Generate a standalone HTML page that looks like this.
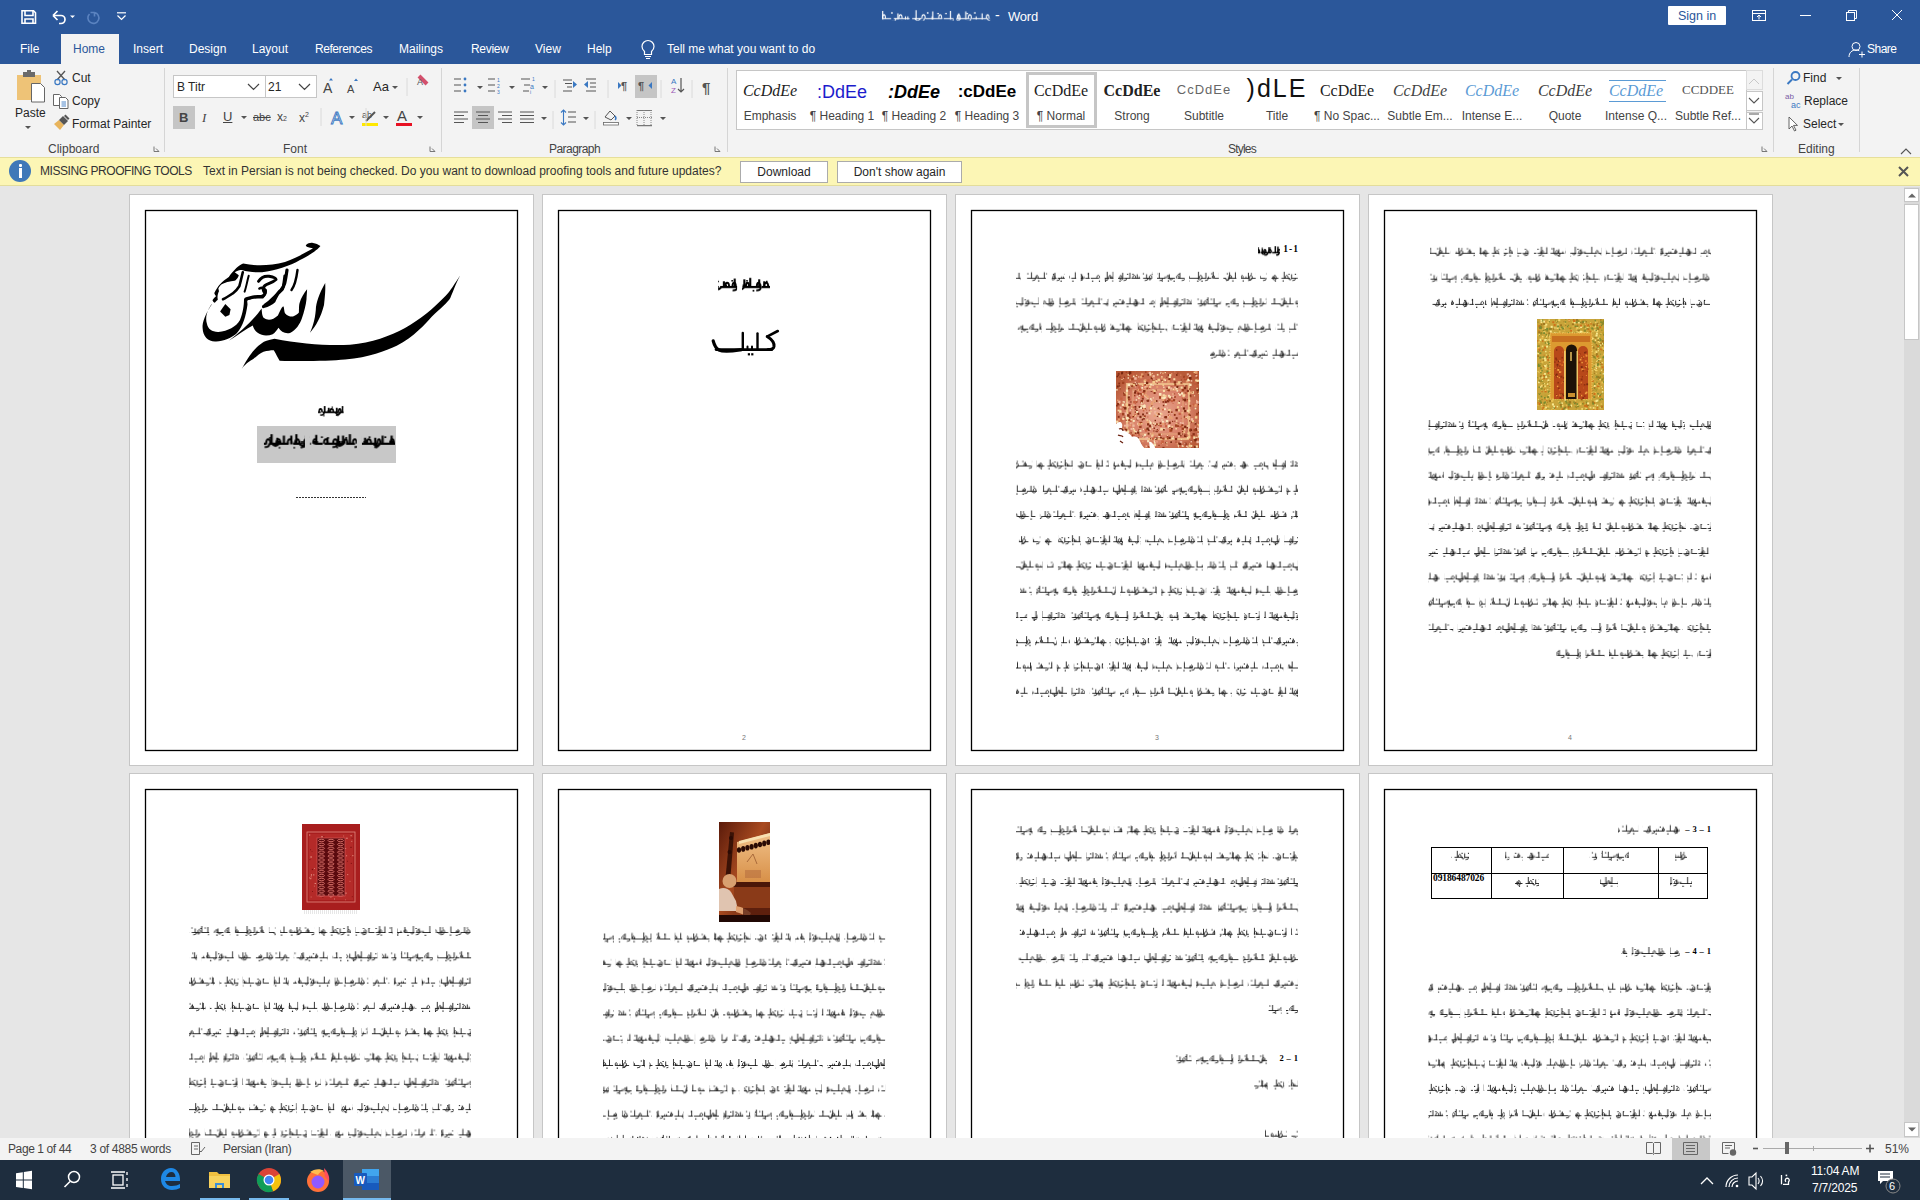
<!DOCTYPE html><html><head><meta charset="utf-8"><title>Word</title><style>

*{margin:0;padding:0;box-sizing:border-box}
html,body{width:1920px;height:1200px;overflow:hidden;background:#e6e6e6;font-family:"Liberation Sans",sans-serif;color:#262626}
.a{position:absolute}
.t{position:absolute;white-space:nowrap;line-height:1}
#tb{left:0;top:0;width:1920px;height:64px;background:#2b579a}
.tab{position:absolute;top:43px;font-size:12px;color:#fff;line-height:1}
#home{left:61px;top:34px;width:58px;height:31px;background:#f3f3f3}
#rib{left:0;top:64px;width:1920px;height:93px;background:#f3f3f3}
.rt{position:absolute;font-size:12px;color:#262626;white-space:nowrap;line-height:1}
.gl{position:absolute;top:143px;font-size:12px;color:#444;white-space:nowrap;line-height:1}
.sep{position:absolute;top:68px;width:1px;height:84px;background:#d5d5d5}
.sep2{position:absolute;width:1px;background:#dadada}
#msg{left:0;top:157px;width:1920px;height:29px;background:#fcf6b5;border-top:1px solid #e6df9a;border-bottom:1px solid #e3dd9c}
.btn{position:absolute;top:161px;height:22px;background:#fff;border:1px solid #ababab;font-size:12px;color:#262626;text-align:center;line-height:20px}
#doc{left:0;top:186px;width:1920px;height:952px;background:#e6e6e6;overflow:hidden}
.pg{position:absolute;width:405px;height:572px;background:#fff;border:1px solid #c6c6c6}
.pb{position:absolute;left:15px;top:15px;width:374px;height:541px;border:1.5px solid #000}
#sb{left:0;top:1138px;width:1920px;height:22px;background:#f3f3f3}
#task{left:0;top:1160px;width:1920px;height:40px;background:#1e2d3e}
.st{position:absolute;top:1143px;font-size:12px;color:#444;white-space:nowrap;line-height:1}

</style></head><body>
<div class="a" id="tb"></div>
<svg class="a" style="left:0;top:0" width="140" height="34" viewBox="0 0 140 34">
<g fill="none" stroke="#fff" stroke-width="1.6">
<path d="M22 10.8h11.5l2 2V23.2H22z"/><path d="M25 11v4.5h8V11"/><path d="M25 23v-4h8v4" />
</g>
<path d="M53 15.5l4.5-4.5M53 15.5l4.5 4.5M53 15.5h8a4 4 0 0 1 0 8h-2" fill="none" stroke="#fff" stroke-width="1.7"/>
<path d="M70 15.5h5l-2.5 2.5z" fill="#fff"/>
<path d="M94.5 12.5a5.5 5.5 0 1 1 -5 1.5M94.5 12.5v4M94.5 12.5h-4" fill="none" stroke="#5b83c0" stroke-width="1.6"/>
<path d="M117 12.8h9" stroke="#fff" stroke-width="1.2"/><path d="M117.5 15.5l4 4l4-4" fill="none" stroke="#fff" stroke-width="1.2"/>
</svg>
<div class="t" style="left:1008px;top:10px;font-size:13px;color:#fff;letter-spacing:-.2px">Word</div>
<div class="t" style="left:995px;top:8px;font-size:14px;color:#fff">-</div>
<div class="a" style="left:1668px;top:6px;width:58px;height:19px;background:#fff;border-radius:1px"></div>
<div class="t" style="left:1678px;top:10px;font-size:12.5px;color:#2b579a">Sign in</div>
<svg class="a" style="left:1740px;top:0" width="180" height="64" viewBox="1740 0 180 64">
<g fill="none" stroke="#fff" stroke-width="1">
<rect x="1752.5" y="10.5" width="13" height="10"/><path d="M1752.5 13.5h13M1759 19.5v-4.5M1757 17l2-2l2 2"/>
<path d="M1800 15.5h11"/>
<rect x="1846.5" y="12.5" width="8" height="8"/><path d="M1848.5 12.5v-2h8v8h-2"/>
<path d="M1892 10l10 10M1902 10l-10 10"/>
<circle cx="1856" cy="46.5" r="4"/><path d="M1849 57c0-4.5 3-7 7-7c1.5 0 2.5 .3 3.3 .8"/><path d="M1859 54.5h6M1862 51.5v6"/>
</g></svg>
<div class="t" style="left:1867px;top:43px;font-size:12px;color:#fff;letter-spacing:-.5px">Share</div>
<div class="a" id="home"></div>
<div class="tab" style="left:20px;color:#fff;letter-spacing:0px">File</div>
<div class="tab" style="left:73px;color:#2b579a;letter-spacing:0px">Home</div>
<div class="tab" style="left:133px;color:#fff;letter-spacing:0px">Insert</div>
<div class="tab" style="left:189px;color:#fff;letter-spacing:0px">Design</div>
<div class="tab" style="left:252px;color:#fff;letter-spacing:0px">Layout</div>
<div class="tab" style="left:315px;color:#fff;letter-spacing:-0.44px">References</div>
<div class="tab" style="left:399px;color:#fff;letter-spacing:0px">Mailings</div>
<div class="tab" style="left:471px;color:#fff;letter-spacing:-0.3px">Review</div>
<div class="tab" style="left:535px;color:#fff;letter-spacing:0px">View</div>
<div class="tab" style="left:587px;color:#fff;letter-spacing:0px">Help</div>
<div class="tab" style="left:667px;color:#fff;letter-spacing:0px">Tell me what you want to do</div>
<svg class="a" style="left:638px;top:38px" width="20" height="22" viewBox="0 0 20 22"><path d="M6.5 13.5c-1.5-1.3-2.5-3-2.5-5a6 6 0 0 1 12 0c0 2-1 3.7-2.5 5v3h-7z" fill="none" stroke="#fff" stroke-width="1.2"/><path d="M7 18.5h6M8 20.5h4" stroke="#fff" stroke-width="1.1"/></svg>
<div class="a" id="rib"></div>
<div class="rt" style="left:15px;top:107px;font-size:12px;">Paste</div>
<div class="rt" style="left:72px;top:72px;font-size:12px;">Cut</div>
<div class="rt" style="left:72px;top:95px;font-size:12px;">Copy</div>
<div class="rt" style="left:72px;top:118px;font-size:12px;">Format Painter</div>
<div class="gl" style="left:48px">Clipboard</div>
<div class="gl" style="left:283px">Font</div>
<div class="gl" style="left:549px;letter-spacing:-.55px">Paragraph</div>
<div class="gl" style="left:1228px;letter-spacing:-.8px">Styles</div>
<div class="gl" style="left:1798px">Editing</div>
<div class="sep" style="left:164px"></div>
<div class="sep" style="left:441px"></div>
<div class="sep" style="left:727px"></div>
<div class="sep" style="left:1773px"></div>
<div class="sep" style="left:1859px"></div>
<div class="a" style="left:173px;top:75px;width:93px;height:23px;background:#fff;border:1px solid #c6c6c6"></div>
<div class="a" style="left:265px;top:75px;width:52px;height:23px;background:#fff;border:1px solid #c6c6c6"></div>
<div class="rt" style="left:177px;top:81px;font-size:12px;">B Titr</div>
<div class="rt" style="left:268px;top:81px;font-size:12px;">21</div>
<div class="rt" style="left:373px;top:80px;font-size:13px;">Aa</div>
<div class="a" style="left:173px;top:106px;width:22px;height:23px;background:#c5c5c5"></div>
<div class="t" style="left:179px;top:111px;font-size:13px;font-weight:bold;color:#444">B</div>
<div class="t" style="left:202px;top:111px;font-size:13px;font-style:italic;font-family:'Liberation Serif';color:#444">I</div>
<div class="t" style="left:223px;top:110px;font-size:13px;text-decoration:underline;color:#444">U</div>
<div class="t" style="left:253px;top:112px;font-size:11px;text-decoration:line-through;color:#444">abc</div>
<div class="t" style="left:277px;top:111px;font-size:12px;color:#444">x<span style="font-size:7px">2</span></div>
<div class="t" style="left:299px;top:111px;font-size:12px;color:#444">x<span style="font-size:7px;vertical-align:5px">2</span></div>
<div class="t" style="left:323px;top:81px;font-size:14px;color:#444">A</div>
<div class="t" style="left:347px;top:84px;font-size:11px;color:#444">A</div>
<div class="a" style="left:635px;top:75px;width:22px;height:23px;background:#c5c5c5"></div>
<div class="a" style="left:472px;top:106px;width:22px;height:23px;background:#c5c5c5"></div>
<div class="a" style="left:736px;top:70px;width:1011px;height:60px;background:#fff;border:1px solid #c6c6c6"></div>
<div class="a" style="left:1026px;top:72px;width:71px;height:56px;border:3px solid #c6c6c6"></div>
<div class="a" style="left:1746px;top:70px;width:17px;height:20px;border:1px solid #dcdcdc;background:#f3f3f3"></div>
<div class="a" style="left:1746px;top:91px;width:17px;height:20px;border:1px solid #c6c6c6;background:#fff"></div>
<div class="a" style="left:1746px;top:112px;width:17px;height:18px;border:1px solid #c6c6c6;background:#fff"></div>
<div class="t" style="left:730px;width:80px;text-align:center;top:83px;font-family:'Liberation Serif';font-style:italic;font-size:16px;color:#222">CcDdEe</div>
<div class="t" style="left:730px;width:80px;text-align:center;top:110px;font-size:12px;color:#444">Emphasis</div>
<div class="t" style="left:802px;width:80px;text-align:center;top:83px;font-size:18px;color:#1c1ccc">:DdEe</div>
<div class="t" style="left:802px;width:80px;text-align:center;top:110px;font-size:12px;color:#444">¶ Heading 1</div>
<div class="t" style="left:874px;width:80px;text-align:center;top:83px;font-size:18px;font-weight:bold;font-style:italic;color:#000">:DdEe</div>
<div class="t" style="left:874px;width:80px;text-align:center;top:110px;font-size:12px;color:#444">¶ Heading 2</div>
<div class="t" style="left:947px;width:80px;text-align:center;top:83px;font-size:17px;font-weight:bold;color:#000">:cDdEe</div>
<div class="t" style="left:947px;width:80px;text-align:center;top:110px;font-size:12px;color:#444">¶ Heading 3</div>
<div class="t" style="left:1021px;width:80px;text-align:center;top:83px;font-family:'Liberation Serif';font-size:16px;color:#222">CcDdEe</div>
<div class="t" style="left:1021px;width:80px;text-align:center;top:110px;font-size:12px;color:#444">¶ Normal</div>
<div class="t" style="left:1092px;width:80px;text-align:center;top:83px;font-family:'Liberation Serif';font-size:16px;font-weight:bold;color:#222">CcDdEe</div>
<div class="t" style="left:1092px;width:80px;text-align:center;top:110px;font-size:12px;color:#444">Strong</div>
<div class="t" style="left:1164px;width:80px;text-align:center;top:83px;font-size:13px;letter-spacing:1px;color:#666">CcDdEe</div>
<div class="t" style="left:1164px;width:80px;text-align:center;top:110px;font-size:12px;color:#444">Subtitle</div>
<div class="t" style="left:1237px;width:80px;text-align:center;top:83px;font-size:25px;color:#111;letter-spacing:2px;margin-top:-7px">)dLE</div>
<div class="t" style="left:1237px;width:80px;text-align:center;top:110px;font-size:12px;color:#444">Title</div>
<div class="t" style="left:1307px;width:80px;text-align:center;top:83px;font-family:'Liberation Serif';font-size:16px;color:#222">CcDdEe</div>
<div class="t" style="left:1307px;width:80px;text-align:center;top:110px;font-size:12px;color:#444">¶ No Spac...</div>
<div class="t" style="left:1380px;width:80px;text-align:center;top:83px;font-family:'Liberation Serif';font-style:italic;font-size:16px;color:#444">CcDdEe</div>
<div class="t" style="left:1380px;width:80px;text-align:center;top:110px;font-size:12px;color:#444">Subtle Em...</div>
<div class="t" style="left:1452px;width:80px;text-align:center;top:83px;font-family:'Liberation Serif';font-style:italic;font-size:16px;color:#5b9bd5">CcDdEe</div>
<div class="t" style="left:1452px;width:80px;text-align:center;top:110px;font-size:12px;color:#444">Intense E...</div>
<div class="t" style="left:1525px;width:80px;text-align:center;top:83px;font-family:'Liberation Serif';font-style:italic;font-size:16px;color:#404040">CcDdEe</div>
<div class="t" style="left:1525px;width:80px;text-align:center;top:110px;font-size:12px;color:#444">Quote</div>
<div class="t" style="left:1596px;width:80px;text-align:center;top:83px;font-family:'Liberation Serif';font-style:italic;font-size:16px;color:#5b9bd5">CcDdEe</div>
<div class="t" style="left:1596px;width:80px;text-align:center;top:110px;font-size:12px;color:#444">Intense Q...</div>
<div class="t" style="left:1668px;width:80px;text-align:center;top:83px;font-family:'Liberation Serif';font-size:13px;color:#555;font-variant:small-caps">CCDDEE</div>
<div class="t" style="left:1668px;width:80px;text-align:center;top:110px;font-size:12px;color:#444">Subtle Ref...</div>
<div class="a" style="left:1609px;top:80px;width:57px;height:1px;background:#5b9bd5"></div>
<div class="a" style="left:1609px;top:101px;width:57px;height:1px;background:#5b9bd5"></div>
<div class="rt" style="left:1803px;top:72px;font-size:12px;">Find</div>
<div class="rt" style="left:1804px;top:95px;font-size:12px;">Replace</div>
<div class="rt" style="left:1803px;top:118px;font-size:12px;">Select</div>
<div class="a" id="msg"></div>
<div class="a" style="left:9px;top:160px;width:22px;height:22px;border-radius:50%;background:#3f78b8"></div>
<div class="a" style="left:18.5px;top:163.5px;width:3px;height:3px;background:#fff;border-radius:1px"></div>
<div class="a" style="left:18.5px;top:168px;width:3px;height:10px;background:#fff"></div>
<div class="t" style="left:40px;top:165px;font-size:12px;color:#333;letter-spacing:-.44px">MISSING PROOFING TOOLS</div>
<div class="t" style="left:203px;top:165px;font-size:12px;color:#333">Text in Persian is not being checked. Do you want to download proofing tools and future updates?</div>
<div class="btn" style="left:740px;width:88px">Download</div>
<div class="btn" style="left:837px;width:125px">Don't show again</div>
<svg class="a" style="left:1896px;top:164px" width="16" height="16"><path d="M3 3l9 9M12 3l-9 9" stroke="#555" stroke-width="2"/></svg>
<svg class="a" style="left:0;top:64px" width="1920" height="93" viewBox="0 64 1920 93">
<!-- paste -->
<rect x="17" y="75" width="24" height="25" fill="#eec377"/>
<path d="M23 72h12v5H23z" fill="#6a6a6a"/><rect x="27" y="70" width="4" height="3" fill="#6a6a6a"/>
<path d="M31.5 83.5h9l4 4v14.5h-13z" fill="#fff" stroke="#666" stroke-width="1"/>
<path d="M25 126l3 3l3-3z" fill="#555"/>
<!-- cut -->
<path d="M57 71l8 9M65 71l-8 9" stroke="#555" stroke-width="1.3"/>
<circle cx="57.5" cy="82" r="2.6" fill="none" stroke="#3a78c2" stroke-width="1.2"/><circle cx="64.5" cy="82" r="2.6" fill="none" stroke="#3a78c2" stroke-width="1.2"/>
<!-- copy -->
<path d="M53.5 94.5h6l2 2v9h-8z" fill="#fff" stroke="#666"/><path d="M59.5 97.5h6l2.5 2.5v8.5h-8.5z" fill="#fff" stroke="#666"/>
<path d="M61.5 102h4.5M61.5 104h4.5M61.5 106h4.5" stroke="#3a78c2" stroke-width=".9"/>
<!-- format painter -->
<path d="M54 124l6 6l4-5l-5-5z" fill="#e8b45c"/><path d="M59 120l5 5l4-4l-5-5z" fill="#555"/><path d="M64 116l4 4l1.5-1.5l-4-4z" fill="#555"/>
<path d="M154 146.5v5h5M156 148.5l3 3" fill="none" stroke="#777" stroke-width="1"/>
<!-- font dropdowns -->
<path d="M248 84l5.5 5.5l5.5-5.5M299 84l5.5 5.5l5.5-5.5" fill="none" stroke="#444" stroke-width="1.2"/>
<path d="M331 78l2 2.5h-4z M356 78.5l2 2.5h-4z" fill="#3a78c2"/>
<path d="M392 86h6l-3 3z" fill="#555"/>
<path d="M419 76l8 8" stroke="#d3506c" stroke-width="4"/><text x="417" y="85" font-size="9" fill="#555" font-family="Liberation Sans">A</text>
<!-- underline arrow etc -->
<path d="M241 116h6l-3 3z M349 116h6l-3 3z M383 116h6l-3 3z M417 116h6l-3 3z" fill="#555"/>
<path d="M366 116h88" stroke="none"/>
<!-- text effect A -->
<text x="331" y="124" font-size="17" fill="#fff" stroke="#3a78c2" stroke-width=".9" font-family="Liberation Sans">A</text>
<!-- highlight -->
<text x="362" y="118" font-size="9" fill="#555" font-family="Liberation Sans">ab</text><path d="M366 121l9-9" stroke="#555" stroke-width="2"/>
<rect x="362" y="123" width="16" height="3" fill="#ffe800"/>
<text x="397" y="121" font-size="15" fill="#444" font-family="Liberation Sans">A</text>
<rect x="396" y="123" width="16" height="3" fill="#e81123"/>
<!-- font group launcher -->
<path d="M430 146.5v5h5M432 148.5l3 3" fill="none" stroke="#777" stroke-width="1"/>
<path d="M366 108v18M321 108v18M407 78v18" stroke="#dadada"/>
<!-- paragraph row 1 -->
<g stroke="#555" stroke-width="1.2">
<path d="M454 79h7M454 85h7M454 91h7"/><path d="M488 79h7M488 85h7M488 91h7"/><path d="M521 79h9M524 85h6M523 91h6"/>
<path d="M563 80h9M565 83.5h7M567 87h5M563 91h9"/><path d="M586 79h10M590 83h6M590 87h6M586 91h10"/>
</g>
<g fill="#3a78c2"><circle cx="465" cy="79" r="1.4"/><circle cx="465" cy="85" r="1.4"/><circle cx="465" cy="91" r="1.4"/>
<text x="497" y="82" font-size="5">1</text><text x="497" y="88" font-size="5">2</text><text x="497" y="94" font-size="5">3</text>
<text x="532" y="81" font-size="5">1</text><text x="530" y="89" font-size="7">a</text><text x="530" y="94" font-size="5">i</text>
<path d="M573 81v7l4-3.5z"/><path d="M588 81v7l-4-3.5z" transform="translate(0,0)"/>
<path d="M618 82v7l3.5-3.5z"/><path d="M652 82v7l-3.5-3.5z"/>
</g>
<path d="M477 86h6l-3 3zM509 86h6l-3 3zM542 86h6l-3 3z" fill="#555"/>
<text x="621" y="90" font-size="11" font-weight="bold" fill="#555" font-family="Liberation Sans">¶</text>
<text x="638" y="90" font-size="11" font-weight="bold" fill="#555" font-family="Liberation Sans">¶</text>
<text x="671" y="84" font-size="8" fill="#3a78c2" font-family="Liberation Sans">A</text><text x="671" y="93" font-size="8" fill="#9b59b6" font-family="Liberation Sans">Z</text>
<path d="M681 78v14M678 89l3 3l3-3" fill="none" stroke="#555" stroke-width="1.2"/>
<text x="702" y="93" font-size="15" font-weight="bold" fill="#555" font-family="Liberation Sans">¶</text>
<path d="M555 80v18M608 80v18M661 80v18M692 80v18M553 111v18M595 111v18" stroke="#dadada"/>
<!-- paragraph row 2 -->
<g stroke="#555" stroke-width="1.2">
<path d="M454 112h14M454 115.5h10M454 119h14M454 122.5h10"/>
<path d="M476 112h14M478 115.5h10M476 119h14M478 122.5h10"/>
<path d="M498 112h14M502 115.5h10M498 119h14M502 122.5h10"/>
<path d="M520 112h14M520 115.5h14M520 119h14M520 122.5h14"/>
<path d="M568 112h8M568 117h8M568 122h8"/>
</g>
<path d="M541 117h6l-3 3zM583 117h6l-3 3zM626 117h6l-3 3zM660 117h6l-3 3z" fill="#555"/>
<path d="M563.5 110v15M561 112.5l2.5-2.5l2.5 2.5M561 122.5l2.5 2.5l2.5-2.5" fill="none" stroke="#3a78c2" stroke-width="1.1"/>
<path d="M605 117l5-6l5 5l-4 4z" fill="none" stroke="#555"/><path d="M615 116c1 1.5 1.5 3 0 4" stroke="#3a78c2" stroke-width="1.5" fill="none"/>
<rect x="603.5" y="122.5" width="15" height="2.5" fill="#fff" stroke="#666" stroke-width=".8"/>
<g fill="#777"><path d="M637 110h15v1h-15zM637 125h15v1.2h-15z"/></g>
<path d="M637 110v15M644 110v15M651 110v15M637 117.5h15" stroke="#888" stroke-dasharray="1 1"/>
<path d="M715 146.5v5h5M717 148.5l3 3" fill="none" stroke="#777" stroke-width="1"/>
<!-- gallery arrows -->
<path d="M1749 84l5-5l5 5" fill="none" stroke="#c8c8c8" stroke-width="1"/>
<path d="M1749 98l5 5l5-5" fill="none" stroke="#555" stroke-width="1.1"/>
<path d="M1749 114h10M1749 118l5 5l5-5" fill="none" stroke="#555" stroke-width="1.1"/>
<path d="M1762 146.5v5h5M1764 148.5l3 3" fill="none" stroke="#777" stroke-width="1"/>
<!-- editing icons -->
<circle cx="1795.5" cy="76" r="4" fill="none" stroke="#3a78c2" stroke-width="1.8"/><path d="M1792 79.5l-4.5 4.5" stroke="#3a78c2" stroke-width="2"/>
<path d="M1836 77h6l-3 3z M1838 123h6l-3 3z" fill="#555"/>
<text x="1785" y="99" font-size="8" fill="#7b5ea7" font-family="Liberation Sans">ab</text><text x="1791" y="108" font-size="9" fill="#3a78c2" font-family="Liberation Sans">ac</text>
<path d="M1789 117v12l3-3l2.5 5l1.5-.8l-2.5-4.8h4z" fill="#fff" stroke="#555" stroke-width=".9"/>
<path d="M1901 154l5-5l5 5" fill="none" stroke="#555" stroke-width="1.1"/>
</svg>
<div class="a" id="doc"></div>
<div class="pg" style="left:129px;top:194px"></div>
<div class="pg" style="left:542px;top:194px"></div>
<div class="pg" style="left:955px;top:194px"></div>
<div class="pg" style="left:1368px;top:194px"></div>
<div class="pg" style="left:129px;top:773px"></div>
<div class="pg" style="left:542px;top:773px"></div>
<div class="pg" style="left:955px;top:773px"></div>
<div class="pg" style="left:1368px;top:773px"></div>
<div class="a" style="left:257px;top:426px;width:139px;height:37px;background:#c8c8c8"></div>
<svg class="a" style="left:0;top:0" width="1920" height="1138" viewBox="0 0 1920 1138">
<defs><pattern id="tp" patternUnits="userSpaceOnUse" width="397" height="16"><path d="M0.0 10.5h8.5M11.5 10.5h8.5M22.0 10.5h5.8M30.9 10.5h10.3M43.2 10.5h4.9M50.6 10.5h5.4M57.2 10.5h10.0M70.2 10.5h13.6M85.8 10.5h10.2M97.3 10.5h4.6M103.9 10.5h12.8M117.9 10.5h11.8M132.2 10.5h8.4M142.6 10.5h9.2M154.2 10.5h9.0M164.4 10.5h8.6M175.5 10.5h8.1M184.8 10.5h11.1M198.4 10.5h11.6M212.4 10.5h4.3M217.9 10.5h8.0M228.4 10.5h7.9M237.5 10.5h12.5M251.2 10.5h6.1M258.5 10.5h8.7M270.2 10.5h8.2M280.4 10.5h11.8M294.7 10.5h7.4M304.6 10.5h7.3M314.9 10.5h11.6M327.7 10.5h5.3M334.2 10.5h4.1M341.3 10.5h12.0M355.3 10.5h10.8M368.1 10.5h8.5M378.6 10.5h13.9M394.5 10.5h8.2" stroke="#111" stroke-width="0.85"/><path d="M0.3 11.0v-6.0M14.3 11.0v-7.0M21.7 11.0v-4.5M29.4 11.0v-7.0M36.3 11.0v-6.0M50.3 11.0v-4.5M61.1 11.0v-7.0M66.4 11.0v-6.5M73.4 11.0v-6.0M78.4 11.0v-4.5M86.4 11.0v-6.0M94.9 11.0v-7.0M100.7 11.0v-4.5M111.4 11.0v-7.0M121.8 11.0v-6.0M132.4 11.0v-6.5M146.1 11.0v-6.0M158.6 11.0v-6.5M171.4 11.0v-6.5M182.0 11.0v-6.0M195.2 11.0v-4.5M202.4 11.0v-6.5M208.8 11.0v-4.5M215.6 11.0v-6.0M228.6 11.0v-4.5M234.3 11.0v-7.0M240.2 11.0v-7.0M249.8 11.0v-6.0M257.0 11.0v-6.0M264.3 11.0v-4.5M273.7 11.0v-4.5M280.3 11.0v-7.0M286.4 11.0v-6.0M296.4 11.0v-4.5M307.0 11.0v-6.0M313.9 11.0v-6.5M325.6 11.0v-7.0M333.0 11.0v-6.0M340.3 11.0v-7.0M346.9 11.0v-6.0M356.6 11.0v-6.5M362.5 11.0v-6.5M375.5 11.0v-6.0M386.4 11.0v-4.5M396.7 11.0v-6.5" stroke="#111" stroke-width="0.85"/><path d="M2.8 11.0v-2.3M4.6 11.0v-2.3M31.1 11.0v-2.3M32.9 11.0v-2.3M60.2 11.0v-2.3M82.4 11.0v-2.3M102.9 11.0v-2.3M104.7 11.0v-2.3M123.0 11.0v-2.3M137.8 11.0v-2.3M139.6 11.0v-2.3M163.8 11.0v-2.3M188.7 11.0v-2.3M190.5 11.0v-2.3M209.2 11.0v-2.3M211.0 11.0v-2.3M237.4 11.0v-2.3M239.2 11.0v-2.3M266.2 11.0v-2.3M292.1 11.0v-2.3M314.7 11.0v-2.3M316.5 11.0v-2.3M335.6 11.0v-2.3M357.9 11.0v-2.3M373.0 11.0v-2.3" stroke="#111" stroke-width="0.77"/><path d="M3.5 10.5q0 -3 1.4 -3q1.4 0 1.4 3M15.4 10.5q0 -3 1.4 -3q1.4 0 1.4 3M29.2 10.5q0 -3 1.3 -3q1.3 0 1.3 3M45.6 10.5q0 -3 1.1 -3q1.1 0 1.1 3M61.1 10.5q0 -3 1.0 -3q1.0 0 1.0 3M75.1 10.5q0 -3 1.3 -3q1.3 0 1.3 3M85.4 10.5q0 -3 1.4 -3q1.4 0 1.4 3M98.4 10.5q0 -3 1.4 -3q1.4 0 1.4 3M115.6 10.5q0 -3 1.2 -3q1.2 0 1.2 3M123.7 10.5q0 -3 1.2 -3q1.2 0 1.2 3M138.5 10.5q0 -3 1.1 -3q1.1 0 1.1 3M148.2 10.5q0 -3 1.5 -3q1.5 0 1.5 3M162.8 10.5q0 -3 1.3 -3q1.3 0 1.3 3M179.7 10.5q0 -3 1.2 -3q1.2 0 1.2 3M194.4 10.5q0 -3 1.1 -3q1.1 0 1.1 3M206.7 10.5q0 -3 1.5 -3q1.5 0 1.5 3M223.8 10.5q0 -3 1.5 -3q1.5 0 1.5 3M235.7 10.5q0 -3 1.3 -3q1.3 0 1.3 3M246.8 10.5q0 -3 1.1 -3q1.1 0 1.1 3M259.8 10.5q0 -3 1.5 -3q1.5 0 1.5 3M276.3 10.5q0 -3 1.4 -3q1.4 0 1.4 3M293.8 10.5q0 -3 1.2 -3q1.2 0 1.2 3M303.5 10.5q0 -3 1.3 -3q1.3 0 1.3 3M314.2 10.5q0 -3 1.1 -3q1.1 0 1.1 3M326.4 10.5q0 -3 1.4 -3q1.4 0 1.4 3M339.3 10.5q0 -3 1.2 -3q1.2 0 1.2 3M355.7 10.5q0 -3 1.6 -3q1.6 0 1.6 3M368.2 10.5q0 -3 1.0 -3q1.0 0 1.0 3M376.5 10.5q0 -3 1.5 -3q1.5 0 1.5 3M384.9 10.5q0 -3 1.4 -3q1.4 0 1.4 3" stroke="#111" stroke-width="0.81" fill="none"/><path d="M1.9 10.2q2.7 3.8 5.5 0M18.2 10.2q1.9 3.8 3.8 0M42.4 10.2q1.8 3.8 3.6 0M73.3 10.2q2.0 3.8 4.1 0M91.9 10.2q1.8 3.8 3.6 0M119.2 10.2q2.3 3.8 4.6 0M146.5 10.2q2.6 3.8 5.1 0M177.1 10.2q2.9 3.8 5.9 0M205.4 10.2q2.0 3.8 4.0 0M229.9 10.2q2.0 3.8 3.9 0M246.1 10.2q2.3 3.8 4.7 0M275.0 10.2q2.0 3.8 3.9 0M295.9 10.2q2.2 3.8 4.4 0M324.4 10.2q2.4 3.8 4.8 0M351.5 10.2q2.7 3.8 5.4 0M374.6 10.2q2.7 3.8 5.5 0" stroke="#111" stroke-width="0.81" fill="none"/><path d="M0.5 10.2q0.3 3 -3.2 2.6M25.6 10.2q0.3 3 -3.2 2.6M47.7 10.2q0.3 3 -3.2 2.6M61.5 10.2q0.3 3 -3.2 2.6M79.9 10.2q0.3 3 -3.2 2.6M100.6 10.2q0.3 3 -3.2 2.6M125.4 10.2q0.3 3 -3.2 2.6M142.6 10.2q0.3 3 -3.2 2.6M162.6 10.2q0.3 3 -3.2 2.6M186.9 10.2q0.3 3 -3.2 2.6M210.1 10.2q0.3 3 -3.2 2.6M235.3 10.2q0.3 3 -3.2 2.6M253.8 10.2q0.3 3 -3.2 2.6M274.9 10.2q0.3 3 -3.2 2.6M289.8 10.2q0.3 3 -3.2 2.6M311.9 10.2q0.3 3 -3.2 2.6M335.3 10.2q0.3 3 -3.2 2.6M356.3 10.2q0.3 3 -3.2 2.6M378.4 10.2q0.3 3 -3.2 2.6M393.3 10.2q0.3 3 -3.2 2.6" stroke="#111" stroke-width="0.81" fill="none"/><path d="M4.9 12.6h1.2v1.1h-1.2zM12.7 12.6h1.2v1.1h-1.2zM18.5 6.0h1.2v1.1h-1.2zM24.9 6.0h1.2v1.1h-1.2zM29.2 12.6h1.2v1.1h-1.2zM37.0 12.6h1.2v1.1h-1.2zM44.5 6.0h1.2v1.1h-1.2zM50.0 6.0h1.2v1.1h-1.2zM57.0 6.0h1.2v1.1h-1.2zM62.2 12.6h1.2v1.1h-1.2zM71.0 5.5h1.2v1.1h-1.2zM78.3 12.8h1.2v1.1h-1.2zM88.9 12.8h1.2v1.1h-1.2zM97.0 6.0h1.2v1.1h-1.2zM106.3 12.8h1.2v1.1h-1.2zM114.0 12.6h1.2v1.1h-1.2zM123.8 5.5h1.2v1.1h-1.2zM131.4 12.6h1.2v1.1h-1.2zM137.6 12.8h1.2v1.1h-1.2zM148.3 5.5h1.2v1.1h-1.2zM154.4 5.5h1.2v1.1h-1.2zM165.2 12.6h1.2v1.1h-1.2zM173.2 5.5h1.2v1.1h-1.2zM180.1 6.0h1.2v1.1h-1.2zM187.6 12.8h1.2v1.1h-1.2zM191.8 6.0h1.2v1.1h-1.2zM199.4 12.8h1.2v1.1h-1.2zM207.2 6.0h1.2v1.1h-1.2zM214.7 5.5h1.2v1.1h-1.2zM219.1 12.8h1.2v1.1h-1.2zM226.0 12.8h1.2v1.1h-1.2zM231.9 12.8h1.2v1.1h-1.2zM239.4 12.6h1.2v1.1h-1.2zM246.4 12.8h1.2v1.1h-1.2zM254.1 6.0h1.2v1.1h-1.2zM259.4 6.0h1.2v1.1h-1.2zM269.9 5.5h1.2v1.1h-1.2zM278.8 6.0h1.2v1.1h-1.2zM283.1 5.5h1.2v1.1h-1.2zM288.7 12.6h1.2v1.1h-1.2zM294.9 12.6h1.2v1.1h-1.2zM300.6 12.8h1.2v1.1h-1.2zM305.4 6.0h1.2v1.1h-1.2zM315.3 12.6h1.2v1.1h-1.2zM324.3 12.8h1.2v1.1h-1.2zM328.5 12.8h1.2v1.1h-1.2zM338.3 5.5h1.2v1.1h-1.2zM346.0 5.5h1.2v1.1h-1.2zM353.8 5.5h1.2v1.1h-1.2zM359.4 12.6h1.2v1.1h-1.2zM369.7 12.6h1.2v1.1h-1.2zM377.9 5.5h1.2v1.1h-1.2zM383.5 5.5h1.2v1.1h-1.2zM393.7 5.5h1.2v1.1h-1.2z" fill="#111"/></pattern><pattern id="tpb" patternUnits="userSpaceOnUse" width="397" height="16"><path d="M0.0 10.5h10.2M12.7 10.5h12.0M25.9 10.5h12.4M40.3 10.5h10.5M52.8 10.5h5.1M60.9 10.5h12.7M76.6 10.5h9.4M88.0 10.5h4.1M94.2 10.5h8.1M104.2 10.5h13.2M120.4 10.5h5.6M127.2 10.5h5.4M135.6 10.5h5.3M142.1 10.5h13.7M157.0 10.5h6.1M165.1 10.5h13.6M180.7 10.5h12.7M195.9 10.5h7.1M205.0 10.5h9.4M216.4 10.5h5.8M224.2 10.5h13.7M240.9 10.5h7.0M250.4 10.5h8.1M260.5 10.5h6.6M269.7 10.5h7.0M277.9 10.5h10.0M290.4 10.5h4.7M297.5 10.5h12.2M312.7 10.5h11.0M325.7 10.5h8.8M336.5 10.5h4.6M342.2 10.5h13.5M358.2 10.5h12.4M371.9 10.5h9.5M384.4 10.5h7.7M393.2 10.5h8.5" stroke="#000" stroke-width="1.5"/><path d="M1.9 11.0v-6.5M5.2 11.0v-6.5M12.7 11.0v-6.0M17.2 11.0v-6.0M24.4 11.0v-6.0M31.1 11.0v-7.0M36.8 11.0v-6.0M43.9 11.0v-7.0M48.8 11.0v-7.0M52.6 11.0v-4.5M58.5 11.0v-6.5M62.9 11.0v-4.5M66.2 11.0v-6.0M70.5 11.0v-7.0M76.4 11.0v-6.0M84.2 11.0v-6.5M90.5 11.0v-7.0M98.3 11.0v-4.5M105.6 11.0v-7.0M109.6 11.0v-4.5M114.1 11.0v-6.0M119.2 11.0v-6.0M122.7 11.0v-7.0M129.5 11.0v-6.0M136.4 11.0v-6.5M144.1 11.0v-4.5M151.6 11.0v-6.0M154.9 11.0v-6.0M159.6 11.0v-7.0M166.6 11.0v-6.0M170.1 11.0v-4.5M177.1 11.0v-4.5M182.2 11.0v-6.0M188.4 11.0v-6.0M193.6 11.0v-6.0M198.7 11.0v-6.5M202.0 11.0v-4.5M209.6 11.0v-6.0M216.7 11.0v-6.5M219.9 11.0v-6.0M225.3 11.0v-4.5M232.4 11.0v-6.0M235.5 11.0v-6.0M241.8 11.0v-7.0M248.3 11.0v-6.0M253.9 11.0v-6.0M260.9 11.0v-6.0M267.5 11.0v-6.0M275.0 11.0v-6.0M281.1 11.0v-4.5M288.1 11.0v-6.0M293.6 11.0v-6.0M298.0 11.0v-6.0M303.1 11.0v-4.5M309.1 11.0v-6.0M313.7 11.0v-6.0M320.1 11.0v-6.0M324.7 11.0v-6.5M331.8 11.0v-6.0M339.4 11.0v-6.0M344.8 11.0v-4.5M352.5 11.0v-6.5M359.4 11.0v-6.0M363.6 11.0v-7.0M370.0 11.0v-6.0M373.6 11.0v-4.5M379.0 11.0v-6.0M383.3 11.0v-4.5M390.0 11.0v-6.0M396.3 11.0v-7.0" stroke="#000" stroke-width="1.5"/><path d="M1.8 11.0v-2.3M11.9 11.0v-2.3M25.3 11.0v-2.3M41.4 11.0v-2.3M51.2 11.0v-2.3M60.5 11.0v-2.3M72.7 11.0v-2.3M84.4 11.0v-2.3M86.2 11.0v-2.3M97.7 11.0v-2.3M110.7 11.0v-2.3M124.8 11.0v-2.3M126.6 11.0v-2.3M135.1 11.0v-2.3M136.9 11.0v-2.3M152.7 11.0v-2.3M154.5 11.0v-2.3M169.7 11.0v-2.3M171.5 11.0v-2.3M187.5 11.0v-2.3M189.3 11.0v-2.3M198.5 11.0v-2.3M200.3 11.0v-2.3M216.2 11.0v-2.3M218.0 11.0v-2.3M233.9 11.0v-2.3M245.6 11.0v-2.3M247.4 11.0v-2.3M259.5 11.0v-2.3M272.6 11.0v-2.3M274.4 11.0v-2.3M290.3 11.0v-2.3M303.5 11.0v-2.3M305.3 11.0v-2.3M320.2 11.0v-2.3M331.6 11.0v-2.3M333.4 11.0v-2.3M346.3 11.0v-2.3M357.3 11.0v-2.3M359.1 11.0v-2.3M370.9 11.0v-2.3M383.2 11.0v-2.3M385.0 11.0v-2.3" stroke="#000" stroke-width="1.35"/><path d="M1.5 10.5q0 -3 1.6 -3q1.6 0 1.6 3M11.0 10.5q0 -3 1.4 -3q1.4 0 1.4 3M16.9 10.5q0 -3 1.6 -3q1.6 0 1.6 3M24.1 10.5q0 -3 1.2 -3q1.2 0 1.2 3M30.3 10.5q0 -3 1.6 -3q1.6 0 1.6 3M37.5 10.5q0 -3 1.2 -3q1.2 0 1.2 3M44.6 10.5q0 -3 1.1 -3q1.1 0 1.1 3M52.5 10.5q0 -3 1.3 -3q1.3 0 1.3 3M58.6 10.5q0 -3 1.5 -3q1.5 0 1.5 3M67.6 10.5q0 -3 1.0 -3q1.0 0 1.0 3M75.0 10.5q0 -3 1.2 -3q1.2 0 1.2 3M84.7 10.5q0 -3 1.5 -3q1.5 0 1.5 3M90.5 10.5q0 -3 1.2 -3q1.2 0 1.2 3M95.8 10.5q0 -3 1.6 -3q1.6 0 1.6 3M101.9 10.5q0 -3 1.4 -3q1.4 0 1.4 3M108.9 10.5q0 -3 1.4 -3q1.4 0 1.4 3M116.7 10.5q0 -3 1.4 -3q1.4 0 1.4 3M121.8 10.5q0 -3 1.5 -3q1.5 0 1.5 3M128.0 10.5q0 -3 1.3 -3q1.3 0 1.3 3M134.3 10.5q0 -3 1.2 -3q1.2 0 1.2 3M141.7 10.5q0 -3 1.3 -3q1.3 0 1.3 3M148.1 10.5q0 -3 1.4 -3q1.4 0 1.4 3M155.8 10.5q0 -3 1.0 -3q1.0 0 1.0 3M161.7 10.5q0 -3 1.3 -3q1.3 0 1.3 3M171.2 10.5q0 -3 1.5 -3q1.5 0 1.5 3M178.7 10.5q0 -3 1.0 -3q1.0 0 1.0 3M187.5 10.5q0 -3 1.3 -3q1.3 0 1.3 3M195.1 10.5q0 -3 1.4 -3q1.4 0 1.4 3M203.1 10.5q0 -3 1.3 -3q1.3 0 1.3 3M212.6 10.5q0 -3 1.2 -3q1.2 0 1.2 3M219.2 10.5q0 -3 1.5 -3q1.5 0 1.5 3M224.7 10.5q0 -3 1.2 -3q1.2 0 1.2 3M233.8 10.5q0 -3 1.0 -3q1.0 0 1.0 3M242.9 10.5q0 -3 1.4 -3q1.4 0 1.4 3M249.7 10.5q0 -3 1.2 -3q1.2 0 1.2 3M258.5 10.5q0 -3 1.5 -3q1.5 0 1.5 3M263.7 10.5q0 -3 1.3 -3q1.3 0 1.3 3M271.2 10.5q0 -3 1.3 -3q1.3 0 1.3 3M277.5 10.5q0 -3 1.1 -3q1.1 0 1.1 3M285.2 10.5q0 -3 1.5 -3q1.5 0 1.5 3M290.0 10.5q0 -3 1.1 -3q1.1 0 1.1 3M299.0 10.5q0 -3 1.5 -3q1.5 0 1.5 3M307.2 10.5q0 -3 1.0 -3q1.0 0 1.0 3M315.6 10.5q0 -3 1.6 -3q1.6 0 1.6 3M325.6 10.5q0 -3 1.4 -3q1.4 0 1.4 3M330.3 10.5q0 -3 1.5 -3q1.5 0 1.5 3M336.0 10.5q0 -3 1.4 -3q1.4 0 1.4 3M345.7 10.5q0 -3 1.4 -3q1.4 0 1.4 3M350.9 10.5q0 -3 1.2 -3q1.2 0 1.2 3M360.5 10.5q0 -3 1.1 -3q1.1 0 1.1 3M368.3 10.5q0 -3 1.2 -3q1.2 0 1.2 3M373.6 10.5q0 -3 1.4 -3q1.4 0 1.4 3M378.3 10.5q0 -3 1.1 -3q1.1 0 1.1 3M384.9 10.5q0 -3 1.0 -3q1.0 0 1.0 3M389.6 10.5q0 -3 1.3 -3q1.3 0 1.3 3" stroke="#000" stroke-width="1.42" fill="none"/><path d="M5.3 10.2q1.9 3.8 3.8 0M29.0 10.2q2.1 3.8 4.3 0M55.8 10.2q2.4 3.8 4.7 0M88.7 10.2q2.2 3.8 4.4 0M105.7 10.2q2.6 3.8 5.2 0M124.5 10.2q2.5 3.8 5.1 0M149.6 10.2q2.9 3.8 5.8 0M175.6 10.2q2.5 3.8 5.1 0M196.3 10.2q2.4 3.8 4.9 0M216.9 10.2q2.7 3.8 5.4 0M242.2 10.2q1.9 3.8 3.8 0M262.4 10.2q2.2 3.8 4.4 0M291.7 10.2q2.0 3.8 3.9 0M320.5 10.2q2.6 3.8 5.1 0M338.0 10.2q2.6 3.8 5.2 0M355.7 10.2q1.9 3.8 3.8 0M382.4 10.2q2.0 3.8 4.1 0" stroke="#000" stroke-width="1.42" fill="none"/><path d="M2.9 10.2q0.3 3 -3.2 2.6M19.4 10.2q0.3 3 -3.2 2.6M42.6 10.2q0.3 3 -3.2 2.6M55.0 10.2q0.3 3 -3.2 2.6M77.1 10.2q0.3 3 -3.2 2.6M89.9 10.2q0.3 3 -3.2 2.6M104.0 10.2q0.3 3 -3.2 2.6M129.3 10.2q0.3 3 -3.2 2.6M150.8 10.2q0.3 3 -3.2 2.6M166.0 10.2q0.3 3 -3.2 2.6M179.6 10.2q0.3 3 -3.2 2.6M205.2 10.2q0.3 3 -3.2 2.6M226.5 10.2q0.3 3 -3.2 2.6M250.0 10.2q0.3 3 -3.2 2.6M264.0 10.2q0.3 3 -3.2 2.6M284.7 10.2q0.3 3 -3.2 2.6M301.7 10.2q0.3 3 -3.2 2.6M317.0 10.2q0.3 3 -3.2 2.6M333.6 10.2q0.3 3 -3.2 2.6M354.2 10.2q0.3 3 -3.2 2.6M371.1 10.2q0.3 3 -3.2 2.6M388.5 10.2q0.3 3 -3.2 2.6" stroke="#000" stroke-width="1.42" fill="none"/><path d="M4.2 12.6h1.2v1.1h-1.2zM13.8 12.8h1.2v1.1h-1.2zM24.5 12.6h1.2v1.1h-1.2zM32.1 5.5h1.2v1.1h-1.2zM41.3 12.8h1.2v1.1h-1.2zM45.8 6.0h1.2v1.1h-1.2zM50.0 5.5h1.2v1.1h-1.2zM55.4 12.8h1.2v1.1h-1.2zM65.6 12.8h1.2v1.1h-1.2zM74.2 12.6h1.2v1.1h-1.2zM78.2 12.8h1.2v1.1h-1.2zM84.3 12.8h1.2v1.1h-1.2zM90.6 12.8h1.2v1.1h-1.2zM95.3 5.5h1.2v1.1h-1.2zM103.9 6.0h1.2v1.1h-1.2zM110.5 12.8h1.2v1.1h-1.2zM120.6 12.8h1.2v1.1h-1.2zM125.6 12.6h1.2v1.1h-1.2zM130.4 5.5h1.2v1.1h-1.2zM139.7 5.5h1.2v1.1h-1.2zM143.9 6.0h1.2v1.1h-1.2zM150.3 12.6h1.2v1.1h-1.2zM156.5 6.0h1.2v1.1h-1.2zM165.3 12.8h1.2v1.1h-1.2zM172.6 5.5h1.2v1.1h-1.2zM177.4 12.6h1.2v1.1h-1.2zM183.5 5.5h1.2v1.1h-1.2zM192.6 5.5h1.2v1.1h-1.2zM196.8 6.0h1.2v1.1h-1.2zM204.8 6.0h1.2v1.1h-1.2zM213.2 12.6h1.2v1.1h-1.2zM221.9 5.5h1.2v1.1h-1.2zM229.2 12.6h1.2v1.1h-1.2zM233.7 12.8h1.2v1.1h-1.2zM238.8 5.5h1.2v1.1h-1.2zM244.1 5.5h1.2v1.1h-1.2zM254.6 12.8h1.2v1.1h-1.2zM263.7 12.6h1.2v1.1h-1.2zM267.8 6.0h1.2v1.1h-1.2zM274.9 12.8h1.2v1.1h-1.2zM280.1 6.0h1.2v1.1h-1.2zM288.0 12.6h1.2v1.1h-1.2zM298.5 6.0h1.2v1.1h-1.2zM304.2 12.8h1.2v1.1h-1.2zM308.8 12.8h1.2v1.1h-1.2zM313.2 5.5h1.2v1.1h-1.2zM321.7 12.8h1.2v1.1h-1.2zM328.5 6.0h1.2v1.1h-1.2zM332.8 12.8h1.2v1.1h-1.2zM340.0 6.0h1.2v1.1h-1.2zM350.1 5.5h1.2v1.1h-1.2zM355.3 12.8h1.2v1.1h-1.2zM360.7 5.5h1.2v1.1h-1.2zM365.3 12.6h1.2v1.1h-1.2zM374.8 6.0h1.2v1.1h-1.2zM382.6 5.5h1.2v1.1h-1.2zM390.8 5.5h1.2v1.1h-1.2z" fill="#000"/></pattern><pattern id="tpw" patternUnits="userSpaceOnUse" width="397" height="16"><path d="M0.0 10.5h8.6M11.1 10.5h6.7M19.8 10.5h12.7M33.7 10.5h7.4M44.1 10.5h13.0M58.2 10.5h7.3M66.8 10.5h11.3M80.1 10.5h11.0M94.1 10.5h13.5M110.6 10.5h5.6M118.2 10.5h4.5M124.7 10.5h9.1M135.0 10.5h11.7M149.7 10.5h11.9M162.8 10.5h13.2M178.0 10.5h10.7M191.7 10.5h12.9M207.1 10.5h13.1M223.2 10.5h6.8M231.2 10.5h6.0M238.4 10.5h12.8M252.4 10.5h13.0M268.4 10.5h5.4M275.8 10.5h8.2M285.2 10.5h13.6M300.1 10.5h5.2M307.3 10.5h13.0M322.2 10.5h7.3M330.7 10.5h5.3M337.3 10.5h9.0M349.3 10.5h9.4M360.7 10.5h8.2M371.9 10.5h5.9M379.0 10.5h11.0M392.0 10.5h5.7" stroke="#fff" stroke-width="0.9"/><path d="M0.2 11.0v-4.5M11.3 11.0v-6.5M23.0 11.0v-4.5M37.0 11.0v-7.0M49.8 11.0v-6.0M63.4 11.0v-6.5M69.8 11.0v-4.5M75.2 11.0v-6.0M87.8 11.0v-4.5M98.1 11.0v-7.0M110.9 11.0v-7.0M123.7 11.0v-4.5M132.0 11.0v-6.5M140.6 11.0v-4.5M152.3 11.0v-6.0M164.5 11.0v-6.0M169.5 11.0v-7.0M176.5 11.0v-6.0M183.9 11.0v-7.0M191.7 11.0v-6.0M197.6 11.0v-7.0M202.8 11.0v-4.5M215.1 11.0v-6.0M223.2 11.0v-6.5M233.3 11.0v-7.0M242.1 11.0v-6.5M248.0 11.0v-6.0M257.6 11.0v-4.5M265.9 11.0v-6.0M272.4 11.0v-6.0M277.7 11.0v-6.5M285.1 11.0v-6.5M298.9 11.0v-4.5M305.3 11.0v-7.0M310.8 11.0v-6.5M322.9 11.0v-6.0M333.4 11.0v-6.0M341.0 11.0v-6.0M351.0 11.0v-6.5M364.7 11.0v-4.5M372.3 11.0v-7.0M377.9 11.0v-6.0M384.2 11.0v-4.5M396.1 11.0v-6.0" stroke="#fff" stroke-width="0.9"/><path d="M2.4 11.0v-2.3M4.2 11.0v-2.3M28.8 11.0v-2.3M30.6 11.0v-2.3M49.3 11.0v-2.3M67.0 11.0v-2.3M83.2 11.0v-2.3M99.3 11.0v-2.3M125.1 11.0v-2.3M141.4 11.0v-2.3M143.2 11.0v-2.3M165.2 11.0v-2.3M167.0 11.0v-2.3M182.0 11.0v-2.3M183.8 11.0v-2.3M205.9 11.0v-2.3M207.7 11.0v-2.3M229.0 11.0v-2.3M250.9 11.0v-2.3M252.7 11.0v-2.3M274.2 11.0v-2.3M300.2 11.0v-2.3M302.0 11.0v-2.3M316.7 11.0v-2.3M340.6 11.0v-2.3M355.8 11.0v-2.3M357.6 11.0v-2.3M377.8 11.0v-2.3M379.6 11.0v-2.3" stroke="#fff" stroke-width="0.81"/><path d="M2.9 10.5q0 -3 1.4 -3q1.4 0 1.4 3M11.2 10.5q0 -3 1.1 -3q1.1 0 1.1 3M23.8 10.5q0 -3 1.2 -3q1.2 0 1.2 3M41.4 10.5q0 -3 1.3 -3q1.3 0 1.3 3M54.4 10.5q0 -3 1.1 -3q1.1 0 1.1 3M68.6 10.5q0 -3 1.1 -3q1.1 0 1.1 3M77.1 10.5q0 -3 1.2 -3q1.2 0 1.2 3M91.0 10.5q0 -3 1.0 -3q1.0 0 1.0 3M99.3 10.5q0 -3 1.5 -3q1.5 0 1.5 3M108.1 10.5q0 -3 1.0 -3q1.0 0 1.0 3M122.4 10.5q0 -3 1.3 -3q1.3 0 1.3 3M135.1 10.5q0 -3 1.4 -3q1.4 0 1.4 3M143.9 10.5q0 -3 1.1 -3q1.1 0 1.1 3M155.1 10.5q0 -3 1.3 -3q1.3 0 1.3 3M167.6 10.5q0 -3 1.1 -3q1.1 0 1.1 3M179.4 10.5q0 -3 1.3 -3q1.3 0 1.3 3M188.8 10.5q0 -3 1.5 -3q1.5 0 1.5 3M203.5 10.5q0 -3 1.3 -3q1.3 0 1.3 3M212.8 10.5q0 -3 1.6 -3q1.6 0 1.6 3M221.9 10.5q0 -3 1.0 -3q1.0 0 1.0 3M230.7 10.5q0 -3 1.4 -3q1.4 0 1.4 3M239.5 10.5q0 -3 1.1 -3q1.1 0 1.1 3M247.7 10.5q0 -3 1.4 -3q1.4 0 1.4 3M257.7 10.5q0 -3 1.5 -3q1.5 0 1.5 3M266.5 10.5q0 -3 1.0 -3q1.0 0 1.0 3M282.2 10.5q0 -3 1.4 -3q1.4 0 1.4 3M290.3 10.5q0 -3 1.2 -3q1.2 0 1.2 3M304.4 10.5q0 -3 1.6 -3q1.6 0 1.6 3M317.6 10.5q0 -3 1.3 -3q1.3 0 1.3 3M334.6 10.5q0 -3 1.3 -3q1.3 0 1.3 3M345.8 10.5q0 -3 1.5 -3q1.5 0 1.5 3M360.2 10.5q0 -3 1.4 -3q1.4 0 1.4 3M369.5 10.5q0 -3 1.0 -3q1.0 0 1.0 3M379.4 10.5q0 -3 1.2 -3q1.2 0 1.2 3" stroke="#fff" stroke-width="0.85" fill="none"/><path d="M2.4 10.2q1.8 3.8 3.5 0M36.0 10.2q2.1 3.8 4.3 0M67.5 10.2q1.8 3.8 3.6 0M91.4 10.2q2.3 3.8 4.5 0M113.2 10.2q2.5 3.8 4.9 0M145.0 10.2q2.9 3.8 5.7 0M168.8 10.2q1.8 3.8 3.7 0M190.2 10.2q2.3 3.8 4.7 0M222.8 10.2q2.3 3.8 4.6 0M245.8 10.2q2.2 3.8 4.3 0M262.8 10.2q1.9 3.8 3.7 0M284.5 10.2q1.8 3.8 3.6 0M304.3 10.2q2.2 3.8 4.4 0M336.5 10.2q2.9 3.8 5.9 0M354.0 10.2q3.0 3.8 5.9 0M387.3 10.2q2.5 3.8 5.0 0" stroke="#fff" stroke-width="0.85" fill="none"/><path d="M4.0 10.2q0.3 3 -3.2 2.6M21.4 10.2q0.3 3 -3.2 2.6M43.2 10.2q0.3 3 -3.2 2.6M66.0 10.2q0.3 3 -3.2 2.6M79.0 10.2q0.3 3 -3.2 2.6M100.4 10.2q0.3 3 -3.2 2.6M118.3 10.2q0.3 3 -3.2 2.6M133.5 10.2q0.3 3 -3.2 2.6M155.7 10.2q0.3 3 -3.2 2.6M178.4 10.2q0.3 3 -3.2 2.6M201.6 10.2q0.3 3 -3.2 2.6M220.6 10.2q0.3 3 -3.2 2.6M239.1 10.2q0.3 3 -3.2 2.6M251.1 10.2q0.3 3 -3.2 2.6M276.0 10.2q0.3 3 -3.2 2.6M290.8 10.2q0.3 3 -3.2 2.6M306.0 10.2q0.3 3 -3.2 2.6M331.7 10.2q0.3 3 -3.2 2.6M348.1 10.2q0.3 3 -3.2 2.6M361.4 10.2q0.3 3 -3.2 2.6M378.0 10.2q0.3 3 -3.2 2.6" stroke="#fff" stroke-width="0.85" fill="none"/><path d="M2.5 12.8h1.2v1.1h-1.2zM11.1 12.8h1.2v1.1h-1.2zM17.8 5.5h1.2v1.1h-1.2zM25.4 12.6h1.2v1.1h-1.2zM31.9 12.6h1.2v1.1h-1.2zM37.3 12.8h1.2v1.1h-1.2zM45.3 5.5h1.2v1.1h-1.2zM53.3 6.0h1.2v1.1h-1.2zM59.4 6.0h1.2v1.1h-1.2zM65.4 12.8h1.2v1.1h-1.2zM75.7 6.0h1.2v1.1h-1.2zM81.6 5.5h1.2v1.1h-1.2zM89.3 12.8h1.2v1.1h-1.2zM98.0 5.5h1.2v1.1h-1.2zM103.3 5.5h1.2v1.1h-1.2zM112.5 12.6h1.2v1.1h-1.2zM121.7 6.0h1.2v1.1h-1.2zM129.5 12.6h1.2v1.1h-1.2zM133.7 5.5h1.2v1.1h-1.2zM141.5 6.0h1.2v1.1h-1.2zM148.6 12.6h1.2v1.1h-1.2zM154.1 5.5h1.2v1.1h-1.2zM164.4 5.5h1.2v1.1h-1.2zM172.0 12.8h1.2v1.1h-1.2zM176.1 6.0h1.2v1.1h-1.2zM186.7 12.6h1.2v1.1h-1.2zM194.1 6.0h1.2v1.1h-1.2zM200.7 12.8h1.2v1.1h-1.2zM211.0 12.8h1.2v1.1h-1.2zM219.4 5.5h1.2v1.1h-1.2zM227.3 5.5h1.2v1.1h-1.2zM238.0 6.0h1.2v1.1h-1.2zM248.3 12.6h1.2v1.1h-1.2zM258.5 12.8h1.2v1.1h-1.2zM269.3 5.5h1.2v1.1h-1.2zM278.6 6.0h1.2v1.1h-1.2zM289.1 12.6h1.2v1.1h-1.2zM297.8 5.5h1.2v1.1h-1.2zM302.0 5.5h1.2v1.1h-1.2zM310.6 12.6h1.2v1.1h-1.2zM316.6 5.5h1.2v1.1h-1.2zM322.9 12.8h1.2v1.1h-1.2zM327.2 12.8h1.2v1.1h-1.2zM336.9 5.5h1.2v1.1h-1.2zM344.1 6.0h1.2v1.1h-1.2zM350.3 5.5h1.2v1.1h-1.2zM360.5 5.5h1.2v1.1h-1.2zM368.9 12.8h1.2v1.1h-1.2zM378.8 5.5h1.2v1.1h-1.2zM388.7 6.0h1.2v1.1h-1.2z" fill="#fff"/></pattern></defs>
<rect x="145.5" y="210.5" width="372" height="540" fill="none" stroke="#000" stroke-width="1.3"/>
<rect x="558.5" y="210.5" width="372" height="540" fill="none" stroke="#000" stroke-width="1.3"/>
<rect x="971.5" y="210.5" width="372" height="540" fill="none" stroke="#000" stroke-width="1.3"/>
<rect x="1384.5" y="210.5" width="372" height="540" fill="none" stroke="#000" stroke-width="1.3"/>
<rect x="145.5" y="789.5" width="372" height="540" fill="none" stroke="#000" stroke-width="1.3"/>
<rect x="558.5" y="789.5" width="372" height="540" fill="none" stroke="#000" stroke-width="1.3"/>
<rect x="971.5" y="789.5" width="372" height="540" fill="none" stroke="#000" stroke-width="1.3"/>
<rect x="1384.5" y="789.5" width="372" height="540" fill="none" stroke="#000" stroke-width="1.3"/>
<g transform="translate(78.9,267.8)" fill="url(#tp)"><rect x="1192.6" y="1" width="26.5" height="14"/><rect x="1181.3" y="1" width="6.8" height="14"/><rect x="1162.0" y="1" width="14.8" height="14"/><rect x="1144.4" y="1" width="13.1" height="14"/><rect x="1110.3" y="1" width="29.6" height="14"/><rect x="1078.1" y="1" width="27.7" height="14"/><rect x="1039.1" y="1" width="34.5" height="14"/><rect x="1025.8" y="1" width="8.8" height="14"/><rect x="1001.8" y="1" width="19.5" height="14"/><rect x="990.3" y="1" width="7.0" height="14"/><rect x="972.9" y="1" width="13.0" height="14"/><rect x="946.2" y="1" width="22.2" height="14"/><rect x="937.1" y="1" width="4.6" height="14"/></g>
<g transform="translate(133.6,293.3)" fill="url(#tp)"><rect x="1137.6" y="1" width="26.8" height="14"/><rect x="1109.6" y="1" width="23.4" height="14"/><rect x="1092.1" y="1" width="13.1" height="14"/><rect x="1062.7" y="1" width="24.9" height="14"/><rect x="1026.3" y="1" width="31.9" height="14"/><rect x="1015.6" y="1" width="6.2" height="14"/><rect x="979.3" y="1" width="31.8" height="14"/><rect x="946.5" y="1" width="28.3" height="14"/><rect x="925.1" y="1" width="16.9" height="14"/><rect x="909.6" y="1" width="11.0" height="14"/><rect x="882.4" y="1" width="22.8" height="14"/></g>
<g transform="translate(329.3,318.7)" fill="url(#tp)"><rect x="959.8" y="1" width="9.0" height="14"/><rect x="946.2" y="1" width="9.1" height="14"/><rect x="908.5" y="1" width="33.1" height="14"/><rect x="878.7" y="1" width="25.3" height="14"/><rect x="842.4" y="1" width="31.8" height="14"/><rect x="808.5" y="1" width="29.4" height="14"/><rect x="780.9" y="1" width="23.2" height="14"/><rect x="739.2" y="1" width="37.1" height="14"/><rect x="716.6" y="1" width="18.1" height="14"/><rect x="688.5" y="1" width="23.7" height="14"/></g>
<g transform="translate(279.7,344.7)" fill="url(#tp)"><rect x="992.5" y="1" width="25.8" height="14"/><rect x="954.4" y="1" width="33.6" height="14"/><rect x="930.3" y="1" width="19.6" height="14"/></g>
<g transform="translate(241.8,455.5)" fill="url(#tp)"><rect x="1048.7" y="1" width="7.5" height="14"/><rect x="1030.9" y="1" width="13.3" height="14"/><rect x="1011.2" y="1" width="15.3" height="14"/><rect x="998.1" y="1" width="8.6" height="14"/><rect x="980.2" y="1" width="13.4" height="14"/><rect x="966.4" y="1" width="9.2" height="14"/><rect x="947.0" y="1" width="14.9" height="14"/><rect x="916.2" y="1" width="26.3" height="14"/><rect x="894.0" y="1" width="17.7" height="14"/><rect x="871.7" y="1" width="17.8" height="14"/><rect x="854.5" y="1" width="12.7" height="14"/><rect x="835.4" y="1" width="14.5" height="14"/><rect x="794.9" y="1" width="36.0" height="14"/><rect x="774.2" y="1" width="16.3" height="14"/></g>
<g transform="translate(90.9,480.8)" fill="url(#tp)"><rect x="1195.6" y="1" width="11.5" height="14"/><rect x="1161.8" y="1" width="29.3" height="14"/><rect x="1146.0" y="1" width="11.2" height="14"/><rect x="1123.4" y="1" width="18.1" height="14"/><rect x="1081.2" y="1" width="37.7" height="14"/><rect x="1050.2" y="1" width="26.5" height="14"/><rect x="1021.9" y="1" width="23.8" height="14"/><rect x="989.5" y="1" width="27.9" height="14"/><rect x="952.0" y="1" width="33.0" height="14"/><rect x="925.1" y="1" width="22.5" height="14"/></g>
<g transform="translate(105.2,506.0)" fill="url(#tp)"><rect x="1185.8" y="1" width="7.0" height="14"/><rect x="1165.2" y="1" width="16.1" height="14"/><rect x="1146.2" y="1" width="14.6" height="14"/><rect x="1128.9" y="1" width="12.8" height="14"/><rect x="1088.2" y="1" width="36.2" height="14"/><rect x="1049.7" y="1" width="34.0" height="14"/><rect x="1029.1" y="1" width="16.1" height="14"/><rect x="997.6" y="1" width="27.0" height="14"/><rect x="974.5" y="1" width="18.7" height="14"/><rect x="934.7" y="1" width="35.3" height="14"/><rect x="910.8" y="1" width="19.4" height="14"/></g>
<g transform="translate(249.1,531.2)" fill="url(#tp)"><rect x="1035.0" y="1" width="13.9" height="14"/><rect x="1006.5" y="1" width="24.0" height="14"/><rect x="987.6" y="1" width="14.4" height="14"/><rect x="958.4" y="1" width="24.7" height="14"/><rect x="919.2" y="1" width="34.7" height="14"/><rect x="895.9" y="1" width="18.8" height="14"/><rect x="878.4" y="1" width="13.0" height="14"/><rect x="836.0" y="1" width="37.9" height="14"/><rect x="809.2" y="1" width="22.3" height="14"/><rect x="795.8" y="1" width="8.9" height="14"/><rect x="783.8" y="1" width="7.5" height="14"/><rect x="769.8" y="1" width="9.5" height="14"/></g>
<g transform="translate(270.6,556.5)" fill="url(#tp)"><rect x="996.0" y="1" width="31.3" height="14"/><rect x="972.0" y="1" width="19.5" height="14"/><rect x="959.5" y="1" width="8.0" height="14"/><rect x="936.8" y="1" width="18.2" height="14"/><rect x="894.4" y="1" width="37.9" height="14"/><rect x="867.0" y="1" width="22.9" height="14"/><rect x="825.4" y="1" width="37.1" height="14"/><rect x="787.3" y="1" width="33.5" height="14"/><rect x="776.5" y="1" width="6.4" height="14"/><rect x="745.4" y="1" width="26.6" height="14"/></g>
<g transform="translate(362.3,581.8)" fill="url(#tp)"><rect x="912.5" y="1" width="23.2" height="14"/><rect x="893.5" y="1" width="14.5" height="14"/><rect x="862.5" y="1" width="26.5" height="14"/><rect x="848.4" y="1" width="9.6" height="14"/><rect x="824.0" y="1" width="19.9" height="14"/><rect x="799.0" y="1" width="20.5" height="14"/><rect x="757.9" y="1" width="36.5" height="14"/><rect x="719.4" y="1" width="34.0" height="14"/><rect x="700.5" y="1" width="14.4" height="14"/><rect x="674.0" y="1" width="22.0" height="14"/><rect x="657.7" y="1" width="11.7" height="14"/></g>
<g transform="translate(7.7,607.0)" fill="url(#tp)"><rect x="1256.4" y="1" width="33.9" height="14"/><rect x="1236.4" y="1" width="15.6" height="14"/><rect x="1205.4" y="1" width="26.4" height="14"/><rect x="1175.4" y="1" width="25.5" height="14"/><rect x="1160.0" y="1" width="10.9" height="14"/><rect x="1125.1" y="1" width="30.4" height="14"/><rect x="1097.4" y="1" width="23.3" height="14"/><rect x="1062.0" y="1" width="30.9" height="14"/><rect x="1034.5" y="1" width="23.0" height="14"/><rect x="1024.0" y="1" width="6.0" height="14"/><rect x="1008.3" y="1" width="11.2" height="14"/></g>
<g transform="translate(304.0,632.2)" fill="url(#tp)"><rect x="958.2" y="1" width="35.7" height="14"/><rect x="919.6" y="1" width="34.1" height="14"/><rect x="882.5" y="1" width="32.6" height="14"/><rect x="862.2" y="1" width="15.8" height="14"/><rect x="849.8" y="1" width="7.9" height="14"/><rect x="811.2" y="1" width="34.1" height="14"/><rect x="770.4" y="1" width="36.3" height="14"/><rect x="757.2" y="1" width="8.7" height="14"/><rect x="731.1" y="1" width="21.6" height="14"/><rect x="712.0" y="1" width="14.7" height="14"/></g>
<g transform="translate(258.0,657.5)" fill="url(#tp)"><rect x="1029.9" y="1" width="10.1" height="14"/><rect x="1004.2" y="1" width="21.2" height="14"/><rect x="976.1" y="1" width="23.6" height="14"/><rect x="957.1" y="1" width="14.5" height="14"/><rect x="918.7" y="1" width="33.9" height="14"/><rect x="894.6" y="1" width="19.5" height="14"/><rect x="877.4" y="1" width="12.8" height="14"/><rect x="849.6" y="1" width="23.3" height="14"/><rect x="815.8" y="1" width="29.4" height="14"/><rect x="798.8" y="1" width="12.4" height="14"/><rect x="778.3" y="1" width="16.0" height="14"/><rect x="758.0" y="1" width="15.8" height="14"/></g>
<g transform="translate(28.1,682.8)" fill="url(#tp)"><rect x="1249.9" y="1" width="20.0" height="14"/><rect x="1222.8" y="1" width="22.6" height="14"/><rect x="1208.4" y="1" width="9.9" height="14"/><rect x="1190.7" y="1" width="13.2" height="14"/><rect x="1169.4" y="1" width="16.8" height="14"/><rect x="1140.1" y="1" width="24.8" height="14"/><rect x="1122.2" y="1" width="13.4" height="14"/><rect x="1104.7" y="1" width="13.0" height="14"/><rect x="1091.9" y="1" width="8.3" height="14"/><rect x="1061.2" y="1" width="26.2" height="14"/><rect x="1043.4" y="1" width="13.3" height="14"/><rect x="1003.9" y="1" width="35.0" height="14"/><rect x="987.9" y="1" width="11.5" height="14"/></g>
<g transform="translate(85.1,242.2)" fill="url(#tpb)"><rect x="1172.9" y="1" width="22.0" height="14"/></g>
<g transform="translate(289.4,242.8)" fill="url(#tp)"><rect x="1411.3" y="1" width="10.2" height="14"/><rect x="1370.9" y="1" width="35.9" height="14"/><rect x="1342.1" y="1" width="24.3" height="14"/><rect x="1316.5" y="1" width="21.1" height="14"/><rect x="1280.9" y="1" width="31.1" height="14"/><rect x="1244.5" y="1" width="31.8" height="14"/><rect x="1227.9" y="1" width="12.1" height="14"/><rect x="1214.3" y="1" width="9.1" height="14"/><rect x="1190.1" y="1" width="19.8" height="14"/><rect x="1166.0" y="1" width="19.6" height="14"/><rect x="1140.6" y="1" width="20.9" height="14"/></g>
<g transform="translate(366.5,268.7)" fill="url(#tp)"><rect x="1316.9" y="1" width="27.5" height="14"/><rect x="1274.9" y="1" width="37.5" height="14"/><rect x="1261.3" y="1" width="9.1" height="14"/><rect x="1237.9" y="1" width="18.9" height="14"/><rect x="1216.5" y="1" width="16.9" height="14"/><rect x="1178.5" y="1" width="33.6" height="14"/><rect x="1160.0" y="1" width="14.0" height="14"/><rect x="1143.4" y="1" width="12.1" height="14"/><rect x="1118.6" y="1" width="20.4" height="14"/><rect x="1094.6" y="1" width="19.5" height="14"/><rect x="1075.1" y="1" width="14.9" height="14"/><rect x="1062.0" y="1" width="8.7" height="14"/></g>
<g transform="translate(66.0,293.9)" fill="url(#tp)"><rect x="1624.8" y="1" width="20.2" height="14"/><rect x="1586.7" y="1" width="33.6" height="14"/><rect x="1558.6" y="1" width="23.6" height="14"/><rect x="1546.5" y="1" width="7.6" height="14"/><rect x="1504.0" y="1" width="38.0" height="14"/><rect x="1466.8" y="1" width="32.8" height="14"/><rect x="1425.3" y="1" width="37.0" height="14"/><rect x="1385.1" y="1" width="35.6" height="14"/><rect x="1366.0" y="1" width="14.6" height="14"/></g>
<g transform="translate(395.2,416.0)" fill="url(#tp)"><rect x="1294.3" y="1" width="21.5" height="14"/><rect x="1276.9" y="1" width="12.8" height="14"/><rect x="1253.6" y="1" width="18.8" height="14"/><rect x="1241.2" y="1" width="7.9" height="14"/><rect x="1218.6" y="1" width="18.1" height="14"/><rect x="1176.6" y="1" width="37.5" height="14"/><rect x="1157.6" y="1" width="14.5" height="14"/><rect x="1122.0" y="1" width="31.1" height="14"/><rect x="1096.9" y="1" width="20.6" height="14"/><rect x="1072.9" y="1" width="19.5" height="14"/><rect x="1033.3" y="1" width="35.1" height="14"/></g>
<g transform="translate(338.5,441.5)" fill="url(#tp)"><rect x="1348.7" y="1" width="23.8" height="14"/><rect x="1315.2" y="1" width="29.0" height="14"/><rect x="1299.7" y="1" width="11.0" height="14"/><rect x="1279.7" y="1" width="15.5" height="14"/><rect x="1238.2" y="1" width="37.0" height="14"/><rect x="1209.2" y="1" width="24.5" height="14"/><rect x="1181.4" y="1" width="23.4" height="14"/><rect x="1146.9" y="1" width="29.9" height="14"/><rect x="1134.6" y="1" width="7.8" height="14"/><rect x="1105.4" y="1" width="24.7" height="14"/><rect x="1090.0" y="1" width="10.9" height="14"/></g>
<g transform="translate(166.4,466.8)" fill="url(#tp)"><rect x="1533.5" y="1" width="11.0" height="14"/><rect x="1492.3" y="1" width="36.7" height="14"/><rect x="1479.2" y="1" width="8.6" height="14"/><rect x="1462.8" y="1" width="11.9" height="14"/><rect x="1433.2" y="1" width="25.0" height="14"/><rect x="1401.1" y="1" width="27.6" height="14"/><rect x="1383.1" y="1" width="13.5" height="14"/><rect x="1368.8" y="1" width="9.8" height="14"/><rect x="1329.8" y="1" width="34.5" height="14"/><rect x="1311.4" y="1" width="13.9" height="14"/><rect x="1281.9" y="1" width="25.0" height="14"/><rect x="1262.1" y="1" width="15.3" height="14"/></g>
<g transform="translate(28.8,492.5)" fill="url(#tp)"><rect x="1657.5" y="1" width="24.7" height="14"/><rect x="1630.3" y="1" width="22.7" height="14"/><rect x="1589.9" y="1" width="35.9" height="14"/><rect x="1572.8" y="1" width="12.5" height="14"/><rect x="1539.4" y="1" width="28.9" height="14"/><rect x="1521.3" y="1" width="13.6" height="14"/><rect x="1498.1" y="1" width="18.7" height="14"/><rect x="1466.1" y="1" width="27.5" height="14"/><rect x="1446.0" y="1" width="15.6" height="14"/><rect x="1425.4" y="1" width="16.1" height="14"/><rect x="1399.7" y="1" width="21.2" height="14"/></g>
<g transform="translate(62.6,518.0)" fill="url(#tp)"><rect x="1627.7" y="1" width="20.7" height="14"/><rect x="1585.3" y="1" width="38.0" height="14"/><rect x="1542.9" y="1" width="37.9" height="14"/><rect x="1530.0" y="1" width="8.3" height="14"/><rect x="1512.7" y="1" width="12.8" height="14"/><rect x="1493.7" y="1" width="14.5" height="14"/><rect x="1453.4" y="1" width="35.9" height="14"/><rect x="1414.7" y="1" width="34.2" height="14"/><rect x="1376.0" y="1" width="34.1" height="14"/><rect x="1365.9" y="1" width="5.7" height="14"/></g>
<g transform="translate(53.3,543.0)" fill="url(#tp)"><rect x="1625.0" y="1" width="32.7" height="14"/><rect x="1592.0" y="1" width="28.5" height="14"/><rect x="1561.9" y="1" width="25.6" height="14"/><rect x="1519.8" y="1" width="37.6" height="14"/><rect x="1488.4" y="1" width="26.9" height="14"/><rect x="1477.7" y="1" width="6.3" height="14"/><rect x="1441.0" y="1" width="32.1" height="14"/><rect x="1420.9" y="1" width="15.6" height="14"/><rect x="1389.2" y="1" width="27.2" height="14"/><rect x="1375.2" y="1" width="9.5" height="14"/></g>
<g transform="translate(36.6,568.4)" fill="url(#tp)"><rect x="1664.7" y="1" width="9.7" height="14"/><rect x="1650.7" y="1" width="9.4" height="14"/><rect x="1622.5" y="1" width="23.7" height="14"/><rect x="1603.3" y="1" width="14.7" height="14"/><rect x="1573.5" y="1" width="25.4" height="14"/><rect x="1540.0" y="1" width="29.0" height="14"/><rect x="1523.0" y="1" width="12.5" height="14"/><rect x="1492.2" y="1" width="26.3" height="14"/><rect x="1473.2" y="1" width="14.4" height="14"/><rect x="1447.1" y="1" width="21.6" height="14"/><rect x="1407.6" y="1" width="35.0" height="14"/><rect x="1391.9" y="1" width="11.3" height="14"/></g>
<g transform="translate(358.9,593.6)" fill="url(#tp)"><rect x="1332.6" y="1" width="19.6" height="14"/><rect x="1313.2" y="1" width="14.9" height="14"/><rect x="1302.6" y="1" width="6.1" height="14"/><rect x="1267.4" y="1" width="30.7" height="14"/><rect x="1236.6" y="1" width="26.4" height="14"/><rect x="1217.7" y="1" width="14.4" height="14"/><rect x="1183.5" y="1" width="29.7" height="14"/><rect x="1155.3" y="1" width="23.7" height="14"/><rect x="1131.1" y="1" width="19.7" height="14"/><rect x="1120.3" y="1" width="6.3" height="14"/><rect x="1107.4" y="1" width="8.4" height="14"/><rect x="1069.6" y="1" width="33.3" height="14"/></g>
<g transform="translate(83.4,619.0)" fill="url(#tp)"><rect x="1604.1" y="1" width="23.5" height="14"/><rect x="1566.9" y="1" width="32.7" height="14"/><rect x="1537.8" y="1" width="24.6" height="14"/><rect x="1522.6" y="1" width="10.7" height="14"/><rect x="1508.0" y="1" width="10.1" height="14"/><rect x="1487.6" y="1" width="15.9" height="14"/><rect x="1448.3" y="1" width="34.8" height="14"/><rect x="1412.4" y="1" width="31.5" height="14"/><rect x="1374.3" y="1" width="33.5" height="14"/><rect x="1345.1" y="1" width="24.7" height="14"/></g>
<g transform="translate(61.4,644.9)" fill="url(#tp)"><rect x="1635.7" y="1" width="14.0" height="14"/><rect x="1621.9" y="1" width="9.3" height="14"/><rect x="1586.4" y="1" width="31.0" height="14"/><rect x="1547.6" y="1" width="34.3" height="14"/><rect x="1524.1" y="1" width="19.0" height="14"/><rect x="1494.6" y="1" width="25.0" height="14"/></g>
<g transform="translate(318.5,922.0)" fill="url(#tp)"><rect x="116.8" y="1" width="35.8" height="14"/><rect x="78.6" y="1" width="33.7" height="14"/><rect x="36.9" y="1" width="37.2" height="14"/><rect x="0.4" y="1" width="31.9" height="14"/><rect x="-38.3" y="1" width="34.2" height="14"/><rect x="-49.6" y="1" width="6.8" height="14"/><rect x="-83.7" y="1" width="29.6" height="14"/><rect x="-104.8" y="1" width="16.6" height="14"/><rect x="-129.5" y="1" width="20.2" height="14"/></g>
<g transform="translate(121.2,947.3)" fill="url(#tp)"><rect x="316.2" y="1" width="33.7" height="14"/><rect x="279.7" y="1" width="31.9" height="14"/><rect x="260.7" y="1" width="14.5" height="14"/><rect x="225.0" y="1" width="31.2" height="14"/><rect x="211.1" y="1" width="9.5" height="14"/><rect x="172.6" y="1" width="33.9" height="14"/><rect x="134.7" y="1" width="33.5" height="14"/><rect x="117.1" y="1" width="13.1" height="14"/><rect x="80.4" y="1" width="32.1" height="14"/><rect x="67.8" y="1" width="8.1" height="14"/></g>
<g transform="translate(212.9,972.6)" fill="url(#tp)"><rect x="226.7" y="1" width="31.5" height="14"/><rect x="208.9" y="1" width="13.3" height="14"/><rect x="197.6" y="1" width="6.8" height="14"/><rect x="181.0" y="1" width="12.2" height="14"/><rect x="159.9" y="1" width="16.5" height="14"/><rect x="121.8" y="1" width="33.7" height="14"/><rect x="80.3" y="1" width="36.9" height="14"/><rect x="60.9" y="1" width="14.9" height="14"/><rect x="29.9" y="1" width="26.5" height="14"/><rect x="6.6" y="1" width="18.8" height="14"/><rect x="-23.9" y="1" width="26.0" height="14"/></g>
<g transform="translate(203.0,997.9)" fill="url(#tp)"><rect x="231.9" y="1" width="36.1" height="14"/><rect x="217.7" y="1" width="9.7" height="14"/><rect x="176.2" y="1" width="37.1" height="14"/><rect x="160.0" y="1" width="11.7" height="14"/><rect x="118.7" y="1" width="36.8" height="14"/><rect x="99.7" y="1" width="14.5" height="14"/><rect x="85.7" y="1" width="9.5" height="14"/><rect x="61.3" y="1" width="19.9" height="14"/><rect x="27.5" y="1" width="29.3" height="14"/><rect x="6.9" y="1" width="16.0" height="14"/><rect x="-14.0" y="1" width="16.5" height="14"/></g>
<g transform="translate(27.8,1023.2)" fill="url(#tp)"><rect x="424.9" y="1" width="18.3" height="14"/><rect x="395.9" y="1" width="24.5" height="14"/><rect x="377.3" y="1" width="14.2" height="14"/><rect x="344.1" y="1" width="28.7" height="14"/><rect x="333.6" y="1" width="6.1" height="14"/><rect x="293.4" y="1" width="35.6" height="14"/><rect x="265.7" y="1" width="23.2" height="14"/><rect x="232.2" y="1" width="29.0" height="14"/><rect x="197.9" y="1" width="29.7" height="14"/><rect x="161.2" y="1" width="32.2" height="14"/></g>
<g transform="translate(373.3,1048.5)" fill="url(#tp)"><rect x="70.4" y="1" width="27.3" height="14"/><rect x="49.4" y="1" width="16.6" height="14"/><rect x="28.8" y="1" width="16.0" height="14"/><rect x="-8.8" y="1" width="33.1" height="14"/><rect x="-42.4" y="1" width="29.0" height="14"/><rect x="-62.5" y="1" width="15.6" height="14"/><rect x="-82.9" y="1" width="15.9" height="14"/><rect x="-106.4" y="1" width="19.1" height="14"/><rect x="-129.8" y="1" width="18.9" height="14"/><rect x="-149.8" y="1" width="15.5" height="14"/><rect x="-164.3" y="1" width="10.1" height="14"/><rect x="-184.3" y="1" width="15.5" height="14"/></g>
<g transform="translate(175.5,1073.8)" fill="url(#tp)"><rect x="267.8" y="1" width="27.7" height="14"/><rect x="228.4" y="1" width="34.9" height="14"/><rect x="198.2" y="1" width="25.7" height="14"/><rect x="178.1" y="1" width="15.6" height="14"/><rect x="150.0" y="1" width="23.5" height="14"/><rect x="139.5" y="1" width="6.0" height="14"/><rect x="119.8" y="1" width="15.2" height="14"/><rect x="95.6" y="1" width="19.8" height="14"/><rect x="66.5" y="1" width="24.6" height="14"/><rect x="35.1" y="1" width="27.0" height="14"/><rect x="13.5" y="1" width="17.1" height="14"/></g>
<g transform="translate(267.1,1099.1)" fill="url(#tp)"><rect x="191.1" y="1" width="12.8" height="14"/><rect x="165.4" y="1" width="21.1" height="14"/><rect x="126.1" y="1" width="34.8" height="14"/><rect x="90.1" y="1" width="31.5" height="14"/><rect x="74.2" y="1" width="11.4" height="14"/><rect x="61.0" y="1" width="8.7" height="14"/><rect x="34.0" y="1" width="22.5" height="14"/><rect x="3.2" y="1" width="26.3" height="14"/><rect x="-18.0" y="1" width="16.7" height="14"/><rect x="-54.7" y="1" width="32.2" height="14"/><rect x="-78.1" y="1" width="18.9" height="14"/></g>
<g transform="translate(260.5,1124.4)" fill="url(#tp)"><rect x="197.4" y="1" width="13.2" height="14"/><rect x="180.5" y="1" width="12.4" height="14"/><rect x="169.2" y="1" width="6.8" height="14"/><rect x="150.9" y="1" width="13.8" height="14"/><rect x="125.2" y="1" width="21.2" height="14"/><rect x="87.5" y="1" width="33.2" height="14"/><rect x="74.6" y="1" width="8.3" height="14"/><rect x="50.9" y="1" width="19.3" height="14"/><rect x="20.2" y="1" width="26.2" height="14"/><rect x="3.5" y="1" width="12.2" height="14"/><rect x="-29.3" y="1" width="28.3" height="14"/><rect x="-55.6" y="1" width="21.8" height="14"/><rect x="-71.5" y="1" width="11.4" height="14"/></g>
<g transform="translate(318.2,928.5)" fill="url(#tp)"><rect x="560.7" y="1" width="6.2" height="14"/><rect x="526.1" y="1" width="30.0" height="14"/><rect x="491.0" y="1" width="30.6" height="14"/><rect x="477.1" y="1" width="9.4" height="14"/><rect x="453.0" y="1" width="19.6" height="14"/><rect x="436.8" y="1" width="11.6" height="14"/><rect x="395.7" y="1" width="36.7" height="14"/><rect x="368.6" y="1" width="22.6" height="14"/><rect x="356.5" y="1" width="7.6" height="14"/><rect x="338.0" y="1" width="14.0" height="14"/><rect x="300.4" y="1" width="33.1" height="14"/><rect x="284.8" y="1" width="11.0" height="14"/></g>
<g transform="translate(217.5,953.8)" fill="url(#tp)"><rect x="640.1" y="1" width="27.4" height="14"/><rect x="598.0" y="1" width="37.6" height="14"/><rect x="568.5" y="1" width="25.1" height="14"/><rect x="527.6" y="1" width="36.4" height="14"/><rect x="488.5" y="1" width="34.5" height="14"/><rect x="458.4" y="1" width="25.6" height="14"/><rect x="424.9" y="1" width="29.0" height="14"/><rect x="398.3" y="1" width="22.2" height="14"/><rect x="385.5" y="1" width="8.3" height="14"/></g>
<g transform="translate(113.4,979.1)" fill="url(#tp)"><rect x="736.9" y="1" width="34.7" height="14"/><rect x="702.6" y="1" width="29.8" height="14"/><rect x="676.9" y="1" width="21.2" height="14"/><rect x="658.1" y="1" width="14.3" height="14"/><rect x="639.7" y="1" width="13.9" height="14"/><rect x="608.8" y="1" width="26.4" height="14"/><rect x="573.8" y="1" width="30.5" height="14"/><rect x="546.6" y="1" width="22.7" height="14"/><rect x="516.0" y="1" width="26.1" height="14"/><rect x="489.6" y="1" width="21.9" height="14"/></g>
<g transform="translate(359.2,1004.4)" fill="url(#tp)"><rect x="511.1" y="1" width="14.7" height="14"/><rect x="490.4" y="1" width="16.2" height="14"/><rect x="462.6" y="1" width="23.3" height="14"/><rect x="447.6" y="1" width="10.4" height="14"/><rect x="429.7" y="1" width="13.4" height="14"/><rect x="397.0" y="1" width="28.2" height="14"/><rect x="363.9" y="1" width="28.6" height="14"/><rect x="351.4" y="1" width="8.1" height="14"/><rect x="327.8" y="1" width="19.0" height="14"/><rect x="300.0" y="1" width="23.4" height="14"/><rect x="276.2" y="1" width="19.3" height="14"/><rect x="259.0" y="1" width="12.6" height="14"/><rect x="243.8" y="1" width="10.8" height="14"/></g>
<g transform="translate(166.4,1029.7)" fill="url(#tp)"><rect x="694.0" y="1" width="24.7" height="14"/><rect x="661.2" y="1" width="28.3" height="14"/><rect x="623.3" y="1" width="33.4" height="14"/><rect x="588.3" y="1" width="30.5" height="14"/><rect x="565.6" y="1" width="18.2" height="14"/><rect x="554.9" y="1" width="6.2" height="14"/><rect x="533.2" y="1" width="17.3" height="14"/><rect x="498.6" y="1" width="30.1" height="14"/><rect x="460.7" y="1" width="33.3" height="14"/><rect x="436.6" y="1" width="19.6" height="14"/></g>
<g transform="translate(247.0,1055.0)" fill="url(#tp)"><rect x="608.0" y="1" width="29.9" height="14"/><rect x="580.1" y="1" width="23.5" height="14"/><rect x="550.3" y="1" width="25.3" height="14"/><rect x="532.7" y="1" width="13.1" height="14"/><rect x="515.2" y="1" width="13.0" height="14"/><rect x="490.7" y="1" width="19.9" height="14"/><rect x="479.3" y="1" width="6.9" height="14"/><rect x="458.1" y="1" width="16.8" height="14"/><rect x="425.8" y="1" width="27.7" height="14"/><rect x="402.4" y="1" width="18.9" height="14"/><rect x="386.6" y="1" width="11.3" height="14"/><rect x="356.0" y="1" width="26.1" height="14"/></g>
<g transform="translate(330.3,1080.3)" fill="url(#tp)"><rect x="547.9" y="1" width="6.9" height="14"/><rect x="524.8" y="1" width="18.6" height="14"/><rect x="496.2" y="1" width="24.1" height="14"/><rect x="484.8" y="1" width="6.9" height="14"/><rect x="453.8" y="1" width="26.6" height="14"/><rect x="438.9" y="1" width="10.3" height="14"/><rect x="413.6" y="1" width="20.8" height="14"/><rect x="401.5" y="1" width="7.6" height="14"/><rect x="378.9" y="1" width="18.1" height="14"/><rect x="361.6" y="1" width="12.8" height="14"/><rect x="340.7" y="1" width="16.5" height="14"/><rect x="305.8" y="1" width="30.4" height="14"/><rect x="283.2" y="1" width="18.1" height="14"/><rect x="272.7" y="1" width="6.0" height="14"/></g>
<g transform="translate(79.1,1105.6)" fill="url(#tp)"><rect x="791.8" y="1" width="14.1" height="14"/><rect x="778.7" y="1" width="8.6" height="14"/><rect x="767.5" y="1" width="6.6" height="14"/><rect x="739.8" y="1" width="23.3" height="14"/><rect x="697.3" y="1" width="38.0" height="14"/><rect x="675.6" y="1" width="17.2" height="14"/><rect x="644.3" y="1" width="26.8" height="14"/><rect x="608.8" y="1" width="31.0" height="14"/><rect x="577.4" y="1" width="26.9" height="14"/><rect x="542.8" y="1" width="30.1" height="14"/><rect x="523.9" y="1" width="14.4" height="14"/></g>
<g transform="translate(383.0,1130.9)" fill="url(#tp)"><rect x="495.4" y="1" width="6.7" height="14"/><rect x="480.0" y="1" width="10.9" height="14"/><rect x="465.4" y="1" width="10.0" height="14"/><rect x="433.5" y="1" width="27.4" height="14"/><rect x="405.0" y="1" width="24.0" height="14"/><rect x="387.5" y="1" width="13.0" height="14"/><rect x="354.6" y="1" width="28.4" height="14"/><rect x="319.6" y="1" width="30.5" height="14"/><rect x="303.7" y="1" width="11.4" height="14"/><rect x="273.8" y="1" width="25.4" height="14"/><rect x="239.3" y="1" width="29.9" height="14"/><rect x="220.0" y="1" width="14.8" height="14"/></g>
<g transform="translate(337.6,821.2)" fill="url(#tp)"><rect x="951.0" y="1" width="9.5" height="14"/><rect x="939.7" y="1" width="6.8" height="14"/><rect x="919.2" y="1" width="16.0" height="14"/><rect x="887.0" y="1" width="27.7" height="14"/><rect x="845.8" y="1" width="36.7" height="14"/><rect x="822.6" y="1" width="18.7" height="14"/><rect x="789.3" y="1" width="28.9" height="14"/><rect x="776.3" y="1" width="8.4" height="14"/><rect x="743.7" y="1" width="28.1" height="14"/><rect x="713.2" y="1" width="26.1" height="14"/><rect x="699.4" y="1" width="9.3" height="14"/><rect x="678.4" y="1" width="16.5" height="14"/></g>
<g transform="translate(41.9,847.4)" fill="url(#tp)"><rect x="1230.9" y="1" width="25.2" height="14"/><rect x="1216.5" y="1" width="9.9" height="14"/><rect x="1174.5" y="1" width="37.5" height="14"/><rect x="1139.0" y="1" width="31.0" height="14"/><rect x="1117.4" y="1" width="17.1" height="14"/><rect x="1093.2" y="1" width="19.7" height="14"/><rect x="1070.8" y="1" width="17.9" height="14"/><rect x="1044.1" y="1" width="22.2" height="14"/><rect x="1022.7" y="1" width="16.9" height="14"/><rect x="985.0" y="1" width="33.2" height="14"/><rect x="974.1" y="1" width="6.4" height="14"/></g>
<g transform="translate(213.7,873.0)" fill="url(#tp)"><rect x="1047.6" y="1" width="36.7" height="14"/><rect x="1016.8" y="1" width="26.3" height="14"/><rect x="979.7" y="1" width="32.5" height="14"/><rect x="946.6" y="1" width="28.6" height="14"/><rect x="922.2" y="1" width="19.9" height="14"/><rect x="888.2" y="1" width="29.5" height="14"/><rect x="846.8" y="1" width="36.9" height="14"/><rect x="827.7" y="1" width="14.6" height="14"/><rect x="802.3" y="1" width="20.8" height="14"/></g>
<g transform="translate(150.5,898.6)" fill="url(#tp)"><rect x="1126.1" y="1" width="21.5" height="14"/><rect x="1101.6" y="1" width="19.9" height="14"/><rect x="1067.7" y="1" width="29.4" height="14"/><rect x="1048.6" y="1" width="14.6" height="14"/><rect x="1010.9" y="1" width="33.3" height="14"/><rect x="973.8" y="1" width="32.6" height="14"/><rect x="960.5" y="1" width="8.8" height="14"/><rect x="921.8" y="1" width="34.2" height="14"/><rect x="903.5" y="1" width="13.8" height="14"/><rect x="878.2" y="1" width="20.9" height="14"/><rect x="865.5" y="1" width="8.1" height="14"/></g>
<g transform="translate(34.0,923.8)" fill="url(#tp)"><rect x="1257.1" y="1" width="6.9" height="14"/><rect x="1219.4" y="1" width="33.2" height="14"/><rect x="1203.0" y="1" width="11.8" height="14"/><rect x="1185.8" y="1" width="12.8" height="14"/><rect x="1149.7" y="1" width="31.5" height="14"/><rect x="1128.3" y="1" width="16.9" height="14"/><rect x="1089.7" y="1" width="34.2" height="14"/><rect x="1056.7" y="1" width="28.4" height="14"/><rect x="1037.4" y="1" width="14.8" height="14"/><rect x="1026.6" y="1" width="6.3" height="14"/><rect x="985.7" y="1" width="36.3" height="14"/></g>
<g transform="translate(121.6,949.1)" fill="url(#tp)"><rect x="1147.4" y="1" width="29.0" height="14"/><rect x="1121.3" y="1" width="21.6" height="14"/><rect x="1086.5" y="1" width="30.3" height="14"/><rect x="1053.9" y="1" width="28.1" height="14"/><rect x="1022.7" y="1" width="26.7" height="14"/><rect x="996.5" y="1" width="21.7" height="14"/><rect x="960.6" y="1" width="31.4" height="14"/><rect x="947.2" y="1" width="9.0" height="14"/><rect x="929.6" y="1" width="13.1" height="14"/><rect x="896.9" y="1" width="28.1" height="14"/></g>
<g transform="translate(302.6,974.7)" fill="url(#tp)"><rect x="970.8" y="1" width="24.6" height="14"/><rect x="945.2" y="1" width="21.1" height="14"/><rect x="917.7" y="1" width="23.0" height="14"/><rect x="893.6" y="1" width="19.6" height="14"/><rect x="859.2" y="1" width="29.9" height="14"/><rect x="838.1" y="1" width="16.6" height="14"/><rect x="805.1" y="1" width="28.5" height="14"/><rect x="785.9" y="1" width="14.7" height="14"/><rect x="767.4" y="1" width="14.0" height="14"/><rect x="753.0" y="1" width="9.9" height="14"/><rect x="736.4" y="1" width="12.2" height="14"/><rect x="722.0" y="1" width="9.8" height="14"/><rect x="713.4" y="1" width="4.1" height="14"/></g>
<g transform="translate(192.2,1000.0)" fill="url(#tp)"><rect x="1093.8" y="1" width="11.9" height="14"/><rect x="1076.4" y="1" width="12.9" height="14"/></g>
<g transform="translate(112.4,1050.2)" fill="url(#tp)"><rect x="1125.5" y="1" width="29.2" height="14"/><rect x="1083.7" y="1" width="37.3" height="14"/><rect x="1062.6" y="1" width="16.6" height="14"/></g>
<g transform="translate(71.2,1075.5)" fill="url(#tp)"><rect x="1217.5" y="1" width="9.2" height="14"/><rect x="1200.8" y="1" width="12.2" height="14"/><rect x="1183.1" y="1" width="13.3" height="14"/></g>
<g transform="translate(108.9,1125.7)" fill="url(#tp)"><rect x="1182.6" y="1" width="6.5" height="14"/><rect x="1156.1" y="1" width="22.0" height="14"/></g>
<g transform="translate(276.9,820.6)" fill="url(#tp)"><rect x="1365.9" y="1" width="37.2" height="14"/><rect x="1341.1" y="1" width="20.3" height="14"/></g>
<g transform="translate(346.5,943.0)" fill="url(#tp)"><rect x="1323.5" y="1" width="10.0" height="14"/><rect x="1285.2" y="1" width="33.8" height="14"/><rect x="1274.5" y="1" width="6.2" height="14"/></g>
<g transform="translate(59.2,978.7)" fill="url(#tp)"><rect x="1627.4" y="1" width="24.4" height="14"/><rect x="1601.9" y="1" width="21.0" height="14"/><rect x="1577.3" y="1" width="20.1" height="14"/><rect x="1560.9" y="1" width="11.9" height="14"/><rect x="1548.7" y="1" width="7.6" height="14"/><rect x="1508.1" y="1" width="36.1" height="14"/><rect x="1482.3" y="1" width="21.3" height="14"/><rect x="1445.5" y="1" width="32.3" height="14"/><rect x="1422.2" y="1" width="18.8" height="14"/><rect x="1409.3" y="1" width="8.4" height="14"/><rect x="1378.7" y="1" width="26.1" height="14"/><rect x="1369.3" y="1" width="4.9" height="14"/></g>
<g transform="translate(341.5,1004.0)" fill="url(#tp)"><rect x="1345.5" y="1" width="24.0" height="14"/><rect x="1325.3" y="1" width="15.7" height="14"/><rect x="1283.0" y="1" width="37.8" height="14"/><rect x="1268.7" y="1" width="9.8" height="14"/><rect x="1233.7" y="1" width="30.5" height="14"/><rect x="1203.8" y="1" width="25.4" height="14"/><rect x="1168.0" y="1" width="31.3" height="14"/><rect x="1150.3" y="1" width="13.2" height="14"/><rect x="1123.1" y="1" width="22.7" height="14"/><rect x="1098.2" y="1" width="20.4" height="14"/><rect x="1087.0" y="1" width="6.6" height="14"/></g>
<g transform="translate(29.8,1029.3)" fill="url(#tp)"><rect x="1643.5" y="1" width="37.7" height="14"/><rect x="1623.2" y="1" width="15.8" height="14"/><rect x="1592.9" y="1" width="25.9" height="14"/><rect x="1562.9" y="1" width="25.5" height="14"/><rect x="1528.7" y="1" width="29.7" height="14"/><rect x="1487.9" y="1" width="36.3" height="14"/><rect x="1470.7" y="1" width="12.6" height="14"/><rect x="1453.5" y="1" width="12.8" height="14"/><rect x="1421.8" y="1" width="27.1" height="14"/><rect x="1398.7" y="1" width="18.6" height="14"/></g>
<g transform="translate(248.1,1054.6)" fill="url(#tp)"><rect x="1456.8" y="1" width="6.1" height="14"/><rect x="1431.9" y="1" width="20.4" height="14"/><rect x="1402.3" y="1" width="25.0" height="14"/><rect x="1382.5" y="1" width="15.3" height="14"/><rect x="1364.6" y="1" width="13.4" height="14"/><rect x="1331.5" y="1" width="28.6" height="14"/><rect x="1298.5" y="1" width="28.5" height="14"/><rect x="1273.5" y="1" width="20.5" height="14"/><rect x="1241.0" y="1" width="28.0" height="14"/><rect x="1200.9" y="1" width="35.6" height="14"/><rect x="1180.4" y="1" width="16.1" height="14"/></g>
<g transform="translate(226.0,1079.9)" fill="url(#tp)"><rect x="1457.9" y="1" width="27.2" height="14"/><rect x="1417.5" y="1" width="35.9" height="14"/><rect x="1393.4" y="1" width="19.6" height="14"/><rect x="1365.5" y="1" width="23.4" height="14"/><rect x="1334.2" y="1" width="26.7" height="14"/><rect x="1294.7" y="1" width="35.1" height="14"/><rect x="1257.7" y="1" width="32.5" height="14"/><rect x="1244.9" y="1" width="8.3" height="14"/><rect x="1229.1" y="1" width="11.3" height="14"/><rect x="1202.5" y="1" width="22.1" height="14"/></g>
<g transform="translate(381.9,1105.2)" fill="url(#tp)"><rect x="1313.9" y="1" width="15.2" height="14"/><rect x="1299.4" y="1" width="10.0" height="14"/><rect x="1266.9" y="1" width="28.0" height="14"/><rect x="1234.0" y="1" width="28.4" height="14"/><rect x="1193.3" y="1" width="36.2" height="14"/><rect x="1166.8" y="1" width="22.0" height="14"/><rect x="1140.5" y="1" width="21.8" height="14"/><rect x="1127.4" y="1" width="8.6" height="14"/><rect x="1115.6" y="1" width="7.3" height="14"/><rect x="1091.3" y="1" width="19.8" height="14"/><rect x="1070.5" y="1" width="16.3" height="14"/><rect x="1046.6" y="1" width="19.4" height="14"/></g>
<g transform="translate(363.7,1130.5)" fill="url(#tp)"><rect x="1314.6" y="1" width="32.8" height="14"/><rect x="1285.7" y="1" width="24.4" height="14"/><rect x="1244.7" y="1" width="36.4" height="14"/><rect x="1202.3" y="1" width="38.0" height="14"/><rect x="1170.2" y="1" width="27.5" height="14"/><rect x="1151.1" y="1" width="14.6" height="14"/><rect x="1139.3" y="1" width="7.3" height="14"/><rect x="1104.6" y="1" width="30.2" height="14"/><rect x="1079.1" y="1" width="21.1" height="14"/><rect x="1064.8" y="1" width="9.8" height="14"/></g>
<g transform="translate(252.0,846.8)" fill="url(#tp)"><rect x="1199.0" y="1" width="18.0" height="14"/></g>
<g transform="translate(132.3,846.8)" fill="url(#tp)"><rect x="1394.9" y="1" width="21.7" height="14"/><rect x="1381.5" y="1" width="8.9" height="14"/><rect x="1372.7" y="1" width="4.3" height="14"/></g>
<g transform="translate(130.9,846.8)" fill="url(#tp)"><rect x="1470.6" y="1" width="27.4" height="14"/><rect x="1458.1" y="1" width="8.1" height="14"/></g>
<g transform="translate(114.4,846.8)" fill="url(#tp)"><rect x="1560.6" y="1" width="12.0" height="14"/></g>
<g transform="translate(323.0,873.0)" fill="url(#tp)"><rect x="1192.0" y="1" width="24.0" height="14"/></g>
<g transform="translate(180.6,873.0)" fill="url(#tp)"><rect x="1419.4" y="1" width="18.0" height="14"/></g>
<g transform="translate(385.2,873.0)" fill="url(#tp)"><rect x="1284.8" y="1" width="22.0" height="14"/></g>
<g transform="translate(343.5,409.5) scale(1.15) translate(-343.5,-409.5)"><g transform="translate(160.5,401.5)" fill="url(#tpb)"><rect x="160.9" y="1" width="22.2" height="14"/></g></g>
<g transform="translate(395,440) scale(1.45) translate(-395,-440)"><g transform="translate(204.3,432.0)" fill="url(#tpb)"><rect x="167.9" y="1" width="22.8" height="14"/><rect x="132.0" y="1" width="32.4" height="14"/><rect x="100.3" y="1" width="28.3" height="14"/></g></g>
<g transform="translate(770,283.5) scale(1.4) translate(-770,-283.5)"><g transform="translate(392.3,275.5)" fill="url(#tpb)"><rect x="357.7" y="1" width="20.0" height="14"/><rect x="340.6" y="1" width="13.6" height="14"/></g></g>
<g transform="translate(881,5) scale(1.3)"><g transform="translate(-10,0)"><rect x="10" y="0" width="22" height="12" fill="url(#tpw)"/><rect x="34" y="0" width="32" height="12" fill="url(#tpw)"/><rect x="68" y="0" width="26" height="12" fill="url(#tpw)"/></g></g>
</svg>
<svg class="a" style="left:295px;top:495px" width="72" height="5"><path d="M1 2.5H71" stroke="#333" stroke-width="1" stroke-dasharray="2 1"/></svg>
<svg class="a" style="left:700px;top:315px" width="90" height="50" viewBox="700 315 90 50">
<g fill="none" stroke="#000" stroke-linecap="round">
<path d="M716 349.6H772" stroke-width="2.6"/>
<path d="M777.8 331L767.5 336.3" stroke-width="2.6"/>
<path d="M767.2 336.5C772 339.5 774.5 343 774 346.5C773.5 349 771 349.6 768 349.6" stroke-width="3"/>
<path d="M757.5 333.5V349" stroke-width="2.4"/>
<path d="M752 346.5v2.5M747.5 346.5v2.5" stroke-width="2"/>
<path d="M742.8 333V349" stroke-width="2.4"/>
<path d="M741 349.8C733 351 724 352.5 719 350C715.5 348 714 344 713.2 340.8" stroke-width="3.2"/>
</g>
<g fill="#000"><rect x="747.8" y="353.2" width="2.2" height="2.2"/><rect x="751.2" y="353.2" width="2.2" height="2.2"/></g>
</svg>
<div class="t" style="left:1198px;width:100px;text-align:right;top:245px;font-family:'Liberation Serif';font-weight:bold;font-size:9.5px;letter-spacing:1.1px;margin-left:1.1px;color:#000">1-1</div>
<div class="t" style="left:1198px;width:100px;text-align:right;top:1054px;font-family:'Liberation Serif';font-weight:bold;font-size:8.5px;letter-spacing:.4px;margin-left:.4px;color:#000">2 – 1</div>
<div class="t" style="left:1611px;width:100px;text-align:right;top:824.5px;font-family:'Liberation Serif';font-weight:bold;font-size:8.5px;letter-spacing:.4px;margin-left:.4px;color:#000">– 3 – 1</div>
<div class="t" style="left:1611px;width:100px;text-align:right;top:946.5px;font-family:'Liberation Serif';font-weight:bold;font-size:8.5px;letter-spacing:.4px;margin-left:.4px;color:#000">– 4 – 1</div>
<svg class="a" style="left:1425px;top:840px" width="290" height="65" viewBox="1425 840 290 65">
<g stroke="#000" stroke-width="1" fill="none"><rect x="1431.5" y="847.5" width="276" height="51"/>
<path d="M1431.5 873.5h276M1491.5 847.5v51M1563.5 847.5v51M1658.5 847.5v51"/></g></svg>
<div class="t" style="left:1433px;top:874px;font-family:'Liberation Serif';font-weight:bold;font-size:9.5px;color:#000;letter-spacing:-.1px">09186487026</div>
<div class="t" style="left:742px;top:734px;font-size:7px;color:#777">2</div>
<div class="t" style="left:1155px;top:734px;font-size:7px;color:#777">3</div>
<div class="t" style="left:1568px;top:734px;font-size:7px;color:#777">4</div>
<svg class="a" style="left:1115.5px;top:370.5px" width="83" height="77" viewBox="0 0 83 77"><defs><radialGradient id="c3g" cx="50%" cy="55%" r="60%"><stop offset="0" stop-color="#eaa890"/><stop offset=".6" stop-color="#d88068"/><stop offset="1" stop-color="#b85a38"/></radialGradient></defs><rect width="83" height="77" fill="url(#c3g)"/><rect x="11" y="13" width="62" height="55" fill="none" stroke="#f2c890" stroke-width="2.2" opacity=".8"/><rect x="17" y="19" width="50" height="44" fill="none" stroke="#e8b080" stroke-width="1.2" opacity=".7"/><rect x="19.8" y="41.9" width="1.5" height="1.5" fill="#e8a070"/><rect x="51.9" y="5.0" width="0.9" height="0.9" fill="#e8a070"/><rect x="21.5" y="18.0" width="2.6" height="2.6" fill="#e8a070"/><rect x="44.9" y="42.3" width="1.6" height="1.6" fill="#f4cc90"/><rect x="19.2" y="11.7" width="2.5" height="2.5" fill="#7a2810"/><rect x="61.5" y="51.7" width="1.0" height="1.0" fill="#8a3018"/><rect x="25.0" y="2.4" width="2.4" height="2.4" fill="#e8a070"/><rect x="49.4" y="70.9" width="1.6" height="1.6" fill="#7a2810"/><rect x="32.8" y="61.7" width="1.7" height="1.7" fill="#f4cc90"/><rect x="72.9" y="7.5" width="1.1" height="1.1" fill="#f8dca8"/><rect x="21.4" y="51.7" width="2.2" height="2.2" fill="#fae8c0"/><rect x="35.0" y="64.2" width="1.9" height="1.9" fill="#f0b8a0"/><rect x="48.6" y="45.0" width="2.4" height="2.4" fill="#8a3018"/><rect x="71.1" y="76.3" width="2.0" height="2.0" fill="#f4cc90"/><rect x="58.0" y="25.1" width="1.8" height="1.8" fill="#a04020"/><rect x="59.2" y="16.3" width="2.3" height="2.3" fill="#fae8c0"/><rect x="23.7" y="4.9" width="2.4" height="2.4" fill="#e8a070"/><rect x="7.3" y="61.6" width="1.6" height="1.6" fill="#f4cc90"/><rect x="1.7" y="32.9" width="1.6" height="1.6" fill="#a04020"/><rect x="3.7" y="47.3" width="1.0" height="1.0" fill="#c86040"/><rect x="45.7" y="71.0" width="1.4" height="1.4" fill="#f8dca8"/><rect x="82.9" y="23.8" width="1.0" height="1.0" fill="#f0b8a0"/><rect x="2.6" y="15.2" width="1.6" height="1.6" fill="#fae8c0"/><rect x="13.0" y="3.3" width="2.4" height="2.4" fill="#c86040"/><rect x="29.9" y="10.7" width="2.4" height="2.4" fill="#7a2810"/><rect x="38.2" y="40.0" width="2.0" height="2.0" fill="#f0b8a0"/><rect x="8.5" y="74.9" width="2.3" height="2.3" fill="#fae8c0"/><rect x="35.8" y="55.5" width="1.3" height="1.3" fill="#fae8c0"/><rect x="36.3" y="19.9" width="1.4" height="1.4" fill="#c86040"/><rect x="1.0" y="32.0" width="1.9" height="1.9" fill="#8a3018"/><rect x="31.3" y="45.4" width="1.1" height="1.1" fill="#c86040"/><rect x="38.7" y="52.3" width="1.5" height="1.5" fill="#fae8c0"/><rect x="61.3" y="1.7" width="1.0" height="1.0" fill="#8a3018"/><rect x="80.0" y="19.3" width="1.7" height="1.7" fill="#c86040"/><rect x="14.7" y="14.3" width="2.2" height="2.2" fill="#fae8c0"/><rect x="24.9" y="29.0" width="2.2" height="2.2" fill="#8a3018"/><rect x="80.6" y="52.6" width="1.1" height="1.1" fill="#f0b8a0"/><rect x="18.5" y="61.9" width="1.3" height="1.3" fill="#f4cc90"/><rect x="56.3" y="50.0" width="1.1" height="1.1" fill="#c86040"/><rect x="78.8" y="52.0" width="1.3" height="1.3" fill="#f4cc90"/><rect x="6.6" y="57.1" width="1.3" height="1.3" fill="#e8a070"/><rect x="22.5" y="60.6" width="1.0" height="1.0" fill="#f8dca8"/><rect x="26.2" y="64.4" width="1.9" height="1.9" fill="#fae8c0"/><rect x="28.2" y="63.8" width="1.0" height="1.0" fill="#c86040"/><rect x="48.9" y="32.4" width="1.8" height="1.8" fill="#fae8c0"/><rect x="38.6" y="48.8" width="1.4" height="1.4" fill="#7a2810"/><rect x="3.0" y="31.8" width="1.2" height="1.2" fill="#e8a070"/><rect x="78.3" y="67.8" width="2.6" height="2.6" fill="#7a2810"/><rect x="46.4" y="75.9" width="2.1" height="2.1" fill="#8a3018"/><rect x="61.9" y="64.4" width="2.0" height="2.0" fill="#f0b8a0"/><rect x="80.0" y="41.9" width="2.4" height="2.4" fill="#a04020"/><rect x="71.2" y="74.8" width="1.1" height="1.1" fill="#f8dca8"/><rect x="3.7" y="69.6" width="2.1" height="2.1" fill="#f8dca8"/><rect x="74.4" y="69.3" width="1.9" height="1.9" fill="#8a3018"/><rect x="39.9" y="9.3" width="1.8" height="1.8" fill="#f8dca8"/><rect x="55.0" y="40.4" width="1.6" height="1.6" fill="#a04020"/><rect x="28.3" y="19.4" width="2.4" height="2.4" fill="#e8a070"/><rect x="67.4" y="4.7" width="1.3" height="1.3" fill="#a04020"/><rect x="44.4" y="62.9" width="1.2" height="1.2" fill="#fae8c0"/><rect x="76.5" y="62.1" width="2.3" height="2.3" fill="#8a3018"/><rect x="40.5" y="44.0" width="1.6" height="1.6" fill="#fae8c0"/><rect x="20.6" y="47.6" width="1.8" height="1.8" fill="#8a3018"/><rect x="39.3" y="59.8" width="0.9" height="0.9" fill="#8a3018"/><rect x="64.3" y="3.6" width="1.0" height="1.0" fill="#e8a070"/><rect x="80.9" y="65.8" width="1.0" height="1.0" fill="#f0b8a0"/><rect x="40.7" y="12.1" width="1.0" height="1.0" fill="#7a2810"/><rect x="53.7" y="45.2" width="1.5" height="1.5" fill="#f8dca8"/><rect x="82.0" y="33.0" width="1.1" height="1.1" fill="#8a3018"/><rect x="59.4" y="29.3" width="1.0" height="1.0" fill="#f4cc90"/><rect x="3.6" y="35.5" width="2.0" height="2.0" fill="#f0b8a0"/><rect x="31.6" y="61.7" width="2.0" height="2.0" fill="#7a2810"/><rect x="4.4" y="48.3" width="2.2" height="2.2" fill="#c86040"/><rect x="34.9" y="53.4" width="1.7" height="1.7" fill="#f8dca8"/><rect x="18.1" y="20.8" width="1.9" height="1.9" fill="#7a2810"/><rect x="18.6" y="10.0" width="0.9" height="0.9" fill="#c86040"/><rect x="31.1" y="69.1" width="2.2" height="2.2" fill="#fae8c0"/><rect x="10.1" y="53.2" width="2.5" height="2.5" fill="#f0b8a0"/><rect x="65.8" y="51.4" width="2.1" height="2.1" fill="#f0b8a0"/><rect x="8.6" y="45.3" width="0.9" height="0.9" fill="#f4cc90"/><rect x="19.6" y="29.9" width="1.8" height="1.8" fill="#a04020"/><rect x="54.7" y="28.9" width="2.3" height="2.3" fill="#c86040"/><rect x="69.8" y="9.3" width="2.3" height="2.3" fill="#e8a070"/><rect x="69.4" y="73.3" width="1.9" height="1.9" fill="#a04020"/><rect x="3.0" y="59.1" width="1.8" height="1.8" fill="#f8dca8"/><rect x="8.9" y="57.7" width="2.5" height="2.5" fill="#8a3018"/><rect x="45.7" y="66.9" width="1.2" height="1.2" fill="#a04020"/><rect x="20.1" y="13.8" width="1.3" height="1.3" fill="#7a2810"/><rect x="21.0" y="46.2" width="2.5" height="2.5" fill="#f0b8a0"/><rect x="34.7" y="6.4" width="1.8" height="1.8" fill="#7a2810"/><rect x="70.0" y="74.5" width="1.6" height="1.6" fill="#f0b8a0"/><rect x="56.9" y="12.0" width="1.6" height="1.6" fill="#f4cc90"/><rect x="13.5" y="38.3" width="1.7" height="1.7" fill="#f0b8a0"/><rect x="78.9" y="45.2" width="2.4" height="2.4" fill="#f4cc90"/><rect x="22.2" y="15.3" width="1.9" height="1.9" fill="#c86040"/><rect x="77.6" y="65.6" width="1.8" height="1.8" fill="#fae8c0"/><rect x="55.7" y="65.9" width="1.9" height="1.9" fill="#fae8c0"/><rect x="73.8" y="23.7" width="1.4" height="1.4" fill="#7a2810"/><rect x="16.7" y="43.9" width="1.3" height="1.3" fill="#e8a070"/><rect x="64.3" y="11.1" width="2.6" height="2.6" fill="#e8a070"/><rect x="58.2" y="15.8" width="1.9" height="1.9" fill="#f0b8a0"/><rect x="2.3" y="76.4" width="1.0" height="1.0" fill="#7a2810"/><rect x="65.0" y="67.9" width="1.0" height="1.0" fill="#f8dca8"/><rect x="74.0" y="49.9" width="2.2" height="2.2" fill="#a04020"/><rect x="79.6" y="65.7" width="1.3" height="1.3" fill="#f8dca8"/><rect x="64.4" y="10.6" width="2.0" height="2.0" fill="#8a3018"/><rect x="74.7" y="19.6" width="2.4" height="2.4" fill="#c86040"/><rect x="15.2" y="7.0" width="2.3" height="2.3" fill="#a04020"/><rect x="7.7" y="64.2" width="1.4" height="1.4" fill="#c86040"/><rect x="37.5" y="56.5" width="1.5" height="1.5" fill="#8a3018"/><rect x="27.8" y="33.6" width="1.7" height="1.7" fill="#f8dca8"/><rect x="53.5" y="57.2" width="1.7" height="1.7" fill="#f4cc90"/><rect x="45.2" y="9.2" width="1.4" height="1.4" fill="#7a2810"/><rect x="9.3" y="68.3" width="2.4" height="2.4" fill="#a04020"/><rect x="43.8" y="54.0" width="2.1" height="2.1" fill="#c86040"/><rect x="62.9" y="22.8" width="2.0" height="2.0" fill="#fae8c0"/><rect x="8.9" y="72.7" width="1.5" height="1.5" fill="#f0b8a0"/><rect x="43.6" y="51.3" width="1.8" height="1.8" fill="#8a3018"/><rect x="59.6" y="52.2" width="1.9" height="1.9" fill="#f4cc90"/><rect x="53.6" y="56.2" width="1.2" height="1.2" fill="#c86040"/><rect x="73.9" y="50.5" width="1.1" height="1.1" fill="#f0b8a0"/><rect x="11.7" y="25.5" width="2.1" height="2.1" fill="#7a2810"/><rect x="46.1" y="49.9" width="1.7" height="1.7" fill="#fae8c0"/><rect x="64.9" y="54.3" width="1.1" height="1.1" fill="#f4cc90"/><rect x="62.6" y="41.8" width="2.2" height="2.2" fill="#c86040"/><rect x="8.3" y="20.9" width="1.0" height="1.0" fill="#f4cc90"/><rect x="3.5" y="38.9" width="1.3" height="1.3" fill="#f0b8a0"/><rect x="29.4" y="25.6" width="1.6" height="1.6" fill="#f0b8a0"/><rect x="67.2" y="5.3" width="1.7" height="1.7" fill="#a04020"/><rect x="12.6" y="45.4" width="2.1" height="2.1" fill="#a04020"/><rect x="15.3" y="14.6" width="1.6" height="1.6" fill="#7a2810"/><rect x="67.7" y="57.6" width="1.9" height="1.9" fill="#f4cc90"/><rect x="71.3" y="61.5" width="1.8" height="1.8" fill="#f4cc90"/><rect x="47.2" y="15.6" width="1.3" height="1.3" fill="#fae8c0"/><rect x="2.5" y="61.8" width="2.4" height="2.4" fill="#7a2810"/><rect x="26.2" y="69.8" width="1.4" height="1.4" fill="#e8a070"/><rect x="81.1" y="52.9" width="1.4" height="1.4" fill="#e8a070"/><rect x="2.5" y="14.7" width="2.0" height="2.0" fill="#a04020"/><rect x="63.9" y="51.0" width="1.7" height="1.7" fill="#f0b8a0"/><rect x="51.9" y="15.3" width="2.2" height="2.2" fill="#f8dca8"/><rect x="3.1" y="38.5" width="2.0" height="2.0" fill="#e8a070"/><rect x="9.3" y="21.8" width="2.0" height="2.0" fill="#f4cc90"/><rect x="11.3" y="61.0" width="2.0" height="2.0" fill="#8a3018"/><rect x="2.1" y="47.6" width="1.8" height="1.8" fill="#e8a070"/><rect x="44.7" y="71.6" width="1.4" height="1.4" fill="#c86040"/><rect x="57.7" y="10.3" width="2.4" height="2.4" fill="#8a3018"/><rect x="59.4" y="57.0" width="1.5" height="1.5" fill="#f8dca8"/><rect x="77.3" y="66.3" width="1.6" height="1.6" fill="#f8dca8"/><rect x="40.3" y="8.4" width="1.0" height="1.0" fill="#a04020"/><rect x="70.2" y="54.3" width="1.6" height="1.6" fill="#e8a070"/><rect x="58.0" y="41.4" width="1.6" height="1.6" fill="#e8a070"/><rect x="25.3" y="35.8" width="2.2" height="2.2" fill="#7a2810"/><rect x="36.4" y="35.1" width="1.0" height="1.0" fill="#fae8c0"/><rect x="30.5" y="28.6" width="1.8" height="1.8" fill="#7a2810"/><rect x="18.6" y="0.2" width="1.3" height="1.3" fill="#c86040"/><rect x="11.9" y="35.4" width="1.2" height="1.2" fill="#f8dca8"/><rect x="1.8" y="45.0" width="1.8" height="1.8" fill="#8a3018"/><rect x="11.6" y="46.9" width="1.7" height="1.7" fill="#f4cc90"/><rect x="5.0" y="1.7" width="1.7" height="1.7" fill="#7a2810"/><rect x="2.7" y="55.0" width="1.3" height="1.3" fill="#8a3018"/><rect x="32.9" y="2.1" width="2.5" height="2.5" fill="#f8dca8"/><rect x="20.0" y="30.0" width="1.2" height="1.2" fill="#c86040"/><rect x="51.7" y="26.7" width="1.1" height="1.1" fill="#8a3018"/><rect x="67.0" y="22.4" width="2.6" height="2.6" fill="#e8a070"/><rect x="65.5" y="74.0" width="1.7" height="1.7" fill="#f0b8a0"/><rect x="22.1" y="62.7" width="2.0" height="2.0" fill="#c86040"/><rect x="26.3" y="4.4" width="1.6" height="1.6" fill="#a04020"/><rect x="49.2" y="0.3" width="1.0" height="1.0" fill="#a04020"/><rect x="1.6" y="38.7" width="1.7" height="1.7" fill="#f8dca8"/><rect x="54.3" y="69.3" width="1.2" height="1.2" fill="#e8a070"/><rect x="28.2" y="36.9" width="1.5" height="1.5" fill="#8a3018"/><rect x="31.7" y="57.9" width="2.0" height="2.0" fill="#7a2810"/><rect x="7.3" y="22.6" width="2.3" height="2.3" fill="#a04020"/><rect x="42.1" y="42.1" width="1.8" height="1.8" fill="#7a2810"/><rect x="14.5" y="57.0" width="2.1" height="2.1" fill="#f0b8a0"/><rect x="29.8" y="14.2" width="2.3" height="2.3" fill="#e8a070"/><rect x="19.0" y="60.0" width="1.7" height="1.7" fill="#fae8c0"/><rect x="68.1" y="39.0" width="2.2" height="2.2" fill="#7a2810"/><rect x="78.8" y="3.3" width="1.2" height="1.2" fill="#8a3018"/><rect x="68.3" y="7.1" width="2.1" height="2.1" fill="#a04020"/><rect x="26.6" y="46.3" width="2.3" height="2.3" fill="#8a3018"/><rect x="72.9" y="67.2" width="1.7" height="1.7" fill="#c86040"/><rect x="82.7" y="0.1" width="1.2" height="1.2" fill="#a04020"/><rect x="28.1" y="24.0" width="1.7" height="1.7" fill="#f8dca8"/><rect x="20.0" y="3.8" width="1.2" height="1.2" fill="#f4cc90"/><rect x="48.6" y="0.9" width="1.3" height="1.3" fill="#f8dca8"/><rect x="18.3" y="43.3" width="1.6" height="1.6" fill="#c86040"/><rect x="65.5" y="41.2" width="1.2" height="1.2" fill="#f4cc90"/><rect x="51.7" y="3.2" width="2.3" height="2.3" fill="#8a3018"/><rect x="71.3" y="7.8" width="2.5" height="2.5" fill="#fae8c0"/><rect x="7.1" y="35.8" width="1.3" height="1.3" fill="#a04020"/><rect x="53.3" y="58.6" width="2.4" height="2.4" fill="#c86040"/><rect x="33.4" y="50.9" width="2.2" height="2.2" fill="#fae8c0"/><rect x="69.3" y="45.8" width="2.3" height="2.3" fill="#f8dca8"/><rect x="9.7" y="0.6" width="1.4" height="1.4" fill="#a04020"/><rect x="28.3" y="14.8" width="2.2" height="2.2" fill="#f0b8a0"/><rect x="57.0" y="28.1" width="2.2" height="2.2" fill="#a04020"/><rect x="50.3" y="16.5" width="1.5" height="1.5" fill="#8a3018"/><rect x="27.8" y="33.2" width="1.0" height="1.0" fill="#f8dca8"/><rect x="26.8" y="57.7" width="1.3" height="1.3" fill="#f8dca8"/><rect x="72.6" y="76.0" width="1.9" height="1.9" fill="#f0b8a0"/><rect x="70.8" y="28.3" width="1.2" height="1.2" fill="#7a2810"/><rect x="40.2" y="59.6" width="1.6" height="1.6" fill="#8a3018"/><rect x="24.2" y="71.9" width="1.2" height="1.2" fill="#a04020"/><rect x="2.3" y="11.6" width="1.8" height="1.8" fill="#8a3018"/><rect x="53.1" y="3.1" width="2.2" height="2.2" fill="#fae8c0"/><rect x="40.8" y="2.9" width="1.7" height="1.7" fill="#f8dca8"/><rect x="62.0" y="22.1" width="1.1" height="1.1" fill="#fae8c0"/><rect x="75.4" y="34.2" width="1.2" height="1.2" fill="#e8a070"/><rect x="63.3" y="53.9" width="2.6" height="2.6" fill="#c86040"/><rect x="78.3" y="33.2" width="2.5" height="2.5" fill="#e8a070"/><rect x="43.7" y="41.7" width="1.5" height="1.5" fill="#fae8c0"/><rect x="23.7" y="35.7" width="2.4" height="2.4" fill="#fae8c0"/><rect x="62.0" y="71.6" width="1.8" height="1.8" fill="#8a3018"/><rect x="10.9" y="40.9" width="1.8" height="1.8" fill="#f4cc90"/><rect x="78.9" y="0.1" width="2.6" height="2.6" fill="#e8a070"/><rect x="29.5" y="74.4" width="1.5" height="1.5" fill="#f0b8a0"/><rect x="2.9" y="14.2" width="0.9" height="0.9" fill="#7a2810"/><rect x="75.1" y="64.3" width="1.9" height="1.9" fill="#a04020"/><rect x="37.4" y="20.2" width="2.0" height="2.0" fill="#e8a070"/><rect x="34.7" y="20.0" width="1.0" height="1.0" fill="#7a2810"/><rect x="3.1" y="76.7" width="1.2" height="1.2" fill="#f8dca8"/><rect x="79.1" y="57.3" width="2.3" height="2.3" fill="#7a2810"/><rect x="42.2" y="64.0" width="1.8" height="1.8" fill="#fae8c0"/><rect x="1.4" y="3.5" width="1.7" height="1.7" fill="#8a3018"/><rect x="74.4" y="69.8" width="1.7" height="1.7" fill="#f0b8a0"/><rect x="34.4" y="39.9" width="1.2" height="1.2" fill="#f4cc90"/><rect x="6.1" y="10.7" width="2.3" height="2.3" fill="#a04020"/><rect x="33.9" y="27.1" width="1.7" height="1.7" fill="#fae8c0"/><rect x="37.6" y="73.9" width="1.2" height="1.2" fill="#c86040"/><rect x="11.6" y="2.9" width="1.7" height="1.7" fill="#f8dca8"/><rect x="68.7" y="71.7" width="1.9" height="1.9" fill="#8a3018"/><rect x="26.3" y="46.0" width="1.1" height="1.1" fill="#f4cc90"/><rect x="23.2" y="54.6" width="2.4" height="2.4" fill="#a04020"/><rect x="36.1" y="5.8" width="1.0" height="1.0" fill="#e8a070"/><rect x="74.3" y="73.9" width="2.0" height="2.0" fill="#f8dca8"/><rect x="25.8" y="26.6" width="2.0" height="2.0" fill="#7a2810"/><rect x="26.2" y="20.9" width="2.5" height="2.5" fill="#c86040"/><rect x="26.3" y="30.2" width="1.4" height="1.4" fill="#f4cc90"/><rect x="34.6" y="31.8" width="2.4" height="2.4" fill="#e8a070"/><rect x="19.1" y="15.4" width="1.0" height="1.0" fill="#f0b8a0"/><rect x="9.6" y="48.7" width="1.1" height="1.1" fill="#8a3018"/><rect x="78.2" y="75.0" width="2.1" height="2.1" fill="#7a2810"/><rect x="22.2" y="37.2" width="1.4" height="1.4" fill="#f0b8a0"/><rect x="46.4" y="13.4" width="1.7" height="1.7" fill="#f4cc90"/><rect x="12.0" y="69.7" width="1.2" height="1.2" fill="#e8a070"/><rect x="56.0" y="49.8" width="1.1" height="1.1" fill="#8a3018"/><rect x="15.0" y="48.2" width="1.4" height="1.4" fill="#f4cc90"/><rect x="72.6" y="3.8" width="2.5" height="2.5" fill="#f0b8a0"/><rect x="17.8" y="60.0" width="1.6" height="1.6" fill="#f4cc90"/><rect x="82.0" y="21.6" width="1.1" height="1.1" fill="#f4cc90"/><rect x="24.5" y="29.5" width="2.5" height="2.5" fill="#a04020"/><rect x="77.6" y="0.6" width="1.5" height="1.5" fill="#f4cc90"/><rect x="81.3" y="18.9" width="1.5" height="1.5" fill="#e8a070"/><rect x="8.6" y="65.2" width="1.7" height="1.7" fill="#c86040"/><rect x="44.1" y="65.8" width="1.7" height="1.7" fill="#7a2810"/><rect x="38.5" y="41.4" width="1.7" height="1.7" fill="#f0b8a0"/><rect x="37.9" y="29.6" width="2.2" height="2.2" fill="#fae8c0"/><rect x="77.4" y="65.3" width="1.2" height="1.2" fill="#f4cc90"/><rect x="26.3" y="64.7" width="1.1" height="1.1" fill="#8a3018"/><rect x="34.0" y="67.2" width="1.1" height="1.1" fill="#8a3018"/><rect x="13.1" y="9.4" width="1.6" height="1.6" fill="#c86040"/><rect x="43.6" y="59.0" width="1.1" height="1.1" fill="#f0b8a0"/><rect x="48.2" y="25.1" width="1.9" height="1.9" fill="#f8dca8"/><rect x="26.8" y="39.0" width="1.5" height="1.5" fill="#c86040"/><rect x="49.1" y="54.1" width="2.2" height="2.2" fill="#c86040"/><rect x="71.6" y="64.3" width="1.4" height="1.4" fill="#fae8c0"/><rect x="22.4" y="9.5" width="1.8" height="1.8" fill="#c86040"/><rect x="60.5" y="19.1" width="1.6" height="1.6" fill="#fae8c0"/><rect x="37.6" y="36.8" width="1.8" height="1.8" fill="#f4cc90"/><rect x="81.9" y="40.7" width="1.7" height="1.7" fill="#8a3018"/><rect x="5.8" y="32.8" width="2.3" height="2.3" fill="#fae8c0"/><rect x="4.9" y="65.8" width="1.6" height="1.6" fill="#a04020"/><rect x="30.4" y="16.5" width="1.8" height="1.8" fill="#a04020"/><rect x="35.8" y="66.8" width="2.1" height="2.1" fill="#c86040"/><rect x="1.0" y="28.6" width="1.5" height="1.5" fill="#e8a070"/><rect x="30.9" y="50.2" width="2.4" height="2.4" fill="#e8a070"/><rect x="12.1" y="16.9" width="1.5" height="1.5" fill="#8a3018"/><rect x="11.6" y="6.3" width="1.4" height="1.4" fill="#fae8c0"/><rect x="16.3" y="2.2" width="2.1" height="2.1" fill="#c86040"/><rect x="44.4" y="56.8" width="2.3" height="2.3" fill="#f8dca8"/><rect x="36.6" y="52.5" width="1.1" height="1.1" fill="#7a2810"/><rect x="18.7" y="10.7" width="1.4" height="1.4" fill="#f0b8a0"/><rect x="15.8" y="63.4" width="1.9" height="1.9" fill="#a04020"/><rect x="35.8" y="61.3" width="1.6" height="1.6" fill="#e8a070"/><rect x="69.1" y="14.1" width="1.4" height="1.4" fill="#7a2810"/><rect x="16.9" y="49.0" width="1.9" height="1.9" fill="#fae8c0"/><rect x="36.2" y="7.5" width="2.6" height="2.6" fill="#a04020"/><rect x="5.3" y="67.5" width="2.2" height="2.2" fill="#c86040"/><rect x="5.5" y="0.7" width="1.7" height="1.7" fill="#7a2810"/><rect x="52.4" y="7.3" width="2.0" height="2.0" fill="#7a2810"/><rect x="73.2" y="17.4" width="1.4" height="1.4" fill="#7a2810"/><rect x="79.5" y="4.0" width="1.8" height="1.8" fill="#f0b8a0"/><rect x="43.5" y="44.2" width="1.0" height="1.0" fill="#f8dca8"/><rect x="68.1" y="63.5" width="2.5" height="2.5" fill="#7a2810"/><rect x="23.6" y="75.6" width="2.0" height="2.0" fill="#f0b8a0"/><rect x="18.8" y="44.1" width="1.5" height="1.5" fill="#f4cc90"/><rect x="48.3" y="28.1" width="1.8" height="1.8" fill="#c86040"/><rect x="63.8" y="70.1" width="2.4" height="2.4" fill="#f0b8a0"/><rect x="16.9" y="4.6" width="1.6" height="1.6" fill="#fae8c0"/><rect x="52.3" y="38.0" width="2.4" height="2.4" fill="#f4cc90"/><rect x="68.3" y="72.2" width="1.1" height="1.1" fill="#f0b8a0"/><rect x="33.0" y="16.3" width="1.2" height="1.2" fill="#8a3018"/><rect x="27.1" y="19.0" width="2.4" height="2.4" fill="#8a3018"/><rect x="19.7" y="28.3" width="1.3" height="1.3" fill="#fae8c0"/><rect x="20.8" y="20.3" width="2.1" height="2.1" fill="#c86040"/><rect x="60.8" y="16.0" width="1.4" height="1.4" fill="#f4cc90"/><rect x="46.9" y="18.9" width="2.1" height="2.1" fill="#f8dca8"/><rect x="67.3" y="28.1" width="1.3" height="1.3" fill="#f0b8a0"/><rect x="32.7" y="41.5" width="1.9" height="1.9" fill="#fae8c0"/><rect x="36.7" y="4.3" width="2.2" height="2.2" fill="#e8a070"/><rect x="40.7" y="44.6" width="1.4" height="1.4" fill="#7a2810"/><rect x="56.9" y="17.1" width="2.3" height="2.3" fill="#e8a070"/><rect x="28.7" y="76.7" width="1.7" height="1.7" fill="#f4cc90"/><rect x="9.5" y="32.3" width="2.4" height="2.4" fill="#f4cc90"/><rect x="48.4" y="8.3" width="1.8" height="1.8" fill="#fae8c0"/><rect x="39.7" y="41.5" width="2.4" height="2.4" fill="#e8a070"/><rect x="31.1" y="3.2" width="1.5" height="1.5" fill="#f8dca8"/><rect x="51.7" y="54.1" width="2.6" height="2.6" fill="#fae8c0"/><rect x="48.5" y="52.2" width="1.4" height="1.4" fill="#c86040"/><rect x="82.0" y="64.4" width="2.2" height="2.2" fill="#fae8c0"/><rect x="76.7" y="32.6" width="1.8" height="1.8" fill="#c86040"/><rect x="35.1" y="28.5" width="1.2" height="1.2" fill="#fae8c0"/><rect x="57.9" y="43.3" width="1.6" height="1.6" fill="#a04020"/><rect x="26.9" y="12.5" width="2.5" height="2.5" fill="#e8a070"/><rect x="14.3" y="30.4" width="1.2" height="1.2" fill="#7a2810"/><rect x="45.9" y="28.2" width="2.1" height="2.1" fill="#e8a070"/><rect x="58.3" y="12.8" width="2.0" height="2.0" fill="#a04020"/><rect x="8.4" y="41.4" width="2.5" height="2.5" fill="#f0b8a0"/><rect x="42.8" y="30.6" width="1.0" height="1.0" fill="#fae8c0"/><rect x="56.8" y="17.7" width="1.3" height="1.3" fill="#f8dca8"/><rect x="78.7" y="36.7" width="1.6" height="1.6" fill="#fae8c0"/><rect x="30.7" y="52.5" width="1.3" height="1.3" fill="#f0b8a0"/><rect x="78.6" y="51.4" width="1.3" height="1.3" fill="#fae8c0"/><rect x="65.6" y="56.5" width="2.4" height="2.4" fill="#a04020"/><rect x="72.1" y="10.4" width="1.0" height="1.0" fill="#e8a070"/><rect x="27.7" y="8.8" width="2.3" height="2.3" fill="#f4cc90"/><rect x="13.7" y="51.4" width="1.4" height="1.4" fill="#f0b8a0"/><rect x="11.0" y="69.3" width="1.6" height="1.6" fill="#7a2810"/><rect x="41.8" y="52.9" width="1.6" height="1.6" fill="#7a2810"/><rect x="21.4" y="41.9" width="1.9" height="1.9" fill="#7a2810"/><rect x="12.8" y="2.4" width="1.6" height="1.6" fill="#8a3018"/><rect x="17.5" y="58.4" width="1.8" height="1.8" fill="#f8dca8"/><rect x="70.4" y="56.0" width="1.5" height="1.5" fill="#8a3018"/><rect x="52.1" y="43.4" width="2.5" height="2.5" fill="#c86040"/><rect x="16.8" y="12.2" width="2.6" height="2.6" fill="#a04020"/><rect x="40.2" y="56.9" width="1.2" height="1.2" fill="#f0b8a0"/><rect x="28.0" y="62.8" width="2.1" height="2.1" fill="#fae8c0"/><rect x="11.4" y="48.1" width="2.4" height="2.4" fill="#f4cc90"/><rect x="7.9" y="53.7" width="2.0" height="2.0" fill="#f0b8a0"/><rect x="32.4" y="35.1" width="2.6" height="2.6" fill="#e8a070"/><rect x="21.9" y="54.0" width="0.9" height="0.9" fill="#fae8c0"/><rect x="56.6" y="32.0" width="0.9" height="0.9" fill="#c86040"/><rect x="43.0" y="25.2" width="2.6" height="2.6" fill="#a04020"/><rect x="3.7" y="16.3" width="0.9" height="0.9" fill="#f0b8a0"/><rect x="36.9" y="51.4" width="1.5" height="1.5" fill="#f8dca8"/><rect x="36.6" y="18.2" width="0.9" height="0.9" fill="#f8dca8"/><rect x="19.1" y="32.0" width="1.1" height="1.1" fill="#c86040"/><rect x="81.4" y="8.8" width="2.0" height="2.0" fill="#f8dca8"/><rect x="24.1" y="1.9" width="0.9" height="0.9" fill="#c86040"/><rect x="18.5" y="35.0" width="1.8" height="1.8" fill="#7a2810"/><rect x="55.0" y="56.6" width="1.8" height="1.8" fill="#7a2810"/><rect x="52.9" y="61.6" width="1.2" height="1.2" fill="#e8a070"/><rect x="41.5" y="7.7" width="2.5" height="2.5" fill="#f4cc90"/><rect x="36.4" y="9.7" width="2.6" height="2.6" fill="#f4cc90"/><rect x="18.8" y="40.5" width="1.4" height="1.4" fill="#a04020"/><rect x="41.5" y="36.9" width="1.3" height="1.3" fill="#7a2810"/><rect x="1.7" y="1.8" width="2.0" height="2.0" fill="#8a3018"/><rect x="58.8" y="66.9" width="2.4" height="2.4" fill="#8a3018"/><rect x="28.6" y="22.8" width="2.3" height="2.3" fill="#e8a070"/><rect x="24.9" y="23.5" width="1.1" height="1.1" fill="#a04020"/><rect x="33.7" y="50.0" width="1.1" height="1.1" fill="#f8dca8"/><rect x="19.7" y="12.2" width="1.6" height="1.6" fill="#f0b8a0"/><rect x="11.5" y="12.7" width="2.5" height="2.5" fill="#fae8c0"/><rect x="42.5" y="74.1" width="0.9" height="0.9" fill="#a04020"/><rect x="30.1" y="38.5" width="1.0" height="1.0" fill="#c86040"/><rect x="46.5" y="30.1" width="1.7" height="1.7" fill="#8a3018"/><rect x="26.8" y="37.1" width="2.0" height="2.0" fill="#e8a070"/><rect x="62.1" y="15.8" width="1.1" height="1.1" fill="#fae8c0"/><rect x="61.7" y="73.7" width="1.7" height="1.7" fill="#f8dca8"/><rect x="59.7" y="46.2" width="2.0" height="2.0" fill="#8a3018"/><rect x="50.7" y="18.6" width="1.2" height="1.2" fill="#a04020"/><rect x="54.3" y="70.3" width="1.7" height="1.7" fill="#7a2810"/><rect x="73.3" y="43.5" width="1.5" height="1.5" fill="#7a2810"/><rect x="68.0" y="28.1" width="2.3" height="2.3" fill="#7a2810"/><rect x="30.2" y="55.9" width="1.4" height="1.4" fill="#f8dca8"/><rect x="11.5" y="67.7" width="2.2" height="2.2" fill="#8a3018"/><rect x="53.3" y="56.0" width="1.1" height="1.1" fill="#7a2810"/><rect x="39.7" y="29.1" width="1.8" height="1.8" fill="#7a2810"/><rect x="50.9" y="36.5" width="1.0" height="1.0" fill="#f0b8a0"/><rect x="59.4" y="70.5" width="1.2" height="1.2" fill="#a04020"/><rect x="81.3" y="10.6" width="2.2" height="2.2" fill="#a04020"/><rect x="10.1" y="45.8" width="2.5" height="2.5" fill="#fae8c0"/><rect x="45.6" y="9.9" width="1.6" height="1.6" fill="#f4cc90"/><rect x="13.1" y="53.2" width="2.0" height="2.0" fill="#e8a070"/><rect x="26.2" y="34.1" width="2.5" height="2.5" fill="#fae8c0"/><rect x="45.6" y="45.5" width="1.5" height="1.5" fill="#f0b8a0"/><rect x="32.0" y="75.1" width="1.4" height="1.4" fill="#a04020"/><rect x="17.2" y="30.0" width="2.4" height="2.4" fill="#c86040"/><rect x="19.0" y="69.4" width="1.5" height="1.5" fill="#fae8c0"/><rect x="64.2" y="64.1" width="1.3" height="1.3" fill="#7a2810"/><rect x="0.1" y="49.6" width="2.3" height="2.3" fill="#f8dca8"/><rect x="77.5" y="58.0" width="2.3" height="2.3" fill="#a04020"/><rect x="65.7" y="26.5" width="1.4" height="1.4" fill="#c86040"/><rect x="80.4" y="69.7" width="2.5" height="2.5" fill="#f0b8a0"/><rect x="64.8" y="35.0" width="1.3" height="1.3" fill="#f0b8a0"/><rect x="75.1" y="20.4" width="1.4" height="1.4" fill="#f0b8a0"/><rect x="16.6" y="71.0" width="1.4" height="1.4" fill="#a04020"/><rect x="8.9" y="69.2" width="1.6" height="1.6" fill="#c86040"/><rect x="66.0" y="60.0" width="1.3" height="1.3" fill="#a04020"/><rect x="50.5" y="9.4" width="1.2" height="1.2" fill="#c86040"/><rect x="28.5" y="13.1" width="1.5" height="1.5" fill="#a04020"/><rect x="64.7" y="46.8" width="1.0" height="1.0" fill="#c86040"/><rect x="46.1" y="1.5" width="1.7" height="1.7" fill="#e8a070"/><rect x="82.9" y="13.0" width="0.9" height="0.9" fill="#f4cc90"/><rect x="30.7" y="65.8" width="1.4" height="1.4" fill="#f0b8a0"/><rect x="16.4" y="35.5" width="1.7" height="1.7" fill="#c86040"/><rect x="60.7" y="71.9" width="1.5" height="1.5" fill="#e8a070"/><rect x="44.4" y="0.8" width="1.0" height="1.0" fill="#fae8c0"/><rect x="15.4" y="75.6" width="1.1" height="1.1" fill="#f4cc90"/><rect x="14.5" y="61.2" width="1.3" height="1.3" fill="#a04020"/><rect x="30.1" y="0.3" width="1.3" height="1.3" fill="#c86040"/><rect x="72.8" y="75.4" width="1.0" height="1.0" fill="#7a2810"/><rect x="13.7" y="49.3" width="1.8" height="1.8" fill="#c86040"/><rect x="61.8" y="61.3" width="2.6" height="2.6" fill="#7a2810"/><rect x="72.6" y="42.2" width="1.0" height="1.0" fill="#a04020"/><rect x="55.3" y="15.5" width="1.1" height="1.1" fill="#a04020"/><rect x="55.0" y="2.2" width="1.3" height="1.3" fill="#e8a070"/><rect x="3.1" y="39.3" width="2.5" height="2.5" fill="#f8dca8"/><rect x="27.1" y="34.3" width="2.6" height="2.6" fill="#fae8c0"/><rect x="63.6" y="53.8" width="0.9" height="0.9" fill="#f8dca8"/><rect x="58.3" y="49.7" width="0.9" height="0.9" fill="#7a2810"/><rect x="10.7" y="65.2" width="1.7" height="1.7" fill="#f0b8a0"/><rect x="34.0" y="36.3" width="2.0" height="2.0" fill="#fae8c0"/><rect x="71.3" y="21.7" width="1.3" height="1.3" fill="#f4cc90"/><rect x="45.2" y="25.7" width="2.3" height="2.3" fill="#f8dca8"/><rect x="43.2" y="53.8" width="1.4" height="1.4" fill="#c86040"/><rect x="28.6" y="57.8" width="1.2" height="1.2" fill="#c86040"/><rect x="6.1" y="71.5" width="2.1" height="2.1" fill="#e8a070"/><rect x="33.6" y="73.8" width="1.6" height="1.6" fill="#f8dca8"/><rect x="76.5" y="48.2" width="0.9" height="0.9" fill="#c86040"/><rect x="36.6" y="4.2" width="2.0" height="2.0" fill="#f0b8a0"/><rect x="54.8" y="46.3" width="1.9" height="1.9" fill="#e8a070"/><rect x="44.4" y="57.3" width="2.2" height="2.2" fill="#f8dca8"/><rect x="70.3" y="76.9" width="1.0" height="1.0" fill="#a04020"/><rect x="67.5" y="60.3" width="1.6" height="1.6" fill="#f4cc90"/><rect x="16.8" y="20.2" width="1.1" height="1.1" fill="#f0b8a0"/><rect x="75.3" y="20.2" width="2.6" height="2.6" fill="#f8dca8"/><rect x="51.9" y="18.3" width="2.0" height="2.0" fill="#a04020"/><rect x="24.0" y="50.8" width="2.3" height="2.3" fill="#a04020"/><rect x="0.1" y="33.8" width="1.7" height="1.7" fill="#8a3018"/><rect x="75.7" y="49.0" width="2.2" height="2.2" fill="#f4cc90"/><rect x="51.9" y="45.0" width="1.7" height="1.7" fill="#f0b8a0"/><rect x="39.5" y="18.5" width="1.2" height="1.2" fill="#8a3018"/><rect x="30.2" y="41.3" width="1.5" height="1.5" fill="#8a3018"/><rect x="14.9" y="36.5" width="1.5" height="1.5" fill="#f4cc90"/><rect x="70.7" y="44.7" width="1.3" height="1.3" fill="#f0b8a0"/><rect x="52.7" y="4.8" width="2.2" height="2.2" fill="#f8dca8"/><rect x="56.3" y="24.6" width="1.9" height="1.9" fill="#f0b8a0"/><rect x="20.7" y="66.4" width="2.3" height="2.3" fill="#7a2810"/><rect x="12.4" y="33.0" width="2.1" height="2.1" fill="#8a3018"/><rect x="38.5" y="31.0" width="0.9" height="0.9" fill="#a04020"/><rect x="80.9" y="20.6" width="1.4" height="1.4" fill="#a04020"/><rect x="0.7" y="74.2" width="2.3" height="2.3" fill="#7a2810"/><rect x="61.8" y="30.5" width="2.4" height="2.4" fill="#f8dca8"/><rect x="57.0" y="65.1" width="1.0" height="1.0" fill="#fae8c0"/><rect x="78.2" y="14.1" width="2.4" height="2.4" fill="#c86040"/><rect x="73.0" y="57.0" width="2.5" height="2.5" fill="#c86040"/><rect x="80.4" y="17.9" width="2.5" height="2.5" fill="#7a2810"/><rect x="30.7" y="27.4" width="1.9" height="1.9" fill="#f8dca8"/><rect x="30.2" y="56.7" width="1.3" height="1.3" fill="#f4cc90"/><rect x="40.3" y="15.0" width="1.9" height="1.9" fill="#e8a070"/><rect x="81.3" y="58.5" width="1.8" height="1.8" fill="#e8a070"/><rect x="73.3" y="12.7" width="2.3" height="2.3" fill="#fae8c0"/><rect x="82.2" y="58.5" width="1.6" height="1.6" fill="#f8dca8"/><rect x="31.3" y="8.2" width="2.4" height="2.4" fill="#c86040"/><rect x="68.5" y="27.5" width="1.4" height="1.4" fill="#7a2810"/><rect x="53.6" y="59.6" width="1.2" height="1.2" fill="#c86040"/><rect x="42.9" y="22.0" width="2.6" height="2.6" fill="#fae8c0"/><rect x="60.4" y="14.9" width="2.1" height="2.1" fill="#7a2810"/><rect x="54.2" y="16.4" width="2.1" height="2.1" fill="#f0b8a0"/><rect x="19.4" y="67.0" width="1.3" height="1.3" fill="#f8dca8"/><rect x="53.8" y="57.9" width="2.6" height="2.6" fill="#a04020"/><rect x="42.6" y="73.7" width="0.9" height="0.9" fill="#7a2810"/><rect x="70.8" y="2.4" width="2.2" height="2.2" fill="#f0b8a0"/><rect x="48.5" y="23.9" width="2.0" height="2.0" fill="#f4cc90"/><rect x="61.7" y="10.2" width="2.5" height="2.5" fill="#f4cc90"/><rect x="66.8" y="36.4" width="2.2" height="2.2" fill="#7a2810"/><rect x="21.7" y="18.5" width="2.0" height="2.0" fill="#e8a070"/><rect x="6.9" y="63.1" width="0.9" height="0.9" fill="#e8a070"/><rect x="72.3" y="43.0" width="1.6" height="1.6" fill="#a04020"/><rect x="51.8" y="24.2" width="2.3" height="2.3" fill="#c86040"/><rect x="52.8" y="45.1" width="2.4" height="2.4" fill="#e8a070"/><rect x="80.7" y="5.5" width="1.3" height="1.3" fill="#a04020"/><rect x="22.0" y="5.3" width="1.3" height="1.3" fill="#f0b8a0"/><rect x="28.9" y="58.4" width="2.3" height="2.3" fill="#c86040"/><rect x="71.8" y="3.8" width="1.0" height="1.0" fill="#8a3018"/><rect x="12.2" y="48.1" width="2.0" height="2.0" fill="#a04020"/><rect x="16.7" y="13.0" width="2.2" height="2.2" fill="#f4cc90"/><rect x="32.8" y="38.8" width="0.9" height="0.9" fill="#a04020"/><rect x="68.0" y="16.0" width="2.2" height="2.2" fill="#7a2810"/><rect x="64.8" y="8.4" width="1.1" height="1.1" fill="#a04020"/><rect x="46.6" y="23.3" width="2.3" height="2.3" fill="#f8dca8"/><rect x="15.2" y="14.2" width="2.1" height="2.1" fill="#a04020"/><rect x="73.4" y="38.5" width="1.2" height="1.2" fill="#f8dca8"/><rect x="18.7" y="37.3" width="1.6" height="1.6" fill="#8a3018"/><rect x="73.4" y="17.8" width="1.4" height="1.4" fill="#c86040"/><rect x="73.0" y="49.3" width="1.2" height="1.2" fill="#8a3018"/><rect x="37.2" y="59.3" width="1.3" height="1.3" fill="#a04020"/><rect x="71.1" y="64.5" width="1.8" height="1.8" fill="#c86040"/><rect x="57.9" y="42.9" width="1.6" height="1.6" fill="#8a3018"/><rect x="24.5" y="33.7" width="1.8" height="1.8" fill="#f8dca8"/><rect x="10.0" y="74.7" width="1.9" height="1.9" fill="#f4cc90"/><rect x="18.8" y="68.2" width="2.5" height="2.5" fill="#fae8c0"/><rect x="8.1" y="36.1" width="2.4" height="2.4" fill="#7a2810"/><rect x="2.2" y="29.7" width="2.3" height="2.3" fill="#f0b8a0"/><rect x="34.8" y="57.3" width="1.1" height="1.1" fill="#e8a070"/><rect x="2.5" y="74.7" width="1.3" height="1.3" fill="#c86040"/><rect x="39.0" y="53.8" width="1.4" height="1.4" fill="#a04020"/><rect x="66.5" y="27.7" width="1.9" height="1.9" fill="#8a3018"/><rect x="78.1" y="24.3" width="1.0" height="1.0" fill="#fae8c0"/><rect x="9.9" y="66.4" width="2.1" height="2.1" fill="#e8a070"/><rect x="52.4" y="65.8" width="2.3" height="2.3" fill="#7a2810"/><rect x="4.2" y="26.5" width="2.3" height="2.3" fill="#c86040"/><rect x="16.9" y="57.0" width="1.4" height="1.4" fill="#fae8c0"/><rect x="45.4" y="48.4" width="1.2" height="1.2" fill="#fae8c0"/><rect x="6.9" y="45.0" width="1.7" height="1.7" fill="#f0b8a0"/><rect x="80.1" y="30.0" width="2.5" height="2.5" fill="#f0b8a0"/><rect x="45.4" y="24.3" width="1.3" height="1.3" fill="#f8dca8"/><rect x="43.0" y="44.7" width="1.7" height="1.7" fill="#fae8c0"/><rect x="66.0" y="62.5" width="1.1" height="1.1" fill="#8a3018"/><rect x="20.0" y="39.0" width="1.7" height="1.7" fill="#7a2810"/><rect x="49.1" y="30.6" width="1.6" height="1.6" fill="#f0b8a0"/><rect x="25.0" y="31.2" width="1.5" height="1.5" fill="#fae8c0"/><rect x="6.5" y="63.4" width="1.9" height="1.9" fill="#c86040"/><rect x="73.0" y="6.1" width="2.5" height="2.5" fill="#7a2810"/><rect x="21.6" y="35.8" width="1.1" height="1.1" fill="#f8dca8"/><rect x="37.7" y="43.9" width="1.9" height="1.9" fill="#e8a070"/><rect x="13.5" y="8.3" width="1.5" height="1.5" fill="#e8a070"/><rect x="17.6" y="33.7" width="0.9" height="0.9" fill="#fae8c0"/><rect x="56.3" y="22.5" width="1.1" height="1.1" fill="#f8dca8"/><rect x="60.0" y="3.2" width="1.6" height="1.6" fill="#7a2810"/><rect x="50.8" y="28.9" width="2.5" height="2.5" fill="#8a3018"/><rect x="12.8" y="0.4" width="2.5" height="2.5" fill="#7a2810"/><rect x="37.4" y="18.8" width="2.3" height="2.3" fill="#f4cc90"/><rect x="53.5" y="8.7" width="1.9" height="1.9" fill="#c86040"/><rect x="51.9" y="23.8" width="2.0" height="2.0" fill="#fae8c0"/><rect x="40.7" y="57.9" width="1.2" height="1.2" fill="#8a3018"/><rect x="73.0" y="72.5" width="0.9" height="0.9" fill="#f8dca8"/><rect x="67.9" y="44.7" width="1.0" height="1.0" fill="#7a2810"/><rect x="0.6" y="65.4" width="1.4" height="1.4" fill="#f0b8a0"/><rect x="11.3" y="31.0" width="1.2" height="1.2" fill="#f0b8a0"/><rect x="7.9" y="5.7" width="1.1" height="1.1" fill="#8a3018"/><rect x="20.5" y="24.9" width="1.7" height="1.7" fill="#f0b8a0"/><rect x="3.9" y="17.4" width="1.0" height="1.0" fill="#a04020"/><rect x="39.5" y="66.4" width="1.3" height="1.3" fill="#f4cc90"/><rect x="69.5" y="63.8" width="1.2" height="1.2" fill="#c86040"/><rect x="31.0" y="25.6" width="1.1" height="1.1" fill="#f4cc90"/><rect x="36.7" y="26.3" width="1.2" height="1.2" fill="#f8dca8"/><rect x="7.8" y="73.8" width="1.7" height="1.7" fill="#fae8c0"/><rect x="51.9" y="40.1" width="1.8" height="1.8" fill="#7a2810"/><rect x="5.5" y="8.0" width="1.0" height="1.0" fill="#f8dca8"/><rect x="20.9" y="70.2" width="1.2" height="1.2" fill="#f4cc90"/><rect x="81.0" y="56.5" width="2.2" height="2.2" fill="#f0b8a0"/><rect x="9.1" y="75.4" width="1.2" height="1.2" fill="#c86040"/><rect x="52.7" y="24.8" width="2.5" height="2.5" fill="#f8dca8"/><rect x="6.3" y="65.6" width="1.6" height="1.6" fill="#8a3018"/><rect x="20.4" y="21.6" width="1.4" height="1.4" fill="#c86040"/><rect x="37.7" y="69.4" width="1.5" height="1.5" fill="#fae8c0"/><rect x="27.9" y="44.3" width="1.9" height="1.9" fill="#a04020"/><rect x="71.3" y="54.4" width="1.2" height="1.2" fill="#fae8c0"/><rect x="48.0" y="37.2" width="1.9" height="1.9" fill="#fae8c0"/><rect x="59.0" y="53.3" width="2.5" height="2.5" fill="#a04020"/><rect x="39.5" y="9.0" width="1.7" height="1.7" fill="#f4cc90"/><rect x="28.2" y="11.5" width="1.5" height="1.5" fill="#fae8c0"/><rect x="0.2" y="18.1" width="1.5" height="1.5" fill="#fae8c0"/><rect x="14.9" y="34.2" width="1.1" height="1.1" fill="#f4cc90"/><rect x="26.2" y="75.9" width="1.9" height="1.9" fill="#f0b8a0"/><rect x="18.0" y="23.9" width="1.4" height="1.4" fill="#a04020"/><rect x="65.6" y="17.9" width="2.6" height="2.6" fill="#a04020"/><rect x="21.2" y="76.8" width="1.1" height="1.1" fill="#f4cc90"/><rect x="42.8" y="37.6" width="1.3" height="1.3" fill="#c86040"/><rect x="23.4" y="22.0" width="2.3" height="2.3" fill="#a04020"/><rect x="74.7" y="9.1" width="1.6" height="1.6" fill="#f0b8a0"/><rect x="78.7" y="55.6" width="1.2" height="1.2" fill="#f0b8a0"/><rect x="37.6" y="21.0" width="2.0" height="2.0" fill="#8a3018"/><rect x="32.7" y="0.8" width="2.3" height="2.3" fill="#f0b8a0"/><rect x="22.7" y="50.7" width="1.3" height="1.3" fill="#c86040"/><rect x="1.5" y="56.9" width="1.2" height="1.2" fill="#f8dca8"/><rect x="50.4" y="5.8" width="0.9" height="0.9" fill="#7a2810"/><rect x="79.7" y="74.4" width="2.2" height="2.2" fill="#f8dca8"/><rect x="7.6" y="59.1" width="2.0" height="2.0" fill="#f0b8a0"/><rect x="28.8" y="16.4" width="1.3" height="1.3" fill="#e8a070"/><rect x="49.9" y="49.8" width="2.0" height="2.0" fill="#8a3018"/><rect x="61.9" y="38.3" width="2.1" height="2.1" fill="#f4cc90"/><rect x="79.6" y="58.3" width="1.5" height="1.5" fill="#8a3018"/><rect x="20.9" y="41.0" width="1.4" height="1.4" fill="#a04020"/><rect x="2.4" y="42.3" width="1.1" height="1.1" fill="#f0b8a0"/><rect x="7.9" y="34.2" width="1.4" height="1.4" fill="#e8a070"/><rect x="7.0" y="21.6" width="1.0" height="1.0" fill="#7a2810"/><rect x="23.0" y="17.3" width="2.6" height="2.6" fill="#c86040"/><rect x="12.8" y="18.5" width="1.2" height="1.2" fill="#c86040"/><rect x="5.2" y="1.2" width="1.8" height="1.8" fill="#7a2810"/><rect x="23.4" y="44.8" width="2.1" height="2.1" fill="#7a2810"/><rect x="22.6" y="35.0" width="2.0" height="2.0" fill="#8a3018"/><rect x="69.4" y="32.6" width="1.1" height="1.1" fill="#f8dca8"/><rect x="12.6" y="24.1" width="1.0" height="1.0" fill="#fae8c0"/><rect x="41.7" y="58.9" width="1.3" height="1.3" fill="#c86040"/><rect x="58.4" y="0.5" width="0.9" height="0.9" fill="#e8a070"/><rect x="7.4" y="45.5" width="1.4" height="1.4" fill="#7a2810"/><rect x="77.9" y="10.1" width="2.1" height="2.1" fill="#c86040"/><rect x="68.4" y="13.5" width="1.1" height="1.1" fill="#f8dca8"/><rect x="46.1" y="52.0" width="2.0" height="2.0" fill="#e8a070"/><rect x="25.3" y="16.0" width="1.8" height="1.8" fill="#fae8c0"/><rect x="29.3" y="66.3" width="2.3" height="2.3" fill="#f0b8a0"/><rect x="53.2" y="57.7" width="1.5" height="1.5" fill="#c86040"/><rect x="10.6" y="69.6" width="2.0" height="2.0" fill="#fae8c0"/><rect x="60.8" y="32.2" width="1.5" height="1.5" fill="#e8a070"/><rect x="8.1" y="67.4" width="1.6" height="1.6" fill="#e8a070"/><rect x="37.5" y="65.5" width="1.8" height="1.8" fill="#c86040"/><rect x="24.3" y="35.9" width="1.0" height="1.0" fill="#fae8c0"/><rect x="13.2" y="70.0" width="1.0" height="1.0" fill="#8a3018"/><rect x="70.4" y="28.8" width="1.8" height="1.8" fill="#c86040"/><rect x="0.4" y="64.4" width="2.4" height="2.4" fill="#f8dca8"/><rect x="25.7" y="48.1" width="1.4" height="1.4" fill="#7a2810"/><rect x="19.3" y="61.8" width="1.6" height="1.6" fill="#c86040"/><rect x="64.5" y="15.5" width="2.2" height="2.2" fill="#f8dca8"/><rect x="70.8" y="38.7" width="2.2" height="2.2" fill="#f8dca8"/><rect x="10.8" y="59.7" width="2.5" height="2.5" fill="#fae8c0"/><rect x="60.9" y="35.2" width="2.0" height="2.0" fill="#f4cc90"/><rect x="42.2" y="36.4" width="1.1" height="1.1" fill="#7a2810"/><rect x="58.1" y="22.4" width="1.0" height="1.0" fill="#a04020"/><rect x="73.9" y="5.8" width="1.3" height="1.3" fill="#7a2810"/><rect x="74.4" y="57.7" width="1.1" height="1.1" fill="#7a2810"/><rect x="78.5" y="51.7" width="2.1" height="2.1" fill="#8a3018"/><rect x="68.1" y="54.7" width="2.2" height="2.2" fill="#7a2810"/><rect x="27.6" y="46.0" width="1.1" height="1.1" fill="#fae8c0"/><rect x="52.1" y="27.6" width="2.5" height="2.5" fill="#a04020"/><rect x="46.5" y="66.6" width="2.1" height="2.1" fill="#a04020"/><rect x="39.5" y="42.6" width="1.5" height="1.5" fill="#f0b8a0"/><rect x="52.5" y="50.6" width="2.3" height="2.3" fill="#8a3018"/><rect x="25.7" y="24.8" width="2.4" height="2.4" fill="#c86040"/><rect x="33.5" y="57.4" width="1.4" height="1.4" fill="#fae8c0"/><rect x="50.6" y="64.8" width="1.8" height="1.8" fill="#a04020"/><rect x="12.9" y="27.4" width="1.9" height="1.9" fill="#c86040"/><rect x="68.4" y="6.6" width="1.9" height="1.9" fill="#c86040"/><rect x="66.5" y="23.4" width="2.4" height="2.4" fill="#f8dca8"/><rect x="44.0" y="1.8" width="1.0" height="1.0" fill="#f0b8a0"/><rect x="72.0" y="55.8" width="1.8" height="1.8" fill="#f0b8a0"/><rect x="50.5" y="73.7" width="1.0" height="1.0" fill="#f8dca8"/><rect x="46.1" y="37.9" width="1.6" height="1.6" fill="#c86040"/><rect x="30.3" y="56.4" width="2.4" height="2.4" fill="#7a2810"/><rect x="6.2" y="73.5" width="1.6" height="1.6" fill="#f8dca8"/><rect x="62.7" y="29.7" width="1.2" height="1.2" fill="#8a3018"/><rect x="30.9" y="28.5" width="2.3" height="2.3" fill="#8a3018"/><rect x="28.4" y="8.3" width="1.8" height="1.8" fill="#e8a070"/><rect x="15.8" y="45.0" width="1.8" height="1.8" fill="#c86040"/><rect x="35.2" y="74.9" width="2.0" height="2.0" fill="#7a2810"/><rect x="80.0" y="28.9" width="1.3" height="1.3" fill="#f0b8a0"/><rect x="32.8" y="53.8" width="2.4" height="2.4" fill="#8a3018"/><rect x="6.0" y="42.0" width="2.4" height="2.4" fill="#a04020"/><rect x="9.4" y="64.8" width="1.7" height="1.7" fill="#fae8c0"/><rect x="63.9" y="21.0" width="1.3" height="1.3" fill="#a04020"/><rect x="81.3" y="62.0" width="1.9" height="1.9" fill="#f0b8a0"/><rect x="62.1" y="74.6" width="1.8" height="1.8" fill="#fae8c0"/><rect x="59.4" y="37.9" width="2.4" height="2.4" fill="#8a3018"/><rect x="0.8" y="14.5" width="2.0" height="2.0" fill="#7a2810"/><rect x="30.4" y="48.2" width="1.7" height="1.7" fill="#f4cc90"/><rect x="26.1" y="22.2" width="1.5" height="1.5" fill="#f8dca8"/><rect x="74.8" y="20.3" width="1.8" height="1.8" fill="#a04020"/><rect x="69.3" y="46.8" width="1.6" height="1.6" fill="#c86040"/><rect x="18.7" y="61.5" width="1.6" height="1.6" fill="#8a3018"/><rect x="3.3" y="53.0" width="2.3" height="2.3" fill="#8a3018"/><rect x="50.9" y="66.7" width="1.8" height="1.8" fill="#a04020"/><rect x="6.2" y="46.7" width="2.2" height="2.2" fill="#f8dca8"/><rect x="39.1" y="67.2" width="2.1" height="2.1" fill="#e8a070"/><rect x="22.4" y="58.1" width="2.3" height="2.3" fill="#8a3018"/><rect x="13.1" y="41.4" width="1.8" height="1.8" fill="#a04020"/><rect x="82.3" y="49.4" width="1.0" height="1.0" fill="#e8a070"/><rect x="2.2" y="36.6" width="1.1" height="1.1" fill="#c86040"/><rect x="55.2" y="64.6" width="2.0" height="2.0" fill="#e8a070"/><rect x="69.7" y="21.2" width="1.8" height="1.8" fill="#c86040"/><rect x="82.5" y="54.2" width="1.0" height="1.0" fill="#e8a070"/><rect x="47.3" y="7.5" width="1.9" height="1.9" fill="#f4cc90"/><rect x="1.8" y="62.7" width="1.2" height="1.2" fill="#a04020"/><rect x="74.0" y="20.5" width="2.1" height="2.1" fill="#e8a070"/><rect x="20.1" y="39.9" width="2.0" height="2.0" fill="#fae8c0"/><rect x="10.3" y="50.0" width="1.2" height="1.2" fill="#fae8c0"/><rect x="51.1" y="64.1" width="0.9" height="0.9" fill="#fae8c0"/><rect x="40.4" y="70.3" width="1.2" height="1.2" fill="#f0b8a0"/><rect x="1.7" y="57.6" width="1.3" height="1.3" fill="#a04020"/><rect x="37.6" y="28.9" width="2.2" height="2.2" fill="#e8a070"/><rect x="80.4" y="16.8" width="1.5" height="1.5" fill="#f8dca8"/><rect x="6.9" y="6.9" width="1.0" height="1.0" fill="#f0b8a0"/><rect x="50.1" y="71.1" width="1.3" height="1.3" fill="#f8dca8"/><rect x="82.4" y="53.0" width="2.5" height="2.5" fill="#f4cc90"/><rect x="25.8" y="13.8" width="1.4" height="1.4" fill="#f4cc90"/><rect x="37.5" y="72.5" width="2.6" height="2.6" fill="#f8dca8"/><rect x="74.5" y="65.3" width="2.3" height="2.3" fill="#c86040"/><rect x="47.1" y="25.9" width="2.3" height="2.3" fill="#fae8c0"/><rect x="31.2" y="2.8" width="2.1" height="2.1" fill="#8a3018"/><rect x="29.0" y="0.3" width="1.6" height="1.6" fill="#a04020"/><rect x="14.5" y="48.2" width="1.1" height="1.1" fill="#fae8c0"/><rect x="6.7" y="72.3" width="1.2" height="1.2" fill="#f8dca8"/><rect x="48.7" y="29.9" width="2.2" height="2.2" fill="#8a3018"/><rect x="23.2" y="58.6" width="2.2" height="2.2" fill="#fae8c0"/><rect x="47.1" y="57.0" width="2.1" height="2.1" fill="#fae8c0"/><rect x="55.4" y="55.0" width="1.7" height="1.7" fill="#f4cc90"/><rect x="26.1" y="42.5" width="1.9" height="1.9" fill="#7a2810"/><rect x="15.3" y="51.5" width="1.1" height="1.1" fill="#f0b8a0"/><rect x="43.7" y="23.6" width="1.2" height="1.2" fill="#f8dca8"/><rect x="19.1" y="70.1" width="1.7" height="1.7" fill="#f0b8a0"/><rect x="16.8" y="45.0" width="1.2" height="1.2" fill="#7a2810"/><rect x="23.0" y="23.5" width="1.3" height="1.3" fill="#fae8c0"/><rect x="16.4" y="53.5" width="2.3" height="2.3" fill="#f0b8a0"/><rect x="62.8" y="71.8" width="2.5" height="2.5" fill="#7a2810"/><rect x="45.3" y="24.4" width="1.3" height="1.3" fill="#e8a070"/><rect x="33.1" y="14.8" width="2.2" height="2.2" fill="#f4cc90"/><rect x="29.2" y="51.3" width="1.0" height="1.0" fill="#e8a070"/><rect x="80.5" y="8.8" width="2.1" height="2.1" fill="#f8dca8"/><rect x="11.7" y="47.0" width="1.2" height="1.2" fill="#f8dca8"/><rect x="60.0" y="49.3" width="1.4" height="1.4" fill="#f8dca8"/><rect x="66.2" y="74.7" width="1.2" height="1.2" fill="#fae8c0"/><rect x="27.7" y="13.5" width="1.6" height="1.6" fill="#c86040"/><rect x="42.0" y="52.6" width="1.3" height="1.3" fill="#f4cc90"/><rect x="21.4" y="13.3" width="1.7" height="1.7" fill="#c86040"/><rect x="74.4" y="58.3" width="1.7" height="1.7" fill="#7a2810"/><rect x="55.2" y="26.3" width="1.2" height="1.2" fill="#7a2810"/><rect x="39.1" y="66.3" width="2.4" height="2.4" fill="#7a2810"/><rect x="44.9" y="5.8" width="1.9" height="1.9" fill="#e8a070"/><rect x="61.1" y="54.2" width="1.8" height="1.8" fill="#a04020"/><rect x="14.2" y="74.2" width="2.6" height="2.6" fill="#f8dca8"/><rect x="11.8" y="58.6" width="1.4" height="1.4" fill="#f4cc90"/><rect x="62.8" y="74.4" width="2.3" height="2.3" fill="#c86040"/><rect x="66.5" y="74.9" width="1.0" height="1.0" fill="#f4cc90"/><rect x="35.4" y="53.9" width="1.4" height="1.4" fill="#f0b8a0"/><rect x="68.7" y="21.5" width="1.0" height="1.0" fill="#7a2810"/><rect x="67.7" y="45.4" width="1.4" height="1.4" fill="#a04020"/><rect x="72.6" y="73.7" width="2.2" height="2.2" fill="#f4cc90"/><rect x="49.8" y="49.0" width="2.5" height="2.5" fill="#fae8c0"/><rect x="9.8" y="9.3" width="2.1" height="2.1" fill="#c86040"/><rect x="6.6" y="30.1" width="2.1" height="2.1" fill="#fae8c0"/><rect x="73.3" y="58.8" width="1.8" height="1.8" fill="#8a3018"/><rect x="74.8" y="47.2" width="2.4" height="2.4" fill="#f0b8a0"/><rect x="9.0" y="42.2" width="2.2" height="2.2" fill="#f0b8a0"/><rect x="18.2" y="6.2" width="2.5" height="2.5" fill="#f0b8a0"/><rect x="2.7" y="64.1" width="2.1" height="2.1" fill="#fae8c0"/><rect x="21.5" y="21.8" width="2.0" height="2.0" fill="#8a3018"/><rect x="18.7" y="19.2" width="1.8" height="1.8" fill="#8a3018"/><rect x="45.3" y="69.4" width="2.6" height="2.6" fill="#c86040"/><rect x="48.1" y="45.6" width="1.1" height="1.1" fill="#7a2810"/><rect x="57.3" y="7.2" width="2.0" height="2.0" fill="#f8dca8"/><rect x="19.4" y="76.9" width="2.0" height="2.0" fill="#f0b8a0"/><rect x="7.9" y="12.7" width="1.0" height="1.0" fill="#c86040"/><rect x="36.4" y="13.6" width="1.3" height="1.3" fill="#fae8c0"/><rect x="72.4" y="28.9" width="1.9" height="1.9" fill="#f8dca8"/><rect x="11.1" y="43.2" width="2.5" height="2.5" fill="#8a3018"/><rect x="79.2" y="8.4" width="2.0" height="2.0" fill="#f8dca8"/><rect x="45.3" y="5.0" width="1.2" height="1.2" fill="#f8dca8"/><rect x="64.4" y="10.2" width="1.1" height="1.1" fill="#fae8c0"/><rect x="36.0" y="1.9" width="0.9" height="0.9" fill="#f8dca8"/><rect x="31.0" y="52.2" width="2.3" height="2.3" fill="#8a3018"/><rect x="51.2" y="9.1" width="2.6" height="2.6" fill="#e8a070"/><rect x="73.4" y="33.9" width="1.9" height="1.9" fill="#a04020"/><rect x="70.8" y="18.9" width="2.1" height="2.1" fill="#8a3018"/><rect x="65.4" y="53.2" width="2.0" height="2.0" fill="#a04020"/><rect x="39.1" y="66.7" width="1.2" height="1.2" fill="#fae8c0"/><rect x="22.1" y="52.0" width="2.6" height="2.6" fill="#e8a070"/><rect x="30.6" y="24.6" width="2.1" height="2.1" fill="#e8a070"/><rect x="47.0" y="57.8" width="1.8" height="1.8" fill="#8a3018"/><rect x="35.5" y="30.4" width="1.7" height="1.7" fill="#e8a070"/><rect x="25.1" y="52.0" width="1.5" height="1.5" fill="#f4cc90"/><rect x="34.2" y="12.9" width="1.7" height="1.7" fill="#fae8c0"/><rect x="46.8" y="33.8" width="1.5" height="1.5" fill="#7a2810"/><rect x="0.6" y="4.8" width="1.5" height="1.5" fill="#7a2810"/><rect x="12.4" y="41.4" width="1.2" height="1.2" fill="#a04020"/><rect x="18.9" y="75.5" width="1.4" height="1.4" fill="#f4cc90"/><rect x="70.8" y="65.7" width="2.1" height="2.1" fill="#f8dca8"/><rect x="55.5" y="41.8" width="1.0" height="1.0" fill="#f0b8a0"/><rect x="20.6" y="18.1" width="1.2" height="1.2" fill="#c86040"/><rect x="42.3" y="62.5" width="2.5" height="2.5" fill="#a04020"/><rect x="9.9" y="18.6" width="2.2" height="2.2" fill="#fae8c0"/><rect x="11.3" y="76.1" width="2.1" height="2.1" fill="#c86040"/><rect x="32.8" y="49.3" width="1.1" height="1.1" fill="#f8dca8"/><rect x="81.6" y="64.3" width="1.2" height="1.2" fill="#f4cc90"/><rect x="40.0" y="52.3" width="1.8" height="1.8" fill="#a04020"/><rect x="45.1" y="36.7" width="1.5" height="1.5" fill="#e8a070"/><rect x="3.4" y="5.5" width="1.2" height="1.2" fill="#8a3018"/><rect x="72.0" y="65.1" width="2.4" height="2.4" fill="#f4cc90"/><rect x="6.5" y="30.8" width="1.0" height="1.0" fill="#c86040"/><rect x="17.5" y="63.5" width="1.5" height="1.5" fill="#c86040"/><rect x="35.5" y="63.4" width="2.1" height="2.1" fill="#f4cc90"/><rect x="35.3" y="34.3" width="1.1" height="1.1" fill="#7a2810"/><rect x="12.0" y="27.5" width="1.8" height="1.8" fill="#a04020"/><rect x="38.1" y="71.0" width="1.4" height="1.4" fill="#fae8c0"/><rect x="64.8" y="21.4" width="2.2" height="2.2" fill="#fae8c0"/><rect x="22.1" y="26.3" width="1.7" height="1.7" fill="#f8dca8"/><rect x="37.2" y="7.3" width="1.5" height="1.5" fill="#f0b8a0"/><rect x="21.1" y="60.6" width="2.2" height="2.2" fill="#7a2810"/><rect x="73.8" y="24.5" width="1.7" height="1.7" fill="#a04020"/><rect x="53.1" y="43.7" width="1.3" height="1.3" fill="#f0b8a0"/><path d="M0 53c2-2 5-3 6 0c1 2-1 4 1 6c2 2 4 1 5 3c2 1 3 2 4 4c3-1 6 0 7 2c1 2 2 5 5 9H0z" fill="#fff"/><path d="M3 58c2-1 4 0 4 2M2 64c2 1 4 0 5 2M4 70l3 2" stroke="#6a2010" stroke-width="1.3" fill="none"/><path d="M33 71c2-1 3 1 4 2c1 1 2 2 2 4h-5z" fill="#fff"/></svg>
<svg class="a" style="left:1537px;top:319px" width="67" height="91" viewBox="0 0 67 91"><rect width="67" height="91" fill="#c9a43a"/><rect x="15.8" y="9.4" width="1.4" height="1.4" fill="#a07820"/><rect x="6.0" y="1.8" width="1.6" height="1.6" fill="#7a8a30"/><rect x="53.6" y="69.6" width="1.1" height="1.1" fill="#d0701a"/><rect x="18.5" y="15.7" width="0.9" height="0.9" fill="#e8c050"/><rect x="63.2" y="2.3" width="1.7" height="1.7" fill="#7a8a30"/><rect x="53.6" y="17.6" width="1.2" height="1.2" fill="#d0701a"/><rect x="5.8" y="55.1" width="1.7" height="1.7" fill="#e8c050"/><rect x="11.9" y="43.1" width="0.9" height="0.9" fill="#7a8a30"/><rect x="0.5" y="26.6" width="1.8" height="1.8" fill="#7a8a30"/><rect x="56.8" y="46.3" width="1.4" height="1.4" fill="#7a8a30"/><rect x="28.9" y="14.7" width="1.2" height="1.2" fill="#8c8a2a"/><rect x="5.4" y="42.1" width="2.2" height="2.2" fill="#c0a030"/><rect x="47.0" y="13.2" width="1.7" height="1.7" fill="#f2d870"/><rect x="27.7" y="18.4" width="1.7" height="1.7" fill="#7a8a30"/><rect x="12.3" y="39.7" width="1.6" height="1.6" fill="#e8c050"/><rect x="60.6" y="9.2" width="0.9" height="0.9" fill="#e8c050"/><rect x="18.6" y="53.0" width="2.0" height="2.0" fill="#f2d870"/><rect x="22.2" y="16.2" width="1.4" height="1.4" fill="#8c8a2a"/><rect x="23.9" y="7.5" width="2.2" height="2.2" fill="#7a8a30"/><rect x="49.2" y="87.3" width="0.8" height="0.8" fill="#7a8a30"/><rect x="21.6" y="13.9" width="1.7" height="1.7" fill="#f2d870"/><rect x="19.7" y="17.4" width="1.4" height="1.4" fill="#a07820"/><rect x="16.8" y="54.5" width="1.0" height="1.0" fill="#8c8a2a"/><rect x="24.3" y="41.4" width="1.3" height="1.3" fill="#d0701a"/><rect x="66.8" y="52.0" width="1.4" height="1.4" fill="#e8c050"/><rect x="28.4" y="18.9" width="0.9" height="0.9" fill="#8c8a2a"/><rect x="49.4" y="54.2" width="2.2" height="2.2" fill="#8c8a2a"/><rect x="36.6" y="53.0" width="1.3" height="1.3" fill="#8c8a2a"/><rect x="8.2" y="48.2" width="1.9" height="1.9" fill="#f8e890"/><rect x="43.7" y="18.2" width="1.1" height="1.1" fill="#c0a030"/><rect x="27.5" y="3.4" width="1.4" height="1.4" fill="#e8c050"/><rect x="43.4" y="38.9" width="1.1" height="1.1" fill="#e8c050"/><rect x="2.1" y="23.1" width="1.1" height="1.1" fill="#e8c050"/><rect x="51.7" y="38.0" width="1.2" height="1.2" fill="#d0701a"/><rect x="3.4" y="84.5" width="1.6" height="1.6" fill="#f8e890"/><rect x="64.5" y="59.4" width="2.0" height="2.0" fill="#8c8a2a"/><rect x="33.1" y="8.5" width="1.1" height="1.1" fill="#a07820"/><rect x="22.6" y="59.8" width="1.9" height="1.9" fill="#d0701a"/><rect x="54.6" y="48.1" width="1.7" height="1.7" fill="#7a8a30"/><rect x="22.7" y="35.7" width="1.5" height="1.5" fill="#7a8a30"/><rect x="64.4" y="60.8" width="0.9" height="0.9" fill="#a07820"/><rect x="51.4" y="24.5" width="2.0" height="2.0" fill="#a07820"/><rect x="46.1" y="42.3" width="1.5" height="1.5" fill="#f8e890"/><rect x="62.1" y="19.9" width="0.8" height="0.8" fill="#a07820"/><rect x="0.9" y="79.8" width="1.0" height="1.0" fill="#f8e890"/><rect x="58.8" y="50.1" width="2.0" height="2.0" fill="#e8c050"/><rect x="10.8" y="55.4" width="1.9" height="1.9" fill="#c0a030"/><rect x="61.3" y="40.0" width="0.9" height="0.9" fill="#f2d870"/><rect x="32.8" y="78.7" width="1.7" height="1.7" fill="#a07820"/><rect x="2.8" y="7.3" width="2.0" height="2.0" fill="#8c8a2a"/><rect x="19.9" y="31.6" width="0.9" height="0.9" fill="#c0a030"/><rect x="25.5" y="71.7" width="1.2" height="1.2" fill="#e8c050"/><rect x="50.8" y="77.8" width="1.4" height="1.4" fill="#f2d870"/><rect x="7.7" y="56.5" width="2.0" height="2.0" fill="#f8e890"/><rect x="27.9" y="64.7" width="1.4" height="1.4" fill="#e8c050"/><rect x="42.7" y="84.6" width="1.5" height="1.5" fill="#f2d870"/><rect x="53.5" y="15.2" width="2.0" height="2.0" fill="#a07820"/><rect x="47.4" y="29.7" width="2.0" height="2.0" fill="#7a8a30"/><rect x="36.3" y="82.3" width="1.8" height="1.8" fill="#8c8a2a"/><rect x="43.4" y="11.0" width="1.0" height="1.0" fill="#c0a030"/><rect x="35.3" y="47.4" width="1.4" height="1.4" fill="#7a8a30"/><rect x="23.9" y="69.8" width="2.2" height="2.2" fill="#8c8a2a"/><rect x="45.3" y="55.5" width="1.2" height="1.2" fill="#c0a030"/><rect x="52.4" y="51.7" width="2.1" height="2.1" fill="#c0a030"/><rect x="41.1" y="40.2" width="1.0" height="1.0" fill="#d0701a"/><rect x="66.1" y="30.9" width="1.4" height="1.4" fill="#a07820"/><rect x="45.3" y="56.6" width="1.2" height="1.2" fill="#d0701a"/><rect x="13.2" y="72.2" width="1.7" height="1.7" fill="#f2d870"/><rect x="5.2" y="58.8" width="2.1" height="2.1" fill="#d0701a"/><rect x="43.8" y="29.7" width="1.2" height="1.2" fill="#8c8a2a"/><rect x="40.5" y="47.7" width="1.9" height="1.9" fill="#f2d870"/><rect x="53.7" y="73.5" width="2.1" height="2.1" fill="#a07820"/><rect x="12.2" y="89.8" width="1.7" height="1.7" fill="#f2d870"/><rect x="50.9" y="88.1" width="1.0" height="1.0" fill="#c0a030"/><rect x="45.3" y="67.8" width="1.7" height="1.7" fill="#7a8a30"/><rect x="57.1" y="62.6" width="2.0" height="2.0" fill="#e8c050"/><rect x="60.1" y="64.0" width="1.2" height="1.2" fill="#e8c050"/><rect x="50.0" y="48.9" width="1.5" height="1.5" fill="#c0a030"/><rect x="60.2" y="36.4" width="1.4" height="1.4" fill="#d0701a"/><rect x="19.0" y="37.5" width="0.8" height="0.8" fill="#a07820"/><rect x="60.1" y="41.7" width="1.6" height="1.6" fill="#d0701a"/><rect x="27.1" y="35.4" width="0.8" height="0.8" fill="#f2d870"/><rect x="30.7" y="87.8" width="1.7" height="1.7" fill="#d0701a"/><rect x="40.5" y="28.4" width="0.9" height="0.9" fill="#7a8a30"/><rect x="32.4" y="58.2" width="1.5" height="1.5" fill="#f2d870"/><rect x="10.0" y="21.7" width="1.2" height="1.2" fill="#8c8a2a"/><rect x="10.9" y="71.9" width="1.8" height="1.8" fill="#7a8a30"/><rect x="1.2" y="22.3" width="1.9" height="1.9" fill="#e8c050"/><rect x="2.1" y="28.8" width="1.0" height="1.0" fill="#8c8a2a"/><rect x="58.9" y="58.5" width="1.7" height="1.7" fill="#a07820"/><rect x="49.0" y="59.6" width="2.1" height="2.1" fill="#f2d870"/><rect x="37.5" y="63.1" width="1.8" height="1.8" fill="#a07820"/><rect x="33.7" y="14.0" width="2.0" height="2.0" fill="#c0a030"/><rect x="34.0" y="34.2" width="1.0" height="1.0" fill="#7a8a30"/><rect x="34.5" y="48.9" width="1.2" height="1.2" fill="#f8e890"/><rect x="22.0" y="35.2" width="1.4" height="1.4" fill="#8c8a2a"/><rect x="18.7" y="61.5" width="1.2" height="1.2" fill="#a07820"/><rect x="5.7" y="10.6" width="1.7" height="1.7" fill="#8c8a2a"/><rect x="15.5" y="50.4" width="1.5" height="1.5" fill="#a07820"/><rect x="59.3" y="41.2" width="1.8" height="1.8" fill="#f8e890"/><rect x="22.5" y="15.7" width="1.5" height="1.5" fill="#e8c050"/><rect x="7.2" y="56.4" width="2.1" height="2.1" fill="#7a8a30"/><rect x="62.3" y="75.7" width="1.4" height="1.4" fill="#8c8a2a"/><rect x="55.0" y="19.3" width="1.6" height="1.6" fill="#7a8a30"/><rect x="52.6" y="43.5" width="2.0" height="2.0" fill="#f2d870"/><rect x="59.7" y="81.3" width="2.0" height="2.0" fill="#8c8a2a"/><rect x="40.5" y="48.0" width="2.2" height="2.2" fill="#d0701a"/><rect x="62.2" y="16.1" width="0.9" height="0.9" fill="#e8c050"/><rect x="2.6" y="61.5" width="1.3" height="1.3" fill="#a07820"/><rect x="46.7" y="10.6" width="2.2" height="2.2" fill="#8c8a2a"/><rect x="4.8" y="20.6" width="1.2" height="1.2" fill="#8c8a2a"/><rect x="59.7" y="88.6" width="0.8" height="0.8" fill="#a07820"/><rect x="14.3" y="22.7" width="1.8" height="1.8" fill="#d0701a"/><rect x="54.7" y="27.1" width="1.3" height="1.3" fill="#f8e890"/><rect x="2.3" y="37.5" width="2.2" height="2.2" fill="#7a8a30"/><rect x="37.5" y="25.7" width="1.1" height="1.1" fill="#f8e890"/><rect x="21.6" y="19.5" width="1.5" height="1.5" fill="#f8e890"/><rect x="62.4" y="25.1" width="1.9" height="1.9" fill="#f8e890"/><rect x="63.6" y="84.4" width="1.4" height="1.4" fill="#e8c050"/><rect x="17.2" y="46.5" width="0.8" height="0.8" fill="#7a8a30"/><rect x="40.8" y="61.5" width="1.7" height="1.7" fill="#d0701a"/><rect x="5.8" y="89.8" width="1.0" height="1.0" fill="#f2d870"/><rect x="47.0" y="85.0" width="1.2" height="1.2" fill="#e8c050"/><rect x="59.7" y="45.4" width="1.0" height="1.0" fill="#d0701a"/><rect x="0.5" y="51.9" width="1.1" height="1.1" fill="#f2d870"/><rect x="16.4" y="76.7" width="1.0" height="1.0" fill="#d0701a"/><rect x="19.9" y="51.6" width="1.7" height="1.7" fill="#f2d870"/><rect x="44.3" y="90.4" width="2.1" height="2.1" fill="#8c8a2a"/><rect x="50.6" y="72.9" width="1.7" height="1.7" fill="#7a8a30"/><rect x="2.3" y="29.5" width="1.3" height="1.3" fill="#d0701a"/><rect x="66.1" y="14.8" width="1.9" height="1.9" fill="#8c8a2a"/><rect x="64.1" y="86.6" width="1.8" height="1.8" fill="#8c8a2a"/><rect x="45.1" y="23.8" width="2.1" height="2.1" fill="#c0a030"/><rect x="7.0" y="18.2" width="1.0" height="1.0" fill="#c0a030"/><rect x="40.3" y="45.1" width="1.3" height="1.3" fill="#f8e890"/><rect x="49.8" y="76.3" width="1.9" height="1.9" fill="#8c8a2a"/><rect x="12.1" y="32.6" width="1.2" height="1.2" fill="#d0701a"/><rect x="38.4" y="17.7" width="1.7" height="1.7" fill="#d0701a"/><rect x="25.7" y="48.7" width="1.0" height="1.0" fill="#e8c050"/><rect x="12.8" y="31.7" width="2.2" height="2.2" fill="#e8c050"/><rect x="1.4" y="10.7" width="1.2" height="1.2" fill="#d0701a"/><rect x="62.9" y="45.3" width="0.9" height="0.9" fill="#7a8a30"/><rect x="53.6" y="73.0" width="1.0" height="1.0" fill="#f8e890"/><rect x="41.4" y="31.9" width="0.8" height="0.8" fill="#a07820"/><rect x="30.0" y="67.6" width="2.1" height="2.1" fill="#f8e890"/><rect x="14.2" y="30.1" width="1.6" height="1.6" fill="#8c8a2a"/><rect x="59.9" y="43.8" width="2.2" height="2.2" fill="#8c8a2a"/><rect x="12.1" y="56.0" width="1.6" height="1.6" fill="#8c8a2a"/><rect x="48.6" y="2.1" width="1.4" height="1.4" fill="#a07820"/><rect x="41.6" y="12.2" width="1.6" height="1.6" fill="#e8c050"/><rect x="29.2" y="28.6" width="1.7" height="1.7" fill="#a07820"/><rect x="48.9" y="84.5" width="2.0" height="2.0" fill="#d0701a"/><rect x="17.3" y="30.5" width="1.6" height="1.6" fill="#a07820"/><rect x="24.5" y="78.5" width="1.1" height="1.1" fill="#c0a030"/><rect x="55.5" y="6.7" width="1.7" height="1.7" fill="#e8c050"/><rect x="66.2" y="13.0" width="1.8" height="1.8" fill="#8c8a2a"/><rect x="36.1" y="31.5" width="2.1" height="2.1" fill="#8c8a2a"/><rect x="52.6" y="55.0" width="1.6" height="1.6" fill="#7a8a30"/><rect x="41.9" y="26.9" width="2.0" height="2.0" fill="#7a8a30"/><rect x="14.0" y="43.0" width="1.2" height="1.2" fill="#8c8a2a"/><rect x="59.5" y="26.2" width="1.4" height="1.4" fill="#8c8a2a"/><rect x="23.2" y="54.9" width="2.1" height="2.1" fill="#d0701a"/><rect x="4.8" y="39.4" width="0.9" height="0.9" fill="#f8e890"/><rect x="52.9" y="3.0" width="1.1" height="1.1" fill="#e8c050"/><rect x="54.8" y="18.4" width="2.1" height="2.1" fill="#f2d870"/><rect x="66.9" y="1.0" width="0.8" height="0.8" fill="#7a8a30"/><rect x="34.8" y="47.8" width="0.9" height="0.9" fill="#d0701a"/><rect x="44.7" y="57.4" width="1.5" height="1.5" fill="#8c8a2a"/><rect x="46.2" y="5.9" width="1.4" height="1.4" fill="#a07820"/><rect x="59.7" y="87.8" width="1.5" height="1.5" fill="#d0701a"/><rect x="44.6" y="12.1" width="1.6" height="1.6" fill="#f2d870"/><rect x="40.3" y="0.5" width="0.9" height="0.9" fill="#7a8a30"/><rect x="36.5" y="38.7" width="1.2" height="1.2" fill="#d0701a"/><rect x="64.6" y="13.9" width="1.3" height="1.3" fill="#c0a030"/><rect x="16.6" y="56.9" width="1.0" height="1.0" fill="#c0a030"/><rect x="66.9" y="52.8" width="0.8" height="0.8" fill="#e8c050"/><rect x="17.5" y="53.4" width="1.6" height="1.6" fill="#c0a030"/><rect x="63.2" y="14.7" width="1.0" height="1.0" fill="#7a8a30"/><rect x="57.0" y="64.2" width="1.5" height="1.5" fill="#7a8a30"/><rect x="18.0" y="78.3" width="1.0" height="1.0" fill="#f2d870"/><rect x="57.8" y="72.6" width="1.3" height="1.3" fill="#e8c050"/><rect x="11.8" y="8.7" width="2.2" height="2.2" fill="#8c8a2a"/><rect x="34.9" y="4.2" width="2.1" height="2.1" fill="#a07820"/><rect x="14.9" y="22.3" width="2.2" height="2.2" fill="#f8e890"/><rect x="25.9" y="57.6" width="2.1" height="2.1" fill="#f8e890"/><rect x="19.5" y="8.1" width="1.9" height="1.9" fill="#f2d870"/><rect x="12.4" y="37.0" width="1.3" height="1.3" fill="#a07820"/><rect x="29.1" y="67.1" width="1.6" height="1.6" fill="#d0701a"/><rect x="23.0" y="31.8" width="1.8" height="1.8" fill="#8c8a2a"/><rect x="23.2" y="8.8" width="1.3" height="1.3" fill="#e8c050"/><rect x="32.8" y="85.3" width="1.4" height="1.4" fill="#f2d870"/><rect x="26.3" y="7.9" width="1.3" height="1.3" fill="#e8c050"/><rect x="50.3" y="8.4" width="0.9" height="0.9" fill="#a07820"/><rect x="30.6" y="67.1" width="1.9" height="1.9" fill="#f8e890"/><rect x="21.3" y="60.9" width="2.0" height="2.0" fill="#f8e890"/><rect x="60.1" y="66.3" width="1.9" height="1.9" fill="#d0701a"/><rect x="59.0" y="89.2" width="2.0" height="2.0" fill="#c0a030"/><rect x="29.2" y="65.3" width="2.0" height="2.0" fill="#a07820"/><rect x="61.9" y="25.9" width="1.3" height="1.3" fill="#8c8a2a"/><rect x="34.8" y="70.7" width="1.9" height="1.9" fill="#e8c050"/><rect x="41.1" y="70.6" width="1.1" height="1.1" fill="#d0701a"/><rect x="61.9" y="40.0" width="1.5" height="1.5" fill="#f2d870"/><rect x="33.1" y="85.7" width="2.0" height="2.0" fill="#f8e890"/><rect x="51.2" y="42.7" width="1.8" height="1.8" fill="#7a8a30"/><rect x="13.2" y="30.3" width="1.0" height="1.0" fill="#c0a030"/><rect x="51.8" y="72.0" width="2.2" height="2.2" fill="#f8e890"/><rect x="49.7" y="31.7" width="1.5" height="1.5" fill="#8c8a2a"/><rect x="49.7" y="60.9" width="1.2" height="1.2" fill="#a07820"/><rect x="59.1" y="48.8" width="2.0" height="2.0" fill="#c0a030"/><rect x="64.0" y="79.2" width="1.2" height="1.2" fill="#8c8a2a"/><rect x="0.1" y="21.2" width="1.3" height="1.3" fill="#d0701a"/><rect x="54.7" y="76.3" width="1.6" height="1.6" fill="#7a8a30"/><rect x="53.2" y="60.8" width="0.8" height="0.8" fill="#f2d870"/><rect x="48.3" y="58.1" width="1.1" height="1.1" fill="#f2d870"/><rect x="36.5" y="14.8" width="1.1" height="1.1" fill="#e8c050"/><rect x="34.4" y="17.3" width="2.1" height="2.1" fill="#c0a030"/><rect x="21.9" y="24.1" width="1.4" height="1.4" fill="#a07820"/><rect x="47.4" y="83.3" width="1.3" height="1.3" fill="#f2d870"/><rect x="41.3" y="24.0" width="0.9" height="0.9" fill="#d0701a"/><rect x="60.4" y="5.2" width="1.9" height="1.9" fill="#f2d870"/><rect x="13.9" y="22.6" width="1.5" height="1.5" fill="#f8e890"/><rect x="24.6" y="85.7" width="1.9" height="1.9" fill="#f2d870"/><rect x="56.6" y="66.0" width="2.0" height="2.0" fill="#f8e890"/><rect x="34.4" y="34.1" width="1.8" height="1.8" fill="#a07820"/><rect x="9.7" y="15.5" width="1.4" height="1.4" fill="#c0a030"/><rect x="57.3" y="33.3" width="1.6" height="1.6" fill="#e8c050"/><rect x="57.3" y="22.8" width="1.6" height="1.6" fill="#7a8a30"/><rect x="26.7" y="51.3" width="2.0" height="2.0" fill="#7a8a30"/><rect x="52.6" y="64.1" width="1.0" height="1.0" fill="#e8c050"/><rect x="62.7" y="87.5" width="1.8" height="1.8" fill="#f8e890"/><rect x="44.3" y="11.8" width="1.1" height="1.1" fill="#e8c050"/><rect x="37.7" y="6.5" width="1.8" height="1.8" fill="#7a8a30"/><rect x="2.1" y="46.0" width="1.7" height="1.7" fill="#8c8a2a"/><rect x="18.7" y="75.3" width="1.9" height="1.9" fill="#e8c050"/><rect x="7.8" y="23.3" width="1.4" height="1.4" fill="#7a8a30"/><rect x="0.4" y="36.3" width="1.6" height="1.6" fill="#a07820"/><rect x="49.3" y="54.7" width="1.8" height="1.8" fill="#e8c050"/><rect x="56.9" y="44.6" width="1.1" height="1.1" fill="#a07820"/><rect x="22.4" y="2.9" width="1.1" height="1.1" fill="#c0a030"/><rect x="63.1" y="29.4" width="1.7" height="1.7" fill="#d0701a"/><rect x="38.7" y="39.1" width="1.8" height="1.8" fill="#d0701a"/><rect x="22.0" y="83.1" width="1.8" height="1.8" fill="#f2d870"/><rect x="54.0" y="44.1" width="1.2" height="1.2" fill="#f2d870"/><rect x="47.5" y="23.3" width="1.4" height="1.4" fill="#c0a030"/><rect x="46.7" y="41.6" width="1.2" height="1.2" fill="#f2d870"/><rect x="40.3" y="55.6" width="1.0" height="1.0" fill="#a07820"/><rect x="45.3" y="43.9" width="0.8" height="0.8" fill="#e8c050"/><rect x="42.0" y="36.3" width="1.0" height="1.0" fill="#c0a030"/><rect x="47.9" y="41.7" width="1.3" height="1.3" fill="#d0701a"/><rect x="29.2" y="63.3" width="0.9" height="0.9" fill="#8c8a2a"/><rect x="52.2" y="50.2" width="1.8" height="1.8" fill="#8c8a2a"/><rect x="35.6" y="30.4" width="1.9" height="1.9" fill="#8c8a2a"/><rect x="8.5" y="4.7" width="1.8" height="1.8" fill="#f8e890"/><rect x="53.7" y="22.7" width="1.4" height="1.4" fill="#f8e890"/><rect x="38.6" y="35.3" width="1.0" height="1.0" fill="#c0a030"/><rect x="27.3" y="22.8" width="1.0" height="1.0" fill="#c0a030"/><rect x="35.5" y="33.4" width="1.6" height="1.6" fill="#a07820"/><rect x="9.9" y="56.7" width="1.5" height="1.5" fill="#a07820"/><rect x="4.2" y="61.1" width="2.0" height="2.0" fill="#8c8a2a"/><rect x="60.6" y="64.8" width="1.7" height="1.7" fill="#e8c050"/><rect x="65.6" y="0.2" width="1.4" height="1.4" fill="#c0a030"/><rect x="11.2" y="75.7" width="2.1" height="2.1" fill="#f2d870"/><rect x="9.1" y="37.1" width="1.9" height="1.9" fill="#7a8a30"/><rect x="37.2" y="83.8" width="1.9" height="1.9" fill="#f2d870"/><rect x="42.5" y="23.6" width="1.8" height="1.8" fill="#c0a030"/><rect x="11.5" y="2.0" width="1.3" height="1.3" fill="#7a8a30"/><rect x="17.5" y="31.1" width="1.6" height="1.6" fill="#a07820"/><rect x="28.6" y="24.1" width="0.9" height="0.9" fill="#f2d870"/><rect x="6.7" y="78.3" width="1.2" height="1.2" fill="#f2d870"/><rect x="65.2" y="39.8" width="1.5" height="1.5" fill="#c0a030"/><rect x="38.6" y="85.6" width="1.7" height="1.7" fill="#c0a030"/><rect x="34.5" y="26.0" width="1.3" height="1.3" fill="#7a8a30"/><rect x="45.4" y="6.4" width="1.8" height="1.8" fill="#e8c050"/><rect x="19.8" y="60.6" width="1.8" height="1.8" fill="#f8e890"/><rect x="17.5" y="42.6" width="1.5" height="1.5" fill="#8c8a2a"/><rect x="21.9" y="56.5" width="1.3" height="1.3" fill="#d0701a"/><rect x="9.5" y="21.2" width="1.3" height="1.3" fill="#f2d870"/><rect x="66.4" y="85.8" width="1.4" height="1.4" fill="#c0a030"/><rect x="19.3" y="37.9" width="1.0" height="1.0" fill="#f8e890"/><rect x="14.9" y="35.5" width="1.2" height="1.2" fill="#d0701a"/><rect x="50.2" y="80.8" width="1.2" height="1.2" fill="#e8c050"/><rect x="13.5" y="9.2" width="1.5" height="1.5" fill="#a07820"/><rect x="4.2" y="87.6" width="0.8" height="0.8" fill="#d0701a"/><rect x="26.7" y="33.4" width="2.1" height="2.1" fill="#f2d870"/><rect x="39.9" y="5.6" width="1.3" height="1.3" fill="#d0701a"/><rect x="50.1" y="7.8" width="1.5" height="1.5" fill="#f2d870"/><rect x="37.3" y="42.4" width="1.4" height="1.4" fill="#c0a030"/><rect x="12.4" y="68.0" width="1.2" height="1.2" fill="#a07820"/><rect x="56.0" y="87.5" width="1.4" height="1.4" fill="#a07820"/><rect x="62.4" y="20.6" width="2.2" height="2.2" fill="#c0a030"/><rect x="12.7" y="37.1" width="1.6" height="1.6" fill="#7a8a30"/><rect x="10.7" y="49.4" width="1.1" height="1.1" fill="#d0701a"/><rect x="10.4" y="60.3" width="2.1" height="2.1" fill="#f8e890"/><rect x="61.8" y="75.0" width="2.0" height="2.0" fill="#8c8a2a"/><rect x="23.1" y="90.7" width="1.0" height="1.0" fill="#f2d870"/><rect x="48.8" y="66.5" width="1.1" height="1.1" fill="#a07820"/><rect x="40.8" y="48.3" width="1.8" height="1.8" fill="#d0701a"/><rect x="6.2" y="12.4" width="1.0" height="1.0" fill="#f2d870"/><rect x="11.9" y="24.0" width="2.0" height="2.0" fill="#8c8a2a"/><rect x="45.8" y="30.9" width="1.7" height="1.7" fill="#c0a030"/><rect x="31.7" y="67.5" width="1.0" height="1.0" fill="#d0701a"/><rect x="65.8" y="54.2" width="2.1" height="2.1" fill="#7a8a30"/><rect x="3.9" y="0.4" width="2.2" height="2.2" fill="#7a8a30"/><rect x="53.0" y="76.3" width="1.3" height="1.3" fill="#7a8a30"/><rect x="43.4" y="5.5" width="1.6" height="1.6" fill="#c0a030"/><rect x="52.7" y="6.1" width="1.4" height="1.4" fill="#c0a030"/><rect x="37.2" y="77.0" width="1.5" height="1.5" fill="#8c8a2a"/><rect x="34.7" y="61.4" width="1.6" height="1.6" fill="#f8e890"/><rect x="38.8" y="90.7" width="1.6" height="1.6" fill="#c0a030"/><rect x="47.8" y="24.7" width="2.2" height="2.2" fill="#e8c050"/><rect x="36.0" y="77.8" width="0.9" height="0.9" fill="#e8c050"/><rect x="49.0" y="23.9" width="1.1" height="1.1" fill="#c0a030"/><rect x="7.9" y="78.7" width="1.7" height="1.7" fill="#f2d870"/><rect x="48.9" y="80.7" width="1.4" height="1.4" fill="#f2d870"/><rect x="15.4" y="20.9" width="1.6" height="1.6" fill="#a07820"/><rect x="50.2" y="15.4" width="0.9" height="0.9" fill="#a07820"/><rect x="50.6" y="24.0" width="1.2" height="1.2" fill="#f2d870"/><rect x="28.5" y="89.6" width="2.0" height="2.0" fill="#f8e890"/><rect x="65.4" y="19.4" width="1.3" height="1.3" fill="#c0a030"/><rect x="42.1" y="71.6" width="1.5" height="1.5" fill="#7a8a30"/><rect x="19.9" y="32.4" width="1.1" height="1.1" fill="#e8c050"/><rect x="54.8" y="20.2" width="1.6" height="1.6" fill="#c0a030"/><rect x="21.6" y="13.0" width="1.3" height="1.3" fill="#e8c050"/><rect x="54.2" y="21.3" width="2.1" height="2.1" fill="#8c8a2a"/><rect x="36.8" y="54.3" width="1.1" height="1.1" fill="#8c8a2a"/><rect x="41.7" y="31.7" width="1.7" height="1.7" fill="#f8e890"/><rect x="35.0" y="2.4" width="1.7" height="1.7" fill="#e8c050"/><rect x="51.0" y="75.1" width="2.2" height="2.2" fill="#f2d870"/><rect x="12.6" y="18.0" width="2.1" height="2.1" fill="#f2d870"/><rect x="31.7" y="70.8" width="1.0" height="1.0" fill="#a07820"/><rect x="64.8" y="68.9" width="1.1" height="1.1" fill="#f8e890"/><rect x="18.3" y="72.0" width="1.3" height="1.3" fill="#e8c050"/><rect x="59.0" y="36.1" width="1.0" height="1.0" fill="#a07820"/><rect x="20.3" y="78.8" width="1.0" height="1.0" fill="#f2d870"/><rect x="17.5" y="35.7" width="1.8" height="1.8" fill="#e8c050"/><rect x="12.4" y="66.3" width="2.0" height="2.0" fill="#8c8a2a"/><rect x="55.4" y="41.6" width="1.4" height="1.4" fill="#e8c050"/><rect x="48.4" y="35.6" width="2.2" height="2.2" fill="#7a8a30"/><rect x="63.1" y="39.5" width="1.3" height="1.3" fill="#f8e890"/><rect x="26.7" y="54.2" width="2.0" height="2.0" fill="#8c8a2a"/><rect x="52.1" y="11.7" width="2.0" height="2.0" fill="#d0701a"/><rect x="21.9" y="11.8" width="1.6" height="1.6" fill="#e8c050"/><rect x="19.4" y="43.7" width="2.0" height="2.0" fill="#e8c050"/><rect x="25.8" y="13.0" width="1.1" height="1.1" fill="#e8c050"/><rect x="48.5" y="8.6" width="1.2" height="1.2" fill="#f8e890"/><rect x="49.6" y="17.1" width="1.9" height="1.9" fill="#8c8a2a"/><rect x="7.0" y="46.1" width="2.0" height="2.0" fill="#f8e890"/><rect x="5.5" y="66.5" width="1.1" height="1.1" fill="#7a8a30"/><rect x="29.1" y="62.8" width="1.0" height="1.0" fill="#a07820"/><rect x="46.5" y="51.2" width="1.4" height="1.4" fill="#c0a030"/><rect x="38.9" y="88.2" width="1.1" height="1.1" fill="#a07820"/><rect x="57.3" y="54.4" width="1.3" height="1.3" fill="#c0a030"/><rect x="35.1" y="66.8" width="2.1" height="2.1" fill="#7a8a30"/><rect x="18.2" y="55.0" width="1.5" height="1.5" fill="#a07820"/><rect x="7.6" y="71.4" width="2.0" height="2.0" fill="#d0701a"/><rect x="16.0" y="46.5" width="1.6" height="1.6" fill="#a07820"/><rect x="63.9" y="87.5" width="1.5" height="1.5" fill="#a07820"/><rect x="31.8" y="58.3" width="1.9" height="1.9" fill="#7a8a30"/><rect x="6.8" y="11.8" width="1.7" height="1.7" fill="#c0a030"/><rect x="8.9" y="16.7" width="0.9" height="0.9" fill="#e8c050"/><rect x="25.5" y="68.2" width="2.2" height="2.2" fill="#7a8a30"/><rect x="50.5" y="5.2" width="1.4" height="1.4" fill="#8c8a2a"/><rect x="3.8" y="30.6" width="1.5" height="1.5" fill="#f8e890"/><rect x="11.7" y="51.4" width="1.0" height="1.0" fill="#f8e890"/><rect x="65.9" y="62.2" width="1.9" height="1.9" fill="#7a8a30"/><rect x="62.8" y="86.3" width="2.1" height="2.1" fill="#c0a030"/><rect x="34.1" y="69.5" width="1.7" height="1.7" fill="#f8e890"/><rect x="53.5" y="60.7" width="0.9" height="0.9" fill="#c0a030"/><rect x="10.4" y="52.9" width="1.7" height="1.7" fill="#d0701a"/><rect x="3.3" y="41.8" width="0.8" height="0.8" fill="#d0701a"/><rect x="35.2" y="67.5" width="2.0" height="2.0" fill="#f8e890"/><rect x="35.4" y="55.9" width="2.2" height="2.2" fill="#8c8a2a"/><rect x="58.2" y="47.8" width="1.0" height="1.0" fill="#f2d870"/><rect x="39.3" y="30.1" width="0.9" height="0.9" fill="#c0a030"/><rect x="43.0" y="46.5" width="1.5" height="1.5" fill="#7a8a30"/><rect x="29.1" y="85.7" width="1.4" height="1.4" fill="#e8c050"/><rect x="8.0" y="2.2" width="1.0" height="1.0" fill="#d0701a"/><rect x="39.1" y="19.3" width="1.5" height="1.5" fill="#f2d870"/><rect x="20.4" y="26.5" width="1.1" height="1.1" fill="#8c8a2a"/><rect x="42.4" y="83.5" width="2.1" height="2.1" fill="#e8c050"/><rect x="33.6" y="63.2" width="1.1" height="1.1" fill="#e8c050"/><rect x="38.3" y="3.4" width="1.0" height="1.0" fill="#d0701a"/><rect x="8.6" y="14.9" width="1.3" height="1.3" fill="#7a8a30"/><rect x="64.1" y="44.4" width="1.4" height="1.4" fill="#a07820"/><rect x="33.2" y="33.4" width="0.8" height="0.8" fill="#e8c050"/><rect x="34.1" y="77.1" width="1.3" height="1.3" fill="#e8c050"/><rect x="1.7" y="7.4" width="1.9" height="1.9" fill="#a07820"/><rect x="48.3" y="26.5" width="1.3" height="1.3" fill="#a07820"/><rect x="42.6" y="49.7" width="2.1" height="2.1" fill="#a07820"/><rect x="32.8" y="39.4" width="2.1" height="2.1" fill="#d0701a"/><rect x="17.1" y="85.8" width="0.9" height="0.9" fill="#a07820"/><rect x="51.2" y="65.0" width="1.4" height="1.4" fill="#f2d870"/><rect x="54.7" y="70.6" width="0.8" height="0.8" fill="#a07820"/><rect x="21.3" y="77.0" width="1.1" height="1.1" fill="#e8c050"/><rect x="64.6" y="4.1" width="2.0" height="2.0" fill="#8c8a2a"/><rect x="21.1" y="36.7" width="1.4" height="1.4" fill="#8c8a2a"/><rect x="29.0" y="66.1" width="0.9" height="0.9" fill="#7a8a30"/><rect x="12.8" y="11.6" width="2.0" height="2.0" fill="#f8e890"/><rect x="33.3" y="47.0" width="2.0" height="2.0" fill="#c0a030"/><rect x="46.1" y="12.9" width="1.5" height="1.5" fill="#e8c050"/><rect x="18.4" y="33.4" width="0.9" height="0.9" fill="#c0a030"/><rect x="12.5" y="47.3" width="1.5" height="1.5" fill="#f2d870"/><rect x="24.4" y="79.2" width="2.1" height="2.1" fill="#d0701a"/><rect x="34.8" y="60.2" width="1.8" height="1.8" fill="#7a8a30"/><rect x="62.0" y="22.9" width="1.2" height="1.2" fill="#f2d870"/><rect x="45.4" y="19.2" width="1.1" height="1.1" fill="#e8c050"/><rect x="49.6" y="60.7" width="1.6" height="1.6" fill="#a07820"/><rect x="28.2" y="5.9" width="1.0" height="1.0" fill="#a07820"/><rect x="57.0" y="81.5" width="1.3" height="1.3" fill="#e8c050"/><rect x="51.5" y="76.9" width="1.8" height="1.8" fill="#8c8a2a"/><rect x="25.2" y="14.0" width="2.1" height="2.1" fill="#d0701a"/><rect x="37.7" y="83.5" width="1.2" height="1.2" fill="#8c8a2a"/><rect x="10.2" y="71.4" width="1.2" height="1.2" fill="#c0a030"/><rect x="3.3" y="52.6" width="1.7" height="1.7" fill="#7a8a30"/><rect x="47.2" y="65.8" width="1.5" height="1.5" fill="#f8e890"/><rect x="11.8" y="21.9" width="1.6" height="1.6" fill="#c0a030"/><rect x="50.8" y="44.0" width="1.6" height="1.6" fill="#f8e890"/><rect x="41.1" y="36.4" width="1.1" height="1.1" fill="#c0a030"/><rect x="36.6" y="31.4" width="2.2" height="2.2" fill="#a07820"/><rect x="11.6" y="14.2" width="1.9" height="1.9" fill="#8c8a2a"/><rect x="52.2" y="6.8" width="1.0" height="1.0" fill="#a07820"/><rect x="33.7" y="28.4" width="1.5" height="1.5" fill="#a07820"/><rect x="35.5" y="29.4" width="1.0" height="1.0" fill="#d0701a"/><rect x="41.0" y="52.4" width="0.9" height="0.9" fill="#a07820"/><rect x="37.7" y="60.5" width="1.2" height="1.2" fill="#a07820"/><rect x="38.0" y="84.5" width="1.1" height="1.1" fill="#d0701a"/><rect x="1.4" y="6.1" width="1.9" height="1.9" fill="#d0701a"/><rect x="50.2" y="58.6" width="1.3" height="1.3" fill="#8c8a2a"/><rect x="36.1" y="73.8" width="2.2" height="2.2" fill="#d0701a"/><rect x="41.7" y="46.1" width="2.1" height="2.1" fill="#a07820"/><rect x="50.1" y="5.3" width="2.1" height="2.1" fill="#d0701a"/><rect x="65.4" y="37.2" width="2.2" height="2.2" fill="#7a8a30"/><rect x="63.9" y="50.7" width="1.2" height="1.2" fill="#f8e890"/><rect x="6.6" y="12.3" width="1.9" height="1.9" fill="#f2d870"/><rect x="40.6" y="1.3" width="1.9" height="1.9" fill="#8c8a2a"/><rect x="18.1" y="15.9" width="1.8" height="1.8" fill="#7a8a30"/><rect x="3.0" y="73.8" width="0.9" height="0.9" fill="#8c8a2a"/><rect x="10.3" y="88.8" width="1.9" height="1.9" fill="#e8c050"/><rect x="37.2" y="39.7" width="1.8" height="1.8" fill="#d0701a"/><rect x="3.0" y="48.2" width="2.0" height="2.0" fill="#8c8a2a"/><rect x="55.2" y="70.5" width="1.2" height="1.2" fill="#d0701a"/><rect x="6.7" y="41.2" width="1.3" height="1.3" fill="#e8c050"/><rect x="3.5" y="70.7" width="1.4" height="1.4" fill="#e8c050"/><rect x="17.4" y="87.7" width="1.7" height="1.7" fill="#d0701a"/><rect x="15.8" y="29.6" width="1.2" height="1.2" fill="#f2d870"/><rect x="55.8" y="48.3" width="1.3" height="1.3" fill="#c0a030"/><rect x="6.7" y="26.9" width="1.3" height="1.3" fill="#c0a030"/><rect x="61.6" y="63.9" width="1.6" height="1.6" fill="#d0701a"/><rect x="32.8" y="27.8" width="1.9" height="1.9" fill="#c0a030"/><rect x="4.9" y="4.6" width="1.3" height="1.3" fill="#e8c050"/><rect x="50.9" y="46.2" width="1.4" height="1.4" fill="#c0a030"/><rect x="48.9" y="27.6" width="1.1" height="1.1" fill="#e8c050"/><rect x="18.9" y="62.2" width="1.2" height="1.2" fill="#f2d870"/><rect x="57.2" y="10.4" width="2.0" height="2.0" fill="#f2d870"/><rect x="13.5" y="90.2" width="2.0" height="2.0" fill="#e8c050"/><rect x="14.7" y="52.8" width="1.9" height="1.9" fill="#e8c050"/><rect x="20.5" y="65.5" width="1.1" height="1.1" fill="#8c8a2a"/><rect x="33.4" y="48.7" width="2.0" height="2.0" fill="#a07820"/><rect x="24.8" y="53.5" width="1.2" height="1.2" fill="#f2d870"/><rect x="60.4" y="20.9" width="1.2" height="1.2" fill="#7a8a30"/><rect x="52.1" y="46.5" width="0.9" height="0.9" fill="#c0a030"/><rect x="8.7" y="46.4" width="1.2" height="1.2" fill="#f8e890"/><rect x="21.6" y="45.9" width="1.8" height="1.8" fill="#8c8a2a"/><rect x="11.2" y="45.0" width="1.4" height="1.4" fill="#c0a030"/><rect x="33.1" y="8.2" width="1.9" height="1.9" fill="#c0a030"/><rect x="46.5" y="27.8" width="1.8" height="1.8" fill="#a07820"/><rect x="37.3" y="71.6" width="1.8" height="1.8" fill="#7a8a30"/><rect x="20.2" y="32.5" width="0.9" height="0.9" fill="#a07820"/><rect x="48.5" y="4.8" width="1.2" height="1.2" fill="#a07820"/><rect x="63.9" y="74.4" width="1.1" height="1.1" fill="#8c8a2a"/><rect x="6.9" y="64.0" width="1.4" height="1.4" fill="#f2d870"/><rect x="40.1" y="36.2" width="1.8" height="1.8" fill="#8c8a2a"/><rect x="44.2" y="89.1" width="1.8" height="1.8" fill="#f2d870"/><rect x="4.5" y="17.9" width="1.6" height="1.6" fill="#d0701a"/><rect x="53.8" y="37.5" width="0.9" height="0.9" fill="#c0a030"/><rect x="24.8" y="57.2" width="1.0" height="1.0" fill="#f2d870"/><rect x="65.5" y="1.4" width="1.7" height="1.7" fill="#8c8a2a"/><rect x="5.4" y="66.3" width="1.5" height="1.5" fill="#d0701a"/><rect x="19.7" y="14.3" width="1.5" height="1.5" fill="#f8e890"/><rect x="31.5" y="48.5" width="1.7" height="1.7" fill="#f8e890"/><rect x="1.8" y="16.8" width="0.9" height="0.9" fill="#e8c050"/><rect x="42.9" y="2.5" width="1.5" height="1.5" fill="#8c8a2a"/><rect x="55.5" y="27.6" width="2.1" height="2.1" fill="#a07820"/><rect x="49.3" y="9.1" width="1.4" height="1.4" fill="#7a8a30"/><rect x="40.3" y="26.5" width="0.9" height="0.9" fill="#c0a030"/><rect x="57.5" y="77.0" width="1.6" height="1.6" fill="#d0701a"/><rect x="20.1" y="7.3" width="1.9" height="1.9" fill="#f2d870"/><rect x="7.6" y="49.4" width="0.9" height="0.9" fill="#f2d870"/><rect x="43.0" y="11.1" width="2.0" height="2.0" fill="#f8e890"/><rect x="43.1" y="7.0" width="2.0" height="2.0" fill="#f8e890"/><rect x="47.0" y="2.5" width="1.2" height="1.2" fill="#f8e890"/><rect x="39.2" y="33.8" width="1.4" height="1.4" fill="#7a8a30"/><rect x="8.1" y="31.9" width="1.4" height="1.4" fill="#f8e890"/><rect x="14.9" y="84.4" width="2.1" height="2.1" fill="#f8e890"/><rect x="37.5" y="80.8" width="1.6" height="1.6" fill="#e8c050"/><rect x="9.3" y="19.3" width="0.8" height="0.8" fill="#8c8a2a"/><rect x="5.2" y="9.6" width="1.2" height="1.2" fill="#e8c050"/><rect x="29.4" y="26.7" width="1.1" height="1.1" fill="#7a8a30"/><rect x="52.7" y="34.1" width="1.4" height="1.4" fill="#c0a030"/><rect x="24.5" y="70.4" width="0.8" height="0.8" fill="#7a8a30"/><rect x="48.9" y="39.7" width="1.5" height="1.5" fill="#c0a030"/><rect x="41.4" y="51.1" width="1.7" height="1.7" fill="#d0701a"/><rect x="21.6" y="82.5" width="2.0" height="2.0" fill="#7a8a30"/><rect x="10.2" y="23.5" width="1.5" height="1.5" fill="#f8e890"/><rect x="3.9" y="65.8" width="1.8" height="1.8" fill="#f2d870"/><rect x="1.7" y="84.4" width="1.6" height="1.6" fill="#d0701a"/><rect x="62.2" y="76.3" width="1.5" height="1.5" fill="#a07820"/><rect x="55.7" y="4.6" width="1.9" height="1.9" fill="#a07820"/><rect x="64.3" y="10.7" width="1.1" height="1.1" fill="#8c8a2a"/><rect x="42.8" y="46.1" width="1.6" height="1.6" fill="#f8e890"/><rect x="14.2" y="33.8" width="1.4" height="1.4" fill="#f2d870"/><rect x="5.2" y="90.6" width="1.2" height="1.2" fill="#8c8a2a"/><rect x="22.7" y="84.8" width="2.1" height="2.1" fill="#a07820"/><rect x="57.2" y="73.9" width="2.1" height="2.1" fill="#e8c050"/><rect x="7.5" y="8.4" width="1.7" height="1.7" fill="#f8e890"/><rect x="6.7" y="35.7" width="1.0" height="1.0" fill="#d0701a"/><rect x="42.4" y="19.5" width="1.8" height="1.8" fill="#8c8a2a"/><rect x="18.1" y="75.2" width="0.9" height="0.9" fill="#d0701a"/><rect x="63.2" y="56.8" width="0.9" height="0.9" fill="#7a8a30"/><rect x="48.9" y="86.4" width="2.1" height="2.1" fill="#d0701a"/><rect x="1.8" y="14.9" width="1.2" height="1.2" fill="#f2d870"/><rect x="49.6" y="50.4" width="1.3" height="1.3" fill="#d0701a"/><rect x="0.2" y="58.3" width="0.9" height="0.9" fill="#8c8a2a"/><rect x="47.1" y="85.8" width="2.1" height="2.1" fill="#d0701a"/><rect x="30.5" y="34.0" width="1.4" height="1.4" fill="#d0701a"/><rect x="42.8" y="13.1" width="1.9" height="1.9" fill="#f8e890"/><rect x="59.4" y="62.6" width="1.0" height="1.0" fill="#7a8a30"/><rect x="24.3" y="56.3" width="1.8" height="1.8" fill="#d0701a"/><rect x="5.1" y="90.1" width="1.1" height="1.1" fill="#d0701a"/><rect x="21.8" y="70.9" width="1.2" height="1.2" fill="#8c8a2a"/><rect x="3.4" y="13.1" width="1.8" height="1.8" fill="#8c8a2a"/><rect x="51.1" y="89.7" width="2.2" height="2.2" fill="#d0701a"/><rect x="62.0" y="79.8" width="2.1" height="2.1" fill="#c0a030"/><rect x="35.7" y="63.2" width="2.2" height="2.2" fill="#f8e890"/><rect x="61.8" y="19.9" width="1.6" height="1.6" fill="#e8c050"/><rect x="6.7" y="66.6" width="1.5" height="1.5" fill="#e8c050"/><rect x="36.3" y="71.0" width="1.0" height="1.0" fill="#e8c050"/><rect x="56.6" y="17.8" width="1.1" height="1.1" fill="#a07820"/><rect x="44.5" y="39.1" width="1.8" height="1.8" fill="#c0a030"/><rect x="20.7" y="46.9" width="2.0" height="2.0" fill="#8c8a2a"/><rect x="57.1" y="43.5" width="1.0" height="1.0" fill="#c0a030"/><rect x="29.3" y="12.1" width="1.6" height="1.6" fill="#c0a030"/><rect x="41.3" y="63.7" width="1.0" height="1.0" fill="#f8e890"/><rect x="53.0" y="89.9" width="1.2" height="1.2" fill="#c0a030"/><rect x="19.9" y="2.5" width="1.3" height="1.3" fill="#d0701a"/><rect x="66.4" y="49.5" width="2.2" height="2.2" fill="#a07820"/><rect x="55.9" y="82.2" width="1.5" height="1.5" fill="#e8c050"/><rect x="43.4" y="36.2" width="2.2" height="2.2" fill="#f2d870"/><rect x="35.3" y="46.3" width="2.1" height="2.1" fill="#8c8a2a"/><rect x="7.8" y="9.8" width="1.6" height="1.6" fill="#8c8a2a"/><rect x="59.0" y="13.5" width="1.9" height="1.9" fill="#f8e890"/><rect x="31.4" y="31.0" width="0.9" height="0.9" fill="#c0a030"/><rect x="30.4" y="8.1" width="1.5" height="1.5" fill="#c0a030"/><rect x="47.9" y="90.9" width="1.5" height="1.5" fill="#d0701a"/><rect x="63.0" y="42.9" width="1.2" height="1.2" fill="#a07820"/><rect x="1.2" y="12.2" width="2.1" height="2.1" fill="#a07820"/><rect x="66.8" y="89.7" width="1.5" height="1.5" fill="#d0701a"/><rect x="40.1" y="86.1" width="2.0" height="2.0" fill="#8c8a2a"/><rect x="22.8" y="34.4" width="0.9" height="0.9" fill="#8c8a2a"/><rect x="22.7" y="50.8" width="1.5" height="1.5" fill="#f2d870"/><rect x="9.9" y="79.0" width="2.0" height="2.0" fill="#e8c050"/><rect x="23.6" y="54.6" width="1.2" height="1.2" fill="#f2d870"/><rect x="14.4" y="81.4" width="1.4" height="1.4" fill="#e8c050"/><rect x="19.0" y="0.2" width="1.4" height="1.4" fill="#a07820"/><rect x="50.7" y="23.5" width="1.8" height="1.8" fill="#7a8a30"/><rect x="55.8" y="87.8" width="2.0" height="2.0" fill="#f8e890"/><rect x="26.7" y="30.9" width="1.1" height="1.1" fill="#f8e890"/><rect x="54.9" y="68.7" width="1.0" height="1.0" fill="#7a8a30"/><rect x="0.4" y="28.5" width="2.1" height="2.1" fill="#e8c050"/><rect x="4.5" y="72.0" width="1.2" height="1.2" fill="#d0701a"/><rect x="64.8" y="79.6" width="1.4" height="1.4" fill="#7a8a30"/><rect x="44.4" y="63.1" width="1.1" height="1.1" fill="#f8e890"/><rect x="58.4" y="81.1" width="1.9" height="1.9" fill="#f8e890"/><rect x="30.5" y="27.2" width="1.6" height="1.6" fill="#e8c050"/><rect x="1.8" y="30.2" width="1.6" height="1.6" fill="#7a8a30"/><rect x="52.2" y="18.5" width="0.8" height="0.8" fill="#a07820"/><rect x="55.0" y="65.0" width="1.8" height="1.8" fill="#c0a030"/><rect x="59.2" y="46.5" width="1.6" height="1.6" fill="#f2d870"/><rect x="49.1" y="4.8" width="1.1" height="1.1" fill="#f8e890"/><rect x="2.3" y="81.2" width="2.1" height="2.1" fill="#8c8a2a"/><rect x="19.3" y="13.3" width="1.3" height="1.3" fill="#7a8a30"/><rect x="37.9" y="16.3" width="1.4" height="1.4" fill="#f2d870"/><rect x="28.0" y="44.8" width="1.3" height="1.3" fill="#d0701a"/><rect x="33.8" y="35.0" width="1.5" height="1.5" fill="#7a8a30"/><rect x="28.4" y="39.3" width="1.8" height="1.8" fill="#e8c050"/><rect x="8.1" y="16.6" width="1.4" height="1.4" fill="#8c8a2a"/><rect x="31.0" y="14.6" width="1.6" height="1.6" fill="#f8e890"/><rect x="39.3" y="61.4" width="1.8" height="1.8" fill="#7a8a30"/><rect x="34.3" y="18.0" width="1.8" height="1.8" fill="#a07820"/><rect x="8.6" y="84.7" width="1.1" height="1.1" fill="#7a8a30"/><rect x="32.2" y="22.9" width="1.8" height="1.8" fill="#d0701a"/><rect x="35.7" y="37.9" width="1.4" height="1.4" fill="#f2d870"/><rect x="0.1" y="33.4" width="1.8" height="1.8" fill="#f8e890"/><rect x="16.0" y="87.7" width="2.0" height="2.0" fill="#7a8a30"/><rect x="11.8" y="71.3" width="1.1" height="1.1" fill="#7a8a30"/><rect x="46.2" y="60.1" width="1.5" height="1.5" fill="#c0a030"/><rect x="45.3" y="78.8" width="2.1" height="2.1" fill="#e8c050"/><rect x="39.8" y="51.4" width="2.1" height="2.1" fill="#f8e890"/><rect x="30.4" y="21.9" width="1.2" height="1.2" fill="#c0a030"/><rect x="47.1" y="22.3" width="1.4" height="1.4" fill="#c0a030"/><rect x="44.9" y="77.3" width="2.2" height="2.2" fill="#f2d870"/><rect x="10.3" y="38.0" width="1.2" height="1.2" fill="#f2d870"/><rect x="61.8" y="75.0" width="1.8" height="1.8" fill="#f8e890"/><rect x="55.1" y="11.7" width="1.5" height="1.5" fill="#e8c050"/><rect x="6.6" y="58.8" width="1.2" height="1.2" fill="#a07820"/><rect x="31.6" y="11.8" width="1.0" height="1.0" fill="#c0a030"/><rect x="43.1" y="71.7" width="0.8" height="0.8" fill="#f2d870"/><rect x="60.1" y="45.4" width="1.9" height="1.9" fill="#7a8a30"/><rect x="22.6" y="26.3" width="1.2" height="1.2" fill="#d0701a"/><rect x="41.4" y="76.3" width="1.4" height="1.4" fill="#d0701a"/><rect x="53.4" y="62.9" width="1.4" height="1.4" fill="#8c8a2a"/><rect x="35.9" y="0.4" width="1.8" height="1.8" fill="#c0a030"/><rect x="58.6" y="25.0" width="1.7" height="1.7" fill="#a07820"/><rect x="33.2" y="31.2" width="1.0" height="1.0" fill="#8c8a2a"/><rect x="17.2" y="50.3" width="1.1" height="1.1" fill="#e8c050"/><rect x="18.5" y="60.5" width="1.1" height="1.1" fill="#7a8a30"/><rect x="46.6" y="53.8" width="1.9" height="1.9" fill="#f2d870"/><rect x="56.9" y="88.5" width="2.0" height="2.0" fill="#e8c050"/><rect x="60.6" y="59.7" width="1.2" height="1.2" fill="#7a8a30"/><rect x="34.7" y="55.2" width="1.6" height="1.6" fill="#e8c050"/><rect x="30.6" y="31.3" width="1.6" height="1.6" fill="#8c8a2a"/><rect x="46.0" y="49.4" width="1.4" height="1.4" fill="#7a8a30"/><rect x="26.8" y="23.3" width="1.3" height="1.3" fill="#f2d870"/><rect x="34.0" y="10.6" width="1.4" height="1.4" fill="#f2d870"/><rect x="4.2" y="52.2" width="1.1" height="1.1" fill="#e8c050"/><rect x="27.0" y="79.7" width="0.9" height="0.9" fill="#a07820"/><rect x="31.0" y="0.5" width="2.2" height="2.2" fill="#d0701a"/><rect x="66.2" y="57.9" width="1.8" height="1.8" fill="#8c8a2a"/><rect x="62.6" y="66.8" width="1.0" height="1.0" fill="#d0701a"/><rect x="10.9" y="24.0" width="2.2" height="2.2" fill="#7a8a30"/><rect x="38.5" y="42.0" width="1.8" height="1.8" fill="#c0a030"/><rect x="43.3" y="18.0" width="1.3" height="1.3" fill="#a07820"/><rect x="38.4" y="77.0" width="1.0" height="1.0" fill="#7a8a30"/><rect x="33.2" y="10.7" width="2.0" height="2.0" fill="#d0701a"/><rect x="33.5" y="44.5" width="1.3" height="1.3" fill="#d0701a"/><rect x="17.2" y="47.4" width="1.5" height="1.5" fill="#e8c050"/><rect x="15.7" y="22.5" width="1.2" height="1.2" fill="#d0701a"/><rect x="4.5" y="80.1" width="1.1" height="1.1" fill="#a07820"/><rect x="4.3" y="30.7" width="1.6" height="1.6" fill="#8c8a2a"/><rect x="33.8" y="15.9" width="2.0" height="2.0" fill="#7a8a30"/><rect x="3.7" y="4.6" width="1.9" height="1.9" fill="#a07820"/><rect x="16.9" y="90.5" width="1.9" height="1.9" fill="#e8c050"/><rect x="6.0" y="55.8" width="1.8" height="1.8" fill="#d0701a"/><rect x="37.2" y="75.4" width="1.2" height="1.2" fill="#e8c050"/><rect x="66.6" y="71.0" width="1.1" height="1.1" fill="#c0a030"/><rect x="46.1" y="39.1" width="1.6" height="1.6" fill="#a07820"/><rect x="17.8" y="26.4" width="0.9" height="0.9" fill="#7a8a30"/><rect x="27.6" y="71.7" width="1.2" height="1.2" fill="#c0a030"/><rect x="0.4" y="85.9" width="1.1" height="1.1" fill="#e8c050"/><rect x="55.8" y="82.9" width="2.1" height="2.1" fill="#d0701a"/><rect x="13.0" y="23.7" width="1.2" height="1.2" fill="#f2d870"/><rect x="42.8" y="18.3" width="2.2" height="2.2" fill="#f2d870"/><rect x="17.5" y="34.0" width="1.4" height="1.4" fill="#f8e890"/><rect x="26.0" y="76.5" width="1.9" height="1.9" fill="#f2d870"/><rect x="27.8" y="2.3" width="1.4" height="1.4" fill="#7a8a30"/><rect x="21.4" y="34.2" width="1.4" height="1.4" fill="#8c8a2a"/><rect x="61.4" y="46.5" width="2.0" height="2.0" fill="#f2d870"/><rect x="64.5" y="30.9" width="0.9" height="0.9" fill="#d0701a"/><rect x="31.7" y="27.5" width="1.0" height="1.0" fill="#7a8a30"/><rect x="64.2" y="86.7" width="1.5" height="1.5" fill="#d0701a"/><rect x="1.8" y="26.5" width="1.1" height="1.1" fill="#a07820"/><rect x="48.4" y="22.6" width="2.1" height="2.1" fill="#a07820"/><rect x="8.0" y="28.4" width="1.0" height="1.0" fill="#8c8a2a"/><rect x="48.1" y="30.3" width="1.9" height="1.9" fill="#a07820"/><rect x="61.4" y="64.0" width="1.6" height="1.6" fill="#8c8a2a"/><rect x="30.6" y="70.5" width="1.4" height="1.4" fill="#f2d870"/><rect x="49.5" y="71.9" width="2.1" height="2.1" fill="#7a8a30"/><rect x="32.6" y="20.1" width="1.9" height="1.9" fill="#7a8a30"/><rect x="31.1" y="2.4" width="0.9" height="0.9" fill="#c0a030"/><rect x="7.2" y="89.0" width="1.9" height="1.9" fill="#e8c050"/><rect x="25.2" y="18.8" width="2.1" height="2.1" fill="#f8e890"/><rect x="8.8" y="8.7" width="0.9" height="0.9" fill="#f2d870"/><rect x="30.0" y="55.0" width="0.9" height="0.9" fill="#f8e890"/><rect x="51.3" y="53.3" width="0.9" height="0.9" fill="#a07820"/><rect x="21.8" y="73.5" width="1.5" height="1.5" fill="#c0a030"/><rect x="52.0" y="87.7" width="1.9" height="1.9" fill="#a07820"/><rect x="37.8" y="70.5" width="2.1" height="2.1" fill="#c0a030"/><rect x="56.8" y="88.1" width="1.5" height="1.5" fill="#e8c050"/><rect x="14.4" y="76.7" width="1.2" height="1.2" fill="#f8e890"/><rect x="12.9" y="28.6" width="1.6" height="1.6" fill="#8c8a2a"/><rect x="54.5" y="51.2" width="1.1" height="1.1" fill="#f2d870"/><rect x="10.6" y="16.2" width="1.3" height="1.3" fill="#a07820"/><rect x="47.4" y="64.6" width="1.9" height="1.9" fill="#8c8a2a"/><rect x="5.5" y="29.9" width="1.9" height="1.9" fill="#d0701a"/><rect x="6.2" y="59.0" width="1.3" height="1.3" fill="#d0701a"/><rect x="24.7" y="45.8" width="1.2" height="1.2" fill="#8c8a2a"/><rect x="30.6" y="84.6" width="2.1" height="2.1" fill="#7a8a30"/><rect x="43.8" y="29.4" width="1.6" height="1.6" fill="#f8e890"/><rect x="0.5" y="83.2" width="1.2" height="1.2" fill="#d0701a"/><rect x="33.6" y="61.3" width="1.2" height="1.2" fill="#7a8a30"/><rect x="5.5" y="37.4" width="1.8" height="1.8" fill="#7a8a30"/><rect x="60.4" y="55.5" width="2.0" height="2.0" fill="#c0a030"/><rect x="17.0" y="64.0" width="1.4" height="1.4" fill="#a07820"/><rect x="15.9" y="70.0" width="2.0" height="2.0" fill="#f2d870"/><rect x="54.0" y="66.5" width="1.3" height="1.3" fill="#e8c050"/><rect x="8.9" y="24.1" width="1.0" height="1.0" fill="#c0a030"/><rect x="28.4" y="0.1" width="0.9" height="0.9" fill="#8c8a2a"/><rect x="48.4" y="4.9" width="1.0" height="1.0" fill="#f8e890"/><rect x="58.2" y="2.7" width="1.5" height="1.5" fill="#f2d870"/><rect x="33.1" y="8.8" width="1.0" height="1.0" fill="#7a8a30"/><rect x="0.9" y="28.8" width="1.9" height="1.9" fill="#d0701a"/><rect x="12.7" y="35.1" width="2.1" height="2.1" fill="#f2d870"/><rect x="41.0" y="49.2" width="1.0" height="1.0" fill="#c0a030"/><rect x="16.0" y="69.7" width="1.5" height="1.5" fill="#d0701a"/><rect x="24.6" y="38.4" width="1.1" height="1.1" fill="#e8c050"/><rect x="13.6" y="6.8" width="2.1" height="2.1" fill="#f8e890"/><rect x="6.0" y="46.9" width="0.9" height="0.9" fill="#a07820"/><rect x="48.9" y="38.5" width="1.0" height="1.0" fill="#8c8a2a"/><rect x="58.1" y="18.1" width="1.4" height="1.4" fill="#a07820"/><rect x="56.8" y="67.9" width="1.7" height="1.7" fill="#d0701a"/><rect x="20.9" y="81.9" width="1.6" height="1.6" fill="#e8c050"/><rect x="59.7" y="79.4" width="0.8" height="0.8" fill="#8c8a2a"/><rect x="66.4" y="29.1" width="1.7" height="1.7" fill="#f8e890"/><rect x="7.8" y="85.0" width="0.9" height="0.9" fill="#f2d870"/><rect x="27.2" y="83.2" width="1.7" height="1.7" fill="#c0a030"/><rect x="14.1" y="77.8" width="1.8" height="1.8" fill="#a07820"/><rect x="42.6" y="42.8" width="2.0" height="2.0" fill="#a07820"/><rect x="53.0" y="67.3" width="1.2" height="1.2" fill="#7a8a30"/><rect x="58.8" y="59.2" width="1.8" height="1.8" fill="#c0a030"/><rect x="35.4" y="38.7" width="2.0" height="2.0" fill="#8c8a2a"/><rect x="15.6" y="52.5" width="1.8" height="1.8" fill="#f2d870"/><rect x="0.4" y="2.6" width="1.1" height="1.1" fill="#8c8a2a"/><rect x="5.0" y="21.4" width="1.4" height="1.4" fill="#d0701a"/><rect x="35.1" y="12.5" width="0.9" height="0.9" fill="#c0a030"/><rect x="46.8" y="67.0" width="0.9" height="0.9" fill="#e8c050"/><rect x="45.3" y="8.2" width="2.1" height="2.1" fill="#c0a030"/><rect x="50.9" y="20.9" width="1.8" height="1.8" fill="#8c8a2a"/><rect x="56.3" y="36.9" width="2.1" height="2.1" fill="#8c8a2a"/><rect x="57.4" y="14.7" width="1.1" height="1.1" fill="#c0a030"/><rect x="55.1" y="54.8" width="1.1" height="1.1" fill="#c0a030"/><rect x="12.7" y="74.8" width="1.4" height="1.4" fill="#c0a030"/><rect x="7.5" y="5.6" width="2.1" height="2.1" fill="#f2d870"/><rect x="52.1" y="48.5" width="1.8" height="1.8" fill="#c0a030"/><rect x="62.4" y="20.1" width="2.1" height="2.1" fill="#7a8a30"/><rect x="9.9" y="16.4" width="0.9" height="0.9" fill="#f8e890"/><rect x="26.3" y="20.5" width="1.6" height="1.6" fill="#d0701a"/><rect x="59.9" y="2.7" width="1.1" height="1.1" fill="#f2d870"/><rect x="39.2" y="6.6" width="2.1" height="2.1" fill="#8c8a2a"/><rect x="58.8" y="32.4" width="1.5" height="1.5" fill="#f8e890"/><rect x="29.3" y="17.8" width="1.0" height="1.0" fill="#c0a030"/><rect x="4.8" y="16.9" width="1.7" height="1.7" fill="#f2d870"/><rect x="28.1" y="26.3" width="1.6" height="1.6" fill="#7a8a30"/><rect x="57.1" y="50.1" width="0.8" height="0.8" fill="#f8e890"/><rect x="64.7" y="56.4" width="2.2" height="2.2" fill="#c0a030"/><rect x="9.5" y="64.2" width="1.8" height="1.8" fill="#f8e890"/><rect x="49.6" y="15.6" width="2.0" height="2.0" fill="#f8e890"/><rect x="22.3" y="27.1" width="1.3" height="1.3" fill="#f8e890"/><rect x="49.1" y="31.6" width="1.4" height="1.4" fill="#d0701a"/><rect x="38.9" y="42.9" width="1.6" height="1.6" fill="#d0701a"/><rect x="33.0" y="53.7" width="1.6" height="1.6" fill="#f8e890"/><rect x="52.4" y="53.1" width="1.2" height="1.2" fill="#8c8a2a"/><rect x="40.6" y="24.1" width="2.1" height="2.1" fill="#7a8a30"/><rect x="28.4" y="69.3" width="1.7" height="1.7" fill="#7a8a30"/><rect x="37.9" y="66.0" width="1.3" height="1.3" fill="#8c8a2a"/><rect x="44.6" y="56.6" width="0.9" height="0.9" fill="#a07820"/><rect x="61.6" y="81.9" width="1.4" height="1.4" fill="#c0a030"/><rect x="10.0" y="82.7" width="0.9" height="0.9" fill="#a07820"/><rect x="52.1" y="78.2" width="1.8" height="1.8" fill="#7a8a30"/><rect x="65.2" y="13.0" width="1.4" height="1.4" fill="#c0a030"/><rect x="14.1" y="49.0" width="1.7" height="1.7" fill="#d0701a"/><rect x="42.5" y="78.2" width="1.1" height="1.1" fill="#e8c050"/><rect x="8.2" y="87.6" width="1.7" height="1.7" fill="#f8e890"/><rect x="31.7" y="50.7" width="2.0" height="2.0" fill="#a07820"/><rect x="20.7" y="47.8" width="2.2" height="2.2" fill="#a07820"/><rect x="37.4" y="3.4" width="1.0" height="1.0" fill="#e8c050"/><rect x="47.4" y="52.9" width="1.9" height="1.9" fill="#7a8a30"/><rect x="64.6" y="43.0" width="1.5" height="1.5" fill="#f2d870"/><rect x="2.2" y="58.5" width="1.3" height="1.3" fill="#8c8a2a"/><rect x="1.9" y="74.8" width="1.2" height="1.2" fill="#8c8a2a"/><rect x="5.9" y="3.8" width="2.1" height="2.1" fill="#a07820"/><rect x="35.9" y="0.2" width="1.3" height="1.3" fill="#a07820"/><rect x="4.2" y="18.4" width="2.1" height="2.1" fill="#e8c050"/><rect x="3.8" y="51.3" width="0.9" height="0.9" fill="#d0701a"/><rect x="29.0" y="71.4" width="1.4" height="1.4" fill="#d0701a"/><rect x="55.1" y="9.2" width="1.5" height="1.5" fill="#8c8a2a"/><rect x="43.8" y="70.0" width="1.5" height="1.5" fill="#a07820"/><rect x="46.1" y="55.3" width="1.1" height="1.1" fill="#f8e890"/><rect x="18.4" y="42.3" width="2.2" height="2.2" fill="#e8c050"/><rect x="54.7" y="54.5" width="1.0" height="1.0" fill="#c0a030"/><rect x="39.8" y="35.9" width="1.0" height="1.0" fill="#7a8a30"/><rect x="11.9" y="58.1" width="2.1" height="2.1" fill="#c0a030"/><rect x="64.4" y="62.8" width="1.8" height="1.8" fill="#e8c050"/><rect x="4.4" y="42.3" width="2.0" height="2.0" fill="#e8c050"/><rect x="23.5" y="50.0" width="0.8" height="0.8" fill="#f8e890"/><rect x="60.8" y="40.9" width="1.0" height="1.0" fill="#f8e890"/><rect x="41.9" y="10.5" width="1.3" height="1.3" fill="#8c8a2a"/><rect x="65.8" y="24.6" width="1.2" height="1.2" fill="#e8c050"/><rect x="35.8" y="67.3" width="1.1" height="1.1" fill="#7a8a30"/><rect x="16.8" y="18.9" width="2.1" height="2.1" fill="#f8e890"/><rect x="24.7" y="64.9" width="1.2" height="1.2" fill="#8c8a2a"/><rect x="9.3" y="81.0" width="1.1" height="1.1" fill="#d0701a"/><rect x="7.3" y="20.0" width="1.9" height="1.9" fill="#f8e890"/><rect x="46.0" y="83.5" width="1.8" height="1.8" fill="#d0701a"/><rect x="56.5" y="71.6" width="0.8" height="0.8" fill="#f8e890"/><rect x="43.2" y="9.7" width="2.0" height="2.0" fill="#c0a030"/><rect x="17.1" y="5.1" width="1.5" height="1.5" fill="#c0a030"/><rect x="27.9" y="77.1" width="0.8" height="0.8" fill="#e8c050"/><rect x="53.7" y="26.0" width="1.1" height="1.1" fill="#d0701a"/><rect x="47.9" y="4.4" width="1.9" height="1.9" fill="#d0701a"/><rect x="2.9" y="67.3" width="1.7" height="1.7" fill="#f8e890"/><rect x="66.4" y="12.7" width="2.2" height="2.2" fill="#c0a030"/><rect x="23.8" y="84.1" width="1.3" height="1.3" fill="#8c8a2a"/><rect x="49.9" y="20.1" width="0.9" height="0.9" fill="#8c8a2a"/><rect x="64.3" y="44.8" width="1.2" height="1.2" fill="#d0701a"/><rect x="1.7" y="30.8" width="0.9" height="0.9" fill="#c0a030"/><rect x="9.1" y="26.6" width="1.9" height="1.9" fill="#f8e890"/><rect x="64.9" y="24.1" width="1.3" height="1.3" fill="#f8e890"/><rect x="41.8" y="15.3" width="1.5" height="1.5" fill="#e8c050"/><rect x="4.9" y="60.2" width="2.1" height="2.1" fill="#c0a030"/><rect x="44.9" y="1.7" width="1.7" height="1.7" fill="#d0701a"/><rect x="14.9" y="37.0" width="1.5" height="1.5" fill="#f8e890"/><rect x="11.8" y="61.7" width="1.7" height="1.7" fill="#c0a030"/><rect x="59.3" y="48.4" width="1.4" height="1.4" fill="#d0701a"/><rect x="26.0" y="16.4" width="0.8" height="0.8" fill="#f8e890"/><rect x="38.0" y="54.2" width="1.0" height="1.0" fill="#f8e890"/><rect x="37.3" y="66.1" width="1.7" height="1.7" fill="#f8e890"/><rect x="35.8" y="77.6" width="1.5" height="1.5" fill="#d0701a"/><rect x="61.2" y="64.1" width="1.2" height="1.2" fill="#d0701a"/><rect x="50.1" y="43.1" width="1.2" height="1.2" fill="#c0a030"/><rect x="59.7" y="11.9" width="1.4" height="1.4" fill="#c0a030"/><rect x="54.0" y="9.5" width="1.3" height="1.3" fill="#c0a030"/><rect x="64.5" y="47.3" width="1.9" height="1.9" fill="#d0701a"/><rect x="64.7" y="27.7" width="2.0" height="2.0" fill="#e8c050"/><rect x="15.6" y="88.8" width="1.1" height="1.1" fill="#f8e890"/><rect x="13.1" y="24.7" width="2.1" height="2.1" fill="#8c8a2a"/><rect x="14.5" y="34.0" width="2.2" height="2.2" fill="#e8c050"/><rect x="52.3" y="87.5" width="2.1" height="2.1" fill="#f2d870"/><rect x="3.3" y="7.3" width="2.0" height="2.0" fill="#a07820"/><rect x="28.9" y="64.7" width="2.0" height="2.0" fill="#e8c050"/><rect x="6.5" y="83.1" width="1.7" height="1.7" fill="#7a8a30"/><rect x="45.0" y="83.9" width="1.6" height="1.6" fill="#8c8a2a"/><rect x="40.7" y="90.1" width="1.9" height="1.9" fill="#f8e890"/><rect x="54.2" y="57.1" width="1.7" height="1.7" fill="#d0701a"/><rect x="10.1" y="15.5" width="1.6" height="1.6" fill="#e8c050"/><rect x="8.7" y="20.1" width="1.1" height="1.1" fill="#f8e890"/><rect x="26.2" y="59.6" width="2.0" height="2.0" fill="#c0a030"/><rect x="45.2" y="25.3" width="2.1" height="2.1" fill="#7a8a30"/><rect x="37.7" y="8.2" width="1.1" height="1.1" fill="#d0701a"/><rect x="29.1" y="51.3" width="1.4" height="1.4" fill="#a07820"/><rect x="9.2" y="23.3" width="1.2" height="1.2" fill="#f8e890"/><rect x="44.3" y="60.0" width="1.4" height="1.4" fill="#f2d870"/><rect x="12.1" y="77.7" width="1.0" height="1.0" fill="#c0a030"/><rect x="7.4" y="69.9" width="1.7" height="1.7" fill="#d0701a"/><rect x="19.4" y="1.9" width="1.9" height="1.9" fill="#8c8a2a"/><rect x="62.4" y="79.8" width="1.6" height="1.6" fill="#7a8a30"/><rect x="15.4" y="73.3" width="1.4" height="1.4" fill="#7a8a30"/><rect x="45.6" y="20.3" width="1.6" height="1.6" fill="#f2d870"/><rect x="12.7" y="69.6" width="1.2" height="1.2" fill="#a07820"/><rect x="0.9" y="44.6" width="1.7" height="1.7" fill="#7a8a30"/><rect x="2.3" y="83.5" width="2.0" height="2.0" fill="#d0701a"/><rect x="58.9" y="48.7" width="0.9" height="0.9" fill="#7a8a30"/><rect x="59.3" y="11.1" width="1.9" height="1.9" fill="#f2d870"/><rect x="52.3" y="16.7" width="2.0" height="2.0" fill="#7a8a30"/><rect x="15.8" y="29.4" width="1.1" height="1.1" fill="#f8e890"/><rect x="10.5" y="80.1" width="1.2" height="1.2" fill="#c0a030"/><rect x="58.7" y="29.4" width="1.8" height="1.8" fill="#a07820"/><rect x="24.0" y="74.0" width="2.1" height="2.1" fill="#a07820"/><rect x="46.7" y="76.9" width="1.9" height="1.9" fill="#7a8a30"/><rect x="16.4" y="35.4" width="0.8" height="0.8" fill="#e8c050"/><rect x="24.3" y="80.2" width="1.2" height="1.2" fill="#c0a030"/><rect x="48.1" y="4.7" width="1.0" height="1.0" fill="#f2d870"/><rect x="28.3" y="49.4" width="1.6" height="1.6" fill="#a07820"/><rect x="19.7" y="70.1" width="2.1" height="2.1" fill="#c0a030"/><rect x="21.2" y="0.1" width="2.1" height="2.1" fill="#f2d870"/><rect x="20.2" y="5.4" width="1.6" height="1.6" fill="#f8e890"/><rect x="31.9" y="9.2" width="0.9" height="0.9" fill="#d0701a"/><rect x="11.2" y="75.1" width="0.8" height="0.8" fill="#c0a030"/><rect x="58.7" y="48.5" width="1.5" height="1.5" fill="#f8e890"/><rect x="47.2" y="84.7" width="1.2" height="1.2" fill="#c0a030"/><rect x="2.5" y="33.2" width="1.9" height="1.9" fill="#7a8a30"/><rect x="47.9" y="33.1" width="1.4" height="1.4" fill="#c0a030"/><rect x="20.8" y="23.3" width="1.1" height="1.1" fill="#d0701a"/><rect x="37.8" y="87.3" width="1.1" height="1.1" fill="#7a8a30"/><rect x="26.4" y="68.3" width="1.6" height="1.6" fill="#c0a030"/><rect x="11.4" y="38.3" width="1.4" height="1.4" fill="#7a8a30"/><rect x="53.9" y="76.1" width="1.8" height="1.8" fill="#d0701a"/><rect x="6.7" y="38.5" width="2.1" height="2.1" fill="#f8e890"/><rect x="23.0" y="16.5" width="0.8" height="0.8" fill="#8c8a2a"/><rect x="57.7" y="85.2" width="1.6" height="1.6" fill="#f2d870"/><rect x="9.4" y="51.5" width="2.1" height="2.1" fill="#7a8a30"/><rect x="60.1" y="42.2" width="1.0" height="1.0" fill="#c0a030"/><rect x="42.7" y="1.3" width="1.1" height="1.1" fill="#e8c050"/><rect x="23.3" y="74.7" width="2.2" height="2.2" fill="#f2d870"/><rect x="15.5" y="51.2" width="1.3" height="1.3" fill="#f2d870"/><rect x="9.4" y="45.2" width="1.0" height="1.0" fill="#f8e890"/><rect x="6.5" y="47.4" width="1.0" height="1.0" fill="#d0701a"/><rect x="11.5" y="47.9" width="1.8" height="1.8" fill="#a07820"/><rect x="54.5" y="36.0" width="2.1" height="2.1" fill="#a07820"/><rect x="10.1" y="88.0" width="1.7" height="1.7" fill="#8c8a2a"/><rect x="10.3" y="70.2" width="1.0" height="1.0" fill="#f8e890"/><rect x="59.5" y="38.0" width="1.6" height="1.6" fill="#e8c050"/><rect x="4.3" y="58.1" width="1.4" height="1.4" fill="#f8e890"/><rect x="30.7" y="13.0" width="1.0" height="1.0" fill="#7a8a30"/><rect x="60.2" y="73.9" width="1.6" height="1.6" fill="#7a8a30"/><rect x="24.4" y="83.4" width="1.5" height="1.5" fill="#f8e890"/><rect x="23.7" y="71.0" width="1.9" height="1.9" fill="#f2d870"/><rect x="24.5" y="18.0" width="2.0" height="2.0" fill="#c0a030"/><rect x="41.3" y="61.3" width="2.0" height="2.0" fill="#7a8a30"/><rect x="10.7" y="36.1" width="1.8" height="1.8" fill="#e8c050"/><rect x="0.5" y="27.8" width="1.9" height="1.9" fill="#e8c050"/><rect x="47.0" y="25.3" width="2.1" height="2.1" fill="#7a8a30"/><rect x="41.8" y="37.2" width="0.9" height="0.9" fill="#c0a030"/><rect x="60.1" y="17.8" width="1.0" height="1.0" fill="#7a8a30"/><rect x="55.9" y="60.2" width="1.0" height="1.0" fill="#e8c050"/><rect x="2.0" y="8.2" width="1.3" height="1.3" fill="#a07820"/><rect x="29.7" y="25.3" width="1.8" height="1.8" fill="#8c8a2a"/><rect x="7.9" y="54.0" width="1.0" height="1.0" fill="#c0a030"/><rect x="43.6" y="54.1" width="1.5" height="1.5" fill="#f8e890"/><rect x="30.8" y="24.5" width="1.2" height="1.2" fill="#c0a030"/><rect x="57.1" y="62.6" width="1.6" height="1.6" fill="#c0a030"/><rect x="35.9" y="31.6" width="1.0" height="1.0" fill="#f2d870"/><rect x="37.5" y="17.6" width="0.9" height="0.9" fill="#d0701a"/><rect x="3.7" y="76.7" width="1.6" height="1.6" fill="#7a8a30"/><rect x="15.0" y="43.3" width="2.1" height="2.1" fill="#c0a030"/><rect x="39.5" y="11.8" width="2.1" height="2.1" fill="#f2d870"/><rect x="16.0" y="73.4" width="1.9" height="1.9" fill="#e8c050"/><rect x="34.9" y="12.6" width="1.5" height="1.5" fill="#f2d870"/><rect x="16.0" y="44.3" width="1.7" height="1.7" fill="#e8c050"/><rect x="8.2" y="48.3" width="2.0" height="2.0" fill="#e8c050"/><rect x="48.0" y="53.8" width="1.8" height="1.8" fill="#f8e890"/><rect x="12.6" y="48.2" width="2.1" height="2.1" fill="#f8e890"/><rect x="23.2" y="50.8" width="1.6" height="1.6" fill="#f8e890"/><rect x="26.4" y="27.4" width="1.2" height="1.2" fill="#c0a030"/><rect x="10.6" y="65.8" width="0.9" height="0.9" fill="#d0701a"/><rect x="33.0" y="64.3" width="1.7" height="1.7" fill="#7a8a30"/><rect x="23.7" y="25.7" width="2.1" height="2.1" fill="#e8c050"/><rect x="55.0" y="61.2" width="1.7" height="1.7" fill="#d0701a"/><rect x="62.5" y="31.3" width="1.3" height="1.3" fill="#c0a030"/><rect x="32.0" y="58.0" width="1.1" height="1.1" fill="#7a8a30"/><rect x="44.3" y="19.4" width="1.8" height="1.8" fill="#f8e890"/><rect x="44.3" y="49.9" width="1.7" height="1.7" fill="#f2d870"/><rect x="36.8" y="2.3" width="2.2" height="2.2" fill="#f8e890"/><rect x="50.5" y="9.3" width="1.9" height="1.9" fill="#d0701a"/><rect x="57.7" y="38.6" width="1.2" height="1.2" fill="#7a8a30"/><rect x="7.1" y="54.0" width="1.8" height="1.8" fill="#f8e890"/><rect x="21.2" y="12.7" width="0.8" height="0.8" fill="#c0a030"/><rect x="13.4" y="60.8" width="1.2" height="1.2" fill="#7a8a30"/><rect x="24.8" y="89.3" width="2.1" height="2.1" fill="#d0701a"/><rect x="47.4" y="47.3" width="1.0" height="1.0" fill="#a07820"/><rect x="19.3" y="57.1" width="1.8" height="1.8" fill="#7a8a30"/><rect x="24.3" y="43.3" width="1.1" height="1.1" fill="#f2d870"/><rect x="40.3" y="36.9" width="2.0" height="2.0" fill="#d0701a"/><rect x="57.7" y="20.5" width="1.4" height="1.4" fill="#f8e890"/><rect x="33.8" y="15.2" width="0.9" height="0.9" fill="#f8e890"/><rect x="46.6" y="52.7" width="1.4" height="1.4" fill="#7a8a30"/><rect x="35.5" y="6.5" width="1.2" height="1.2" fill="#e8c050"/><rect x="2.5" y="19.7" width="1.6" height="1.6" fill="#f8e890"/><rect x="39.6" y="87.0" width="1.3" height="1.3" fill="#8c8a2a"/><rect x="20.9" y="47.4" width="1.8" height="1.8" fill="#f8e890"/><rect x="13.6" y="78.7" width="1.4" height="1.4" fill="#a07820"/><rect x="35.3" y="52.2" width="1.6" height="1.6" fill="#f2d870"/><rect x="56.9" y="68.6" width="1.3" height="1.3" fill="#7a8a30"/><rect x="60.7" y="20.7" width="1.3" height="1.3" fill="#a07820"/><rect x="1.5" y="53.2" width="0.9" height="0.9" fill="#f2d870"/><rect x="58.5" y="44.6" width="1.2" height="1.2" fill="#f8e890"/><rect x="10.0" y="77.1" width="2.1" height="2.1" fill="#8c8a2a"/><rect x="63.2" y="34.7" width="0.9" height="0.9" fill="#7a8a30"/><rect x="53.9" y="19.3" width="1.7" height="1.7" fill="#f8e890"/><rect x="64.8" y="2.9" width="2.1" height="2.1" fill="#8c8a2a"/><rect x="31.0" y="35.7" width="1.5" height="1.5" fill="#f2d870"/><rect x="28.8" y="42.9" width="1.5" height="1.5" fill="#d0701a"/><rect x="47.8" y="1.6" width="0.9" height="0.9" fill="#8c8a2a"/><rect x="54.9" y="82.2" width="2.0" height="2.0" fill="#a07820"/><rect x="63.8" y="5.8" width="1.4" height="1.4" fill="#7a8a30"/><rect x="17.7" y="32.4" width="1.2" height="1.2" fill="#7a8a30"/><rect x="28.7" y="82.8" width="1.9" height="1.9" fill="#8c8a2a"/><rect x="25.4" y="8.7" width="1.5" height="1.5" fill="#e8c050"/><rect x="62.2" y="7.3" width="2.0" height="2.0" fill="#d0701a"/><rect x="17.8" y="38.5" width="1.6" height="1.6" fill="#7a8a30"/><rect x="47.3" y="32.2" width="1.1" height="1.1" fill="#d0701a"/><rect x="33.0" y="72.1" width="0.9" height="0.9" fill="#7a8a30"/><rect x="51.1" y="35.4" width="0.9" height="0.9" fill="#8c8a2a"/><rect x="39.1" y="13.1" width="2.1" height="2.1" fill="#e8c050"/><rect x="61.7" y="57.5" width="2.1" height="2.1" fill="#8c8a2a"/><rect x="34.4" y="17.1" width="1.3" height="1.3" fill="#f2d870"/><rect x="2.5" y="6.6" width="1.5" height="1.5" fill="#7a8a30"/><rect x="11.5" y="0.5" width="1.3" height="1.3" fill="#f8e890"/><rect x="59.9" y="57.0" width="2.0" height="2.0" fill="#a07820"/><rect x="23.4" y="36.1" width="1.6" height="1.6" fill="#f2d870"/><rect x="26.5" y="47.8" width="0.9" height="0.9" fill="#a07820"/><rect x="40.8" y="74.3" width="1.7" height="1.7" fill="#c0a030"/><rect x="57.3" y="51.9" width="0.9" height="0.9" fill="#a07820"/><rect x="46.1" y="0.2" width="2.1" height="2.1" fill="#c0a030"/><rect x="43.3" y="19.9" width="2.1" height="2.1" fill="#7a8a30"/><rect x="22.8" y="47.7" width="1.2" height="1.2" fill="#e8c050"/><rect x="50.0" y="84.5" width="1.4" height="1.4" fill="#f2d870"/><rect x="64.7" y="21.0" width="2.1" height="2.1" fill="#a07820"/><rect x="49.3" y="81.3" width="1.1" height="1.1" fill="#7a8a30"/><rect x="38.8" y="8.3" width="1.3" height="1.3" fill="#f2d870"/><rect x="3.1" y="82.7" width="1.9" height="1.9" fill="#7a8a30"/><rect x="23.3" y="32.8" width="2.1" height="2.1" fill="#a07820"/><rect x="5.7" y="40.5" width="1.4" height="1.4" fill="#a07820"/><rect x="56.9" y="53.7" width="1.1" height="1.1" fill="#a07820"/><rect x="17.3" y="8.3" width="1.3" height="1.3" fill="#f8e890"/><rect x="27.8" y="75.4" width="0.8" height="0.8" fill="#d0701a"/><rect x="50.5" y="9.4" width="1.0" height="1.0" fill="#8c8a2a"/><rect x="37.4" y="30.5" width="1.1" height="1.1" fill="#d0701a"/><rect x="53.0" y="51.9" width="1.8" height="1.8" fill="#7a8a30"/><rect x="53.8" y="37.3" width="1.1" height="1.1" fill="#f2d870"/><rect x="10.6" y="36.2" width="1.4" height="1.4" fill="#a07820"/><rect x="61.0" y="2.6" width="0.8" height="0.8" fill="#c0a030"/><rect x="47.5" y="21.1" width="2.1" height="2.1" fill="#e8c050"/><rect x="32.0" y="42.9" width="1.2" height="1.2" fill="#d0701a"/><rect x="57.1" y="6.5" width="2.0" height="2.0" fill="#f2d870"/><rect x="4.1" y="51.0" width="1.6" height="1.6" fill="#7a8a30"/><rect x="27.3" y="87.6" width="1.8" height="1.8" fill="#a07820"/><rect x="46.5" y="6.8" width="2.0" height="2.0" fill="#8c8a2a"/><rect x="8.2" y="56.9" width="2.1" height="2.1" fill="#f8e890"/><rect x="67.0" y="80.2" width="1.7" height="1.7" fill="#d0701a"/><rect x="36.0" y="21.6" width="1.3" height="1.3" fill="#c0a030"/><rect x="20.4" y="80.0" width="1.8" height="1.8" fill="#c0a030"/><rect x="18.5" y="78.2" width="1.0" height="1.0" fill="#d0701a"/><rect x="58.3" y="46.2" width="1.2" height="1.2" fill="#f8e890"/><rect x="34.1" y="43.8" width="1.4" height="1.4" fill="#f2d870"/><rect x="3.5" y="2.3" width="1.8" height="1.8" fill="#f8e890"/><rect x="61.0" y="76.0" width="2.2" height="2.2" fill="#f2d870"/><rect x="51.2" y="41.6" width="1.0" height="1.0" fill="#f2d870"/><rect x="20.2" y="42.5" width="1.5" height="1.5" fill="#d0701a"/><rect x="60.7" y="31.1" width="1.2" height="1.2" fill="#f8e890"/><rect x="24.8" y="23.0" width="1.0" height="1.0" fill="#7a8a30"/><rect x="43.0" y="5.7" width="1.9" height="1.9" fill="#d0701a"/><rect x="63.1" y="16.6" width="1.1" height="1.1" fill="#c0a030"/><rect x="59.4" y="8.1" width="2.1" height="2.1" fill="#8c8a2a"/><rect x="31.1" y="82.3" width="0.9" height="0.9" fill="#c0a030"/><rect x="51.7" y="90.7" width="1.4" height="1.4" fill="#f2d870"/><rect x="4.7" y="26.5" width="1.7" height="1.7" fill="#f2d870"/><rect x="64.5" y="36.4" width="1.0" height="1.0" fill="#e8c050"/><rect x="35.4" y="27.1" width="2.1" height="2.1" fill="#f2d870"/><rect x="44.4" y="2.5" width="2.2" height="2.2" fill="#a07820"/><rect x="31.1" y="16.2" width="2.0" height="2.0" fill="#a07820"/><rect x="28.2" y="81.5" width="1.6" height="1.6" fill="#7a8a30"/><rect x="55.8" y="21.7" width="1.7" height="1.7" fill="#8c8a2a"/><rect x="7.6" y="70.2" width="1.8" height="1.8" fill="#e8c050"/><rect x="11.3" y="13.4" width="1.9" height="1.9" fill="#a07820"/><rect x="61.1" y="68.4" width="1.8" height="1.8" fill="#e8c050"/><rect x="47.2" y="65.2" width="1.9" height="1.9" fill="#7a8a30"/><rect x="34.6" y="50.6" width="1.0" height="1.0" fill="#f8e890"/><rect x="58.0" y="57.1" width="1.2" height="1.2" fill="#f8e890"/><rect x="63.5" y="14.1" width="1.0" height="1.0" fill="#f2d870"/><rect x="5.1" y="87.8" width="1.9" height="1.9" fill="#d0701a"/><rect x="43.5" y="26.2" width="2.2" height="2.2" fill="#e8c050"/><rect x="36.4" y="50.5" width="1.8" height="1.8" fill="#c0a030"/><rect x="61.4" y="24.7" width="1.2" height="1.2" fill="#c0a030"/><rect x="37.5" y="29.1" width="1.8" height="1.8" fill="#d0701a"/><rect x="43.3" y="19.8" width="1.0" height="1.0" fill="#f2d870"/><rect x="61.8" y="76.1" width="1.5" height="1.5" fill="#f8e890"/><rect x="20.2" y="53.7" width="0.8" height="0.8" fill="#e8c050"/><rect x="30.3" y="64.4" width="2.0" height="2.0" fill="#c0a030"/><rect x="33.1" y="18.4" width="0.9" height="0.9" fill="#a07820"/><rect x="26.9" y="53.5" width="1.2" height="1.2" fill="#c0a030"/><rect x="26.4" y="8.9" width="1.2" height="1.2" fill="#e8c050"/><rect x="18.1" y="56.4" width="1.5" height="1.5" fill="#e8c050"/><rect x="30.0" y="6.9" width="1.3" height="1.3" fill="#7a8a30"/><rect x="57.0" y="91.0" width="1.2" height="1.2" fill="#f2d870"/><rect x="15.7" y="47.3" width="1.0" height="1.0" fill="#7a8a30"/><rect x="62.0" y="41.5" width="0.9" height="0.9" fill="#d0701a"/><rect x="60.2" y="78.3" width="1.8" height="1.8" fill="#c0a030"/><rect x="50.9" y="34.0" width="1.8" height="1.8" fill="#f2d870"/><rect x="10.3" y="39.9" width="1.9" height="1.9" fill="#d0701a"/><rect x="14.1" y="80.8" width="2.1" height="2.1" fill="#e8c050"/><rect x="48.6" y="55.9" width="1.1" height="1.1" fill="#f8e890"/><rect x="2.9" y="56.4" width="2.1" height="2.1" fill="#a07820"/><rect x="25.8" y="47.5" width="1.1" height="1.1" fill="#7a8a30"/><rect x="20.1" y="6.4" width="2.0" height="2.0" fill="#7a8a30"/><rect x="41.9" y="8.7" width="1.3" height="1.3" fill="#e8c050"/><rect x="60.7" y="22.0" width="1.5" height="1.5" fill="#f2d870"/><rect x="18.6" y="0.0" width="2.1" height="2.1" fill="#c0a030"/><rect x="14.3" y="77.1" width="2.0" height="2.0" fill="#d0701a"/><rect x="31.5" y="84.3" width="2.1" height="2.1" fill="#7a8a30"/><rect x="24.9" y="71.6" width="0.9" height="0.9" fill="#e8c050"/><rect x="25.8" y="89.9" width="1.0" height="1.0" fill="#7a8a30"/><rect x="49.5" y="14.7" width="2.2" height="2.2" fill="#d0701a"/><rect x="51.0" y="42.0" width="1.8" height="1.8" fill="#a07820"/><rect x="25.1" y="60.8" width="1.9" height="1.9" fill="#e8c050"/><rect x="46.6" y="39.7" width="1.9" height="1.9" fill="#c0a030"/><rect x="53.3" y="8.8" width="0.9" height="0.9" fill="#c0a030"/><rect x="25.1" y="8.6" width="1.9" height="1.9" fill="#7a8a30"/><rect x="45.0" y="15.0" width="1.9" height="1.9" fill="#d0701a"/><rect x="8.8" y="35.3" width="1.2" height="1.2" fill="#f2d870"/><rect x="6.2" y="66.6" width="1.2" height="1.2" fill="#7a8a30"/><rect x="59.4" y="80.6" width="2.0" height="2.0" fill="#f8e890"/><rect x="52.2" y="29.9" width="1.1" height="1.1" fill="#f2d870"/><rect x="6.9" y="83.5" width="0.8" height="0.8" fill="#7a8a30"/><rect x="41.8" y="26.9" width="0.8" height="0.8" fill="#f8e890"/><rect x="28.0" y="60.4" width="0.8" height="0.8" fill="#c0a030"/><rect x="47.6" y="27.9" width="1.6" height="1.6" fill="#7a8a30"/><rect x="59.2" y="69.0" width="1.9" height="1.9" fill="#c0a030"/><rect x="26.2" y="69.4" width="0.8" height="0.8" fill="#a07820"/><rect x="3.3" y="44.3" width="1.2" height="1.2" fill="#8c8a2a"/><rect x="37.7" y="83.0" width="1.7" height="1.7" fill="#a07820"/><rect x="45.5" y="18.9" width="1.4" height="1.4" fill="#d0701a"/><rect x="9.7" y="85.7" width="1.0" height="1.0" fill="#d0701a"/><rect x="31.4" y="82.5" width="1.5" height="1.5" fill="#8c8a2a"/><rect x="1.8" y="31.1" width="1.4" height="1.4" fill="#d0701a"/><rect x="31.6" y="48.8" width="0.9" height="0.9" fill="#d0701a"/><rect x="50.1" y="86.6" width="0.9" height="0.9" fill="#d0701a"/><rect x="47.7" y="25.1" width="1.0" height="1.0" fill="#a07820"/><rect x="52.6" y="19.8" width="1.0" height="1.0" fill="#f8e890"/><rect x="31.1" y="23.5" width="1.0" height="1.0" fill="#e8c050"/><rect x="38.6" y="2.2" width="2.0" height="2.0" fill="#7a8a30"/><rect x="38.8" y="9.3" width="1.4" height="1.4" fill="#e8c050"/><rect x="49.7" y="84.8" width="2.2" height="2.2" fill="#a07820"/><rect x="36.9" y="42.8" width="1.5" height="1.5" fill="#a07820"/><rect x="23.7" y="60.6" width="1.9" height="1.9" fill="#f8e890"/><rect x="58.1" y="50.5" width="1.6" height="1.6" fill="#f2d870"/><rect x="16.2" y="24.7" width="1.7" height="1.7" fill="#e8c050"/><rect x="11.0" y="62.3" width="0.9" height="0.9" fill="#a07820"/><rect x="21.9" y="44.7" width="1.0" height="1.0" fill="#c0a030"/><rect x="17.0" y="13.1" width="0.9" height="0.9" fill="#f8e890"/><rect x="63.1" y="0.2" width="1.5" height="1.5" fill="#a07820"/><rect x="39.3" y="44.0" width="1.4" height="1.4" fill="#c0a030"/><rect x="7.4" y="82.4" width="1.5" height="1.5" fill="#7a8a30"/><rect x="3.1" y="20.7" width="1.2" height="1.2" fill="#f8e890"/><rect x="14.2" y="70.9" width="1.2" height="1.2" fill="#8c8a2a"/><rect x="8.4" y="63.8" width="1.7" height="1.7" fill="#c0a030"/><rect x="46.3" y="40.4" width="1.9" height="1.9" fill="#d0701a"/><rect x="43.3" y="35.6" width="1.7" height="1.7" fill="#e8c050"/><rect x="15.4" y="62.9" width="1.5" height="1.5" fill="#8c8a2a"/><rect x="33.6" y="78.1" width="1.5" height="1.5" fill="#8c8a2a"/><rect x="48.3" y="88.7" width="1.5" height="1.5" fill="#f2d870"/><rect x="41.1" y="2.9" width="1.6" height="1.6" fill="#f8e890"/><rect x="12.3" y="19.9" width="2.0" height="2.0" fill="#f8e890"/><rect x="48.6" y="25.3" width="1.5" height="1.5" fill="#f2d870"/><rect x="33.6" y="65.7" width="1.5" height="1.5" fill="#f8e890"/><rect x="6.2" y="1.6" width="2.1" height="2.1" fill="#f8e890"/><rect x="44.3" y="29.1" width="1.8" height="1.8" fill="#c0a030"/><rect x="30.8" y="5.7" width="1.3" height="1.3" fill="#8c8a2a"/><rect x="58.4" y="31.7" width="1.7" height="1.7" fill="#f2d870"/><rect x="53.6" y="38.6" width="1.1" height="1.1" fill="#f2d870"/><rect x="34.7" y="64.1" width="2.0" height="2.0" fill="#7a8a30"/><rect x="60.4" y="27.7" width="2.2" height="2.2" fill="#7a8a30"/><rect x="29.6" y="34.2" width="2.1" height="2.1" fill="#d0701a"/><rect x="23.7" y="67.2" width="1.3" height="1.3" fill="#a07820"/><rect x="58.9" y="53.9" width="0.8" height="0.8" fill="#f2d870"/><rect x="49.1" y="33.9" width="0.9" height="0.9" fill="#d0701a"/><rect x="25.7" y="31.6" width="1.4" height="1.4" fill="#e8c050"/><rect x="2.8" y="51.4" width="1.6" height="1.6" fill="#e8c050"/><rect x="26.4" y="35.2" width="1.2" height="1.2" fill="#c0a030"/><rect x="57.9" y="23.0" width="1.1" height="1.1" fill="#a07820"/><rect x="48.8" y="76.0" width="1.2" height="1.2" fill="#f8e890"/><rect x="3.4" y="0.5" width="1.8" height="1.8" fill="#f8e890"/><rect x="61.7" y="17.3" width="1.6" height="1.6" fill="#e8c050"/><rect x="62.0" y="76.3" width="2.1" height="2.1" fill="#d0701a"/><rect x="57.7" y="70.5" width="1.8" height="1.8" fill="#7a8a30"/><rect x="47.9" y="19.2" width="1.2" height="1.2" fill="#f2d870"/><rect x="10.6" y="46.3" width="1.2" height="1.2" fill="#7a8a30"/><rect x="3.4" y="13.7" width="1.8" height="1.8" fill="#8c8a2a"/><rect x="60.5" y="28.5" width="1.8" height="1.8" fill="#f2d870"/><rect x="20.8" y="72.4" width="1.9" height="1.9" fill="#7a8a30"/><rect x="37.4" y="74.1" width="2.0" height="2.0" fill="#c0a030"/><rect x="34.3" y="18.8" width="1.0" height="1.0" fill="#e8c050"/><rect x="41.5" y="13.0" width="0.9" height="0.9" fill="#f8e890"/><rect x="23.4" y="39.0" width="1.4" height="1.4" fill="#e8c050"/><rect x="20.4" y="46.7" width="1.1" height="1.1" fill="#f8e890"/><rect x="53.4" y="4.2" width="1.4" height="1.4" fill="#d0701a"/><rect x="41.3" y="90.2" width="1.3" height="1.3" fill="#a07820"/><rect x="59.5" y="85.7" width="1.2" height="1.2" fill="#a07820"/><rect x="63.7" y="67.2" width="1.0" height="1.0" fill="#f8e890"/><rect x="59.3" y="5.5" width="1.8" height="1.8" fill="#a07820"/><rect x="56.4" y="77.4" width="1.6" height="1.6" fill="#7a8a30"/><rect x="56.4" y="45.0" width="1.4" height="1.4" fill="#e8c050"/><rect x="55.8" y="5.4" width="2.1" height="2.1" fill="#a07820"/><rect x="27.8" y="41.2" width="1.2" height="1.2" fill="#f2d870"/><rect x="18.3" y="1.2" width="1.4" height="1.4" fill="#a07820"/><rect x="31.9" y="82.1" width="2.2" height="2.2" fill="#a07820"/><rect x="49.8" y="32.6" width="2.0" height="2.0" fill="#7a8a30"/><rect x="18.2" y="43.0" width="2.1" height="2.1" fill="#7a8a30"/><rect x="54.9" y="80.7" width="1.2" height="1.2" fill="#c0a030"/><rect x="0.7" y="32.4" width="1.3" height="1.3" fill="#8c8a2a"/><rect x="8.8" y="17.1" width="1.5" height="1.5" fill="#f2d870"/><rect x="24.7" y="14.4" width="1.6" height="1.6" fill="#f8e890"/><rect x="0.5" y="15.6" width="1.6" height="1.6" fill="#e8c050"/><rect x="18.3" y="43.6" width="1.4" height="1.4" fill="#8c8a2a"/><rect x="59.7" y="85.7" width="1.5" height="1.5" fill="#f8e890"/><rect x="57.5" y="0.8" width="1.5" height="1.5" fill="#7a8a30"/><rect x="7.4" y="75.6" width="2.1" height="2.1" fill="#c0a030"/><rect x="64.6" y="0.9" width="1.0" height="1.0" fill="#c0a030"/><rect x="26.7" y="48.5" width="2.0" height="2.0" fill="#f2d870"/><rect x="43.7" y="30.3" width="1.0" height="1.0" fill="#f8e890"/><rect x="12.4" y="89.5" width="1.1" height="1.1" fill="#7a8a30"/><rect x="44.8" y="80.7" width="1.9" height="1.9" fill="#c0a030"/><rect x="22.0" y="9.8" width="1.3" height="1.3" fill="#7a8a30"/><rect x="1.5" y="67.5" width="1.4" height="1.4" fill="#7a8a30"/><rect x="16.6" y="31.1" width="1.7" height="1.7" fill="#c0a030"/><rect x="41.7" y="63.9" width="1.5" height="1.5" fill="#c0a030"/><rect x="9.7" y="36.9" width="2.1" height="2.1" fill="#d0701a"/><rect x="30.2" y="41.7" width="1.8" height="1.8" fill="#f2d870"/><rect x="59.5" y="89.7" width="1.6" height="1.6" fill="#d0701a"/><rect x="61.5" y="6.1" width="1.0" height="1.0" fill="#8c8a2a"/><rect x="28.1" y="64.6" width="1.8" height="1.8" fill="#c0a030"/><rect x="50.2" y="13.1" width="2.2" height="2.2" fill="#f8e890"/><rect x="39.1" y="64.5" width="1.6" height="1.6" fill="#d0701a"/><rect x="48.3" y="50.7" width="2.0" height="2.0" fill="#a07820"/><rect x="60.4" y="9.2" width="1.8" height="1.8" fill="#a07820"/><rect x="20.9" y="27.3" width="2.0" height="2.0" fill="#8c8a2a"/><rect x="57.4" y="70.6" width="1.8" height="1.8" fill="#c0a030"/><rect x="38.0" y="17.0" width="1.8" height="1.8" fill="#7a8a30"/><rect x="10.2" y="2.3" width="1.9" height="1.9" fill="#e8c050"/><rect x="42.8" y="79.7" width="1.9" height="1.9" fill="#c0a030"/><rect x="27.9" y="36.9" width="0.9" height="0.9" fill="#c0a030"/><rect x="45.3" y="26.8" width="1.6" height="1.6" fill="#8c8a2a"/><rect x="1.0" y="62.4" width="1.8" height="1.8" fill="#f8e890"/><rect x="39.7" y="20.7" width="2.0" height="2.0" fill="#a07820"/><rect x="10.1" y="86.5" width="2.2" height="2.2" fill="#e8c050"/><rect x="65.6" y="54.1" width="1.5" height="1.5" fill="#f8e890"/><rect x="28.5" y="49.2" width="2.2" height="2.2" fill="#c0a030"/><rect x="62.3" y="18.7" width="1.4" height="1.4" fill="#7a8a30"/><rect x="2.5" y="7.8" width="2.2" height="2.2" fill="#7a8a30"/><rect x="10.3" y="45.1" width="0.8" height="0.8" fill="#a07820"/><rect x="30.9" y="80.3" width="1.1" height="1.1" fill="#8c8a2a"/><rect x="13.3" y="44.5" width="2.0" height="2.0" fill="#7a8a30"/><rect x="25.4" y="24.0" width="1.4" height="1.4" fill="#f2d870"/><rect x="3.2" y="70.7" width="1.3" height="1.3" fill="#c0a030"/><rect x="24.7" y="47.6" width="1.6" height="1.6" fill="#8c8a2a"/><rect x="15.7" y="13.8" width="1.6" height="1.6" fill="#7a8a30"/><rect x="5.7" y="64.0" width="1.0" height="1.0" fill="#8c8a2a"/><rect x="43.5" y="57.9" width="0.9" height="0.9" fill="#c0a030"/><rect x="0.8" y="46.0" width="2.0" height="2.0" fill="#7a8a30"/><rect x="62.4" y="59.8" width="1.6" height="1.6" fill="#f2d870"/><rect x="15.3" y="2.3" width="1.9" height="1.9" fill="#d0701a"/><rect x="23.0" y="26.7" width="2.0" height="2.0" fill="#f8e890"/><rect x="42.3" y="59.7" width="1.3" height="1.3" fill="#a07820"/><rect x="20.8" y="62.1" width="1.3" height="1.3" fill="#c0a030"/><rect x="5.2" y="61.2" width="0.9" height="0.9" fill="#f8e890"/><rect x="66.4" y="34.5" width="1.6" height="1.6" fill="#f2d870"/><rect x="57.8" y="76.6" width="1.2" height="1.2" fill="#c0a030"/><rect x="19.2" y="70.9" width="1.9" height="1.9" fill="#c0a030"/><rect x="19.7" y="86.9" width="1.4" height="1.4" fill="#f8e890"/><rect x="9.2" y="10.6" width="2.0" height="2.0" fill="#8c8a2a"/><rect x="48.9" y="35.5" width="2.0" height="2.0" fill="#a07820"/><rect x="22.9" y="70.6" width="1.9" height="1.9" fill="#7a8a30"/><rect x="34.5" y="71.7" width="1.5" height="1.5" fill="#7a8a30"/><rect x="25.5" y="76.1" width="1.5" height="1.5" fill="#c0a030"/><rect x="46.9" y="83.5" width="1.4" height="1.4" fill="#c0a030"/><rect x="49.1" y="90.2" width="1.9" height="1.9" fill="#7a8a30"/><rect x="18.2" y="32.6" width="1.9" height="1.9" fill="#f2d870"/><rect x="58.5" y="15.4" width="2.1" height="2.1" fill="#f8e890"/><rect x="43.2" y="39.6" width="1.0" height="1.0" fill="#8c8a2a"/><rect x="48.8" y="81.2" width="1.5" height="1.5" fill="#c0a030"/><rect x="66.3" y="22.6" width="1.5" height="1.5" fill="#d0701a"/><rect x="55.2" y="83.6" width="2.0" height="2.0" fill="#7a8a30"/><rect x="60.5" y="18.4" width="1.6" height="1.6" fill="#f2d870"/><rect x="27.5" y="52.3" width="1.0" height="1.0" fill="#f2d870"/><rect x="15.2" y="79.6" width="1.8" height="1.8" fill="#e8c050"/><rect x="66.8" y="47.3" width="1.6" height="1.6" fill="#a07820"/><rect x="26.6" y="55.1" width="0.9" height="0.9" fill="#c0a030"/><rect x="6.9" y="78.0" width="1.8" height="1.8" fill="#7a8a30"/><rect x="21.6" y="66.4" width="1.5" height="1.5" fill="#d0701a"/><rect x="27.2" y="68.6" width="1.8" height="1.8" fill="#f8e890"/><rect x="18.8" y="70.7" width="1.1" height="1.1" fill="#e8c050"/><rect x="50.5" y="77.8" width="2.1" height="2.1" fill="#f2d870"/><rect x="51.8" y="60.1" width="2.1" height="2.1" fill="#d0701a"/><rect x="40.6" y="68.7" width="0.8" height="0.8" fill="#8c8a2a"/><rect x="12.9" y="73.4" width="1.8" height="1.8" fill="#f8e890"/><rect x="9.2" y="8.9" width="2.0" height="2.0" fill="#7a8a30"/><rect x="29.9" y="69.3" width="1.5" height="1.5" fill="#8c8a2a"/><rect x="60.1" y="5.6" width="1.2" height="1.2" fill="#d0701a"/><rect x="2.1" y="58.4" width="1.3" height="1.3" fill="#f2d870"/><rect x="11.0" y="53.2" width="1.8" height="1.8" fill="#d0701a"/><rect x="48.6" y="82.6" width="1.9" height="1.9" fill="#8c8a2a"/><rect x="53.8" y="57.1" width="2.0" height="2.0" fill="#8c8a2a"/><rect x="62.3" y="75.2" width="1.7" height="1.7" fill="#7a8a30"/><rect x="31.7" y="37.6" width="0.9" height="0.9" fill="#f8e890"/><rect x="49.0" y="52.0" width="2.2" height="2.2" fill="#f8e890"/><rect x="26.7" y="11.1" width="0.9" height="0.9" fill="#e8c050"/><rect x="54.3" y="8.4" width="1.8" height="1.8" fill="#7a8a30"/><rect x="65.3" y="19.3" width="1.2" height="1.2" fill="#c0a030"/><rect x="13.0" y="89.7" width="0.9" height="0.9" fill="#c0a030"/><rect x="14.5" y="74.6" width="1.0" height="1.0" fill="#d0701a"/><rect x="10.1" y="48.9" width="1.0" height="1.0" fill="#d0701a"/><rect x="66.2" y="23.6" width="1.9" height="1.9" fill="#8c8a2a"/><rect x="49.8" y="16.9" width="1.0" height="1.0" fill="#f8e890"/><rect x="20.4" y="28.4" width="1.2" height="1.2" fill="#d0701a"/><rect x="31.5" y="1.1" width="1.1" height="1.1" fill="#f8e890"/><rect x="16.2" y="86.5" width="1.9" height="1.9" fill="#f8e890"/><rect x="59.6" y="3.6" width="1.7" height="1.7" fill="#a07820"/><rect x="10.5" y="20.2" width="1.4" height="1.4" fill="#f2d870"/><rect x="21.6" y="32.8" width="1.3" height="1.3" fill="#f8e890"/><rect x="40.4" y="10.8" width="1.6" height="1.6" fill="#a07820"/><rect x="26.4" y="88.6" width="1.7" height="1.7" fill="#7a8a30"/><rect x="38.9" y="0.1" width="2.1" height="2.1" fill="#a07820"/><rect x="28.5" y="54.6" width="1.7" height="1.7" fill="#f2d870"/><rect x="37.4" y="1.9" width="1.2" height="1.2" fill="#d0701a"/><rect x="38.2" y="28.8" width="0.9" height="0.9" fill="#f2d870"/><rect x="6.3" y="85.6" width="1.5" height="1.5" fill="#a07820"/><rect x="27.6" y="19.7" width="2.0" height="2.0" fill="#d0701a"/><rect x="48.8" y="62.3" width="0.9" height="0.9" fill="#d0701a"/><rect x="65.2" y="73.1" width="1.2" height="1.2" fill="#8c8a2a"/><rect x="6.7" y="69.6" width="1.1" height="1.1" fill="#a07820"/><rect x="55.3" y="71.0" width="1.2" height="1.2" fill="#a07820"/><rect x="17.1" y="30.6" width="1.7" height="1.7" fill="#d0701a"/><rect x="37.9" y="90.4" width="1.7" height="1.7" fill="#c0a030"/><rect x="7.0" y="85.0" width="1.2" height="1.2" fill="#c0a030"/><rect x="7.5" y="40.3" width="2.0" height="2.0" fill="#f8e890"/><rect x="55.9" y="90.3" width="1.8" height="1.8" fill="#d0701a"/><rect x="27.3" y="73.0" width="0.8" height="0.8" fill="#a07820"/><rect x="27.5" y="44.7" width="2.0" height="2.0" fill="#d0701a"/><rect x="46.3" y="21.3" width="1.9" height="1.9" fill="#7a8a30"/><rect x="62.7" y="53.4" width="1.5" height="1.5" fill="#8c8a2a"/><rect x="24.8" y="50.5" width="1.2" height="1.2" fill="#f2d870"/><rect x="58.5" y="10.7" width="1.4" height="1.4" fill="#7a8a30"/><rect x="27.4" y="80.0" width="1.6" height="1.6" fill="#f8e890"/><rect x="7.1" y="27.7" width="1.9" height="1.9" fill="#d0701a"/><rect x="1.4" y="74.1" width="1.1" height="1.1" fill="#8c8a2a"/><rect x="22.9" y="13.5" width="0.9" height="0.9" fill="#d0701a"/><rect x="20.4" y="3.5" width="1.0" height="1.0" fill="#f2d870"/><rect x="32.5" y="35.6" width="2.2" height="2.2" fill="#a07820"/><rect x="13.9" y="72.9" width="1.7" height="1.7" fill="#7a8a30"/><rect x="43.3" y="27.5" width="0.9" height="0.9" fill="#f2d870"/><rect x="24.8" y="34.7" width="1.8" height="1.8" fill="#8c8a2a"/><rect x="32.0" y="68.5" width="1.0" height="1.0" fill="#f2d870"/><rect x="36.0" y="0.7" width="2.2" height="2.2" fill="#d0701a"/><rect x="4.9" y="45.2" width="1.6" height="1.6" fill="#c0a030"/><rect x="61.6" y="58.1" width="1.5" height="1.5" fill="#a07820"/><rect x="38.2" y="20.8" width="1.3" height="1.3" fill="#f2d870"/><rect x="36.2" y="64.3" width="1.5" height="1.5" fill="#d0701a"/><rect x="54.2" y="31.1" width="1.9" height="1.9" fill="#e8c050"/><rect x="12.2" y="16.5" width="1.6" height="1.6" fill="#f2d870"/><rect x="42.2" y="38.8" width="1.4" height="1.4" fill="#f8e890"/><rect x="18.9" y="15.3" width="2.0" height="2.0" fill="#a07820"/><rect x="37.0" y="84.0" width="1.5" height="1.5" fill="#7a8a30"/><rect x="9.4" y="59.5" width="1.0" height="1.0" fill="#d0701a"/><rect x="66.8" y="74.1" width="0.8" height="0.8" fill="#8c8a2a"/><rect x="42.1" y="64.2" width="1.4" height="1.4" fill="#7a8a30"/><rect x="18.1" y="0.7" width="1.4" height="1.4" fill="#8c8a2a"/><rect x="42.7" y="54.5" width="1.9" height="1.9" fill="#e8c050"/><rect x="66.9" y="17.6" width="1.8" height="1.8" fill="#8c8a2a"/><rect x="35.7" y="13.6" width="1.4" height="1.4" fill="#a07820"/><rect x="51.7" y="13.8" width="1.2" height="1.2" fill="#f2d870"/><rect x="4.1" y="87.1" width="1.4" height="1.4" fill="#e8c050"/><rect x="18.6" y="13.5" width="1.9" height="1.9" fill="#f8e890"/><rect x="52.9" y="6.6" width="1.2" height="1.2" fill="#e8c050"/><rect x="32.2" y="86.7" width="1.8" height="1.8" fill="#a07820"/><rect x="49.9" y="36.1" width="1.0" height="1.0" fill="#f8e890"/><rect x="64.8" y="72.1" width="1.6" height="1.6" fill="#f8e890"/><rect x="26.0" y="66.4" width="2.1" height="2.1" fill="#f8e890"/><rect x="26.5" y="2.3" width="0.9" height="0.9" fill="#a07820"/><rect x="47.5" y="65.6" width="0.8" height="0.8" fill="#8c8a2a"/><rect x="1.7" y="61.2" width="1.5" height="1.5" fill="#8c8a2a"/><rect x="41.1" y="59.5" width="0.9" height="0.9" fill="#7a8a30"/><rect x="43.7" y="47.3" width="1.2" height="1.2" fill="#f2d870"/><rect x="41.2" y="70.2" width="1.3" height="1.3" fill="#f2d870"/><rect x="11.8" y="80.9" width="2.2" height="2.2" fill="#a07820"/><rect x="28.4" y="42.5" width="2.1" height="2.1" fill="#f2d870"/><rect x="29.4" y="42.6" width="2.1" height="2.1" fill="#7a8a30"/><rect x="38.9" y="17.5" width="1.9" height="1.9" fill="#e8c050"/><rect x="58.9" y="34.2" width="1.9" height="1.9" fill="#a07820"/><rect x="29.4" y="24.5" width="2.0" height="2.0" fill="#8c8a2a"/><rect x="41.1" y="62.1" width="2.0" height="2.0" fill="#c0a030"/><rect x="6.2" y="13.2" width="1.8" height="1.8" fill="#7a8a30"/><rect x="11.1" y="15.7" width="1.1" height="1.1" fill="#7a8a30"/><rect x="16.6" y="5.0" width="2.0" height="2.0" fill="#d0701a"/><rect x="60.1" y="26.5" width="1.8" height="1.8" fill="#d0701a"/><rect x="23.2" y="86.9" width="1.7" height="1.7" fill="#8c8a2a"/><rect x="50.1" y="83.4" width="2.1" height="2.1" fill="#f8e890"/><rect x="7.3" y="66.4" width="1.8" height="1.8" fill="#f2d870"/><rect x="47.4" y="30.4" width="1.4" height="1.4" fill="#c0a030"/><rect x="19.8" y="12.2" width="1.3" height="1.3" fill="#c0a030"/><rect x="61.0" y="38.8" width="0.9" height="0.9" fill="#8c8a2a"/><rect x="22.1" y="27.7" width="1.3" height="1.3" fill="#a07820"/><rect x="26.1" y="62.4" width="1.0" height="1.0" fill="#7a8a30"/><rect x="40.2" y="85.6" width="1.3" height="1.3" fill="#f2d870"/><rect x="39.3" y="84.2" width="1.7" height="1.7" fill="#7a8a30"/><rect x="38.2" y="13.4" width="2.1" height="2.1" fill="#8c8a2a"/><rect x="63.2" y="23.7" width="1.7" height="1.7" fill="#a07820"/><rect x="10.4" y="22.2" width="1.9" height="1.9" fill="#8c8a2a"/><rect x="55.5" y="41.3" width="1.4" height="1.4" fill="#c0a030"/><rect x="39.4" y="25.6" width="1.4" height="1.4" fill="#c0a030"/><rect x="23.1" y="5.3" width="1.9" height="1.9" fill="#a07820"/><rect x="18.7" y="1.4" width="1.4" height="1.4" fill="#e8c050"/><rect x="1.7" y="16.3" width="1.1" height="1.1" fill="#7a8a30"/><rect x="40.3" y="64.1" width="1.1" height="1.1" fill="#c0a030"/><rect x="17.5" y="43.7" width="1.6" height="1.6" fill="#d0701a"/><rect x="26.2" y="19.8" width="1.3" height="1.3" fill="#e8c050"/><rect x="59.7" y="36.8" width="1.7" height="1.7" fill="#d0701a"/><rect x="45.2" y="1.8" width="1.9" height="1.9" fill="#7a8a30"/><rect x="22.2" y="90.9" width="2.0" height="2.0" fill="#a07820"/><rect x="60.8" y="41.0" width="1.4" height="1.4" fill="#7a8a30"/><rect x="58.4" y="56.6" width="2.2" height="2.2" fill="#8c8a2a"/><rect x="4.4" y="57.5" width="1.9" height="1.9" fill="#f2d870"/><rect x="16.7" y="42.6" width="1.9" height="1.9" fill="#e8c050"/><rect x="56.5" y="73.9" width="2.1" height="2.1" fill="#d0701a"/><rect x="33.7" y="37.0" width="1.6" height="1.6" fill="#8c8a2a"/><rect x="42.4" y="80.1" width="0.9" height="0.9" fill="#a07820"/><rect x="40.0" y="8.1" width="1.5" height="1.5" fill="#f2d870"/><rect x="39.4" y="22.6" width="1.8" height="1.8" fill="#8c8a2a"/><rect x="42.8" y="36.1" width="1.6" height="1.6" fill="#e8c050"/><rect x="48.0" y="77.3" width="2.0" height="2.0" fill="#f8e890"/><rect x="16.9" y="75.0" width="1.6" height="1.6" fill="#e8c050"/><rect x="11.1" y="37.0" width="1.3" height="1.3" fill="#c0a030"/><rect x="35.4" y="33.3" width="1.5" height="1.5" fill="#a07820"/><rect x="64.8" y="26.2" width="1.3" height="1.3" fill="#a07820"/><rect x="51.1" y="12.6" width="1.9" height="1.9" fill="#c0a030"/><rect x="7.5" y="79.5" width="1.3" height="1.3" fill="#d0701a"/><rect x="30.7" y="86.8" width="1.3" height="1.3" fill="#a07820"/><rect x="58.6" y="40.3" width="1.3" height="1.3" fill="#c0a030"/><rect x="28.3" y="42.2" width="1.0" height="1.0" fill="#d0701a"/><rect x="26.7" y="76.8" width="1.8" height="1.8" fill="#f2d870"/><rect x="3.6" y="68.5" width="2.1" height="2.1" fill="#8c8a2a"/><rect x="30.4" y="59.4" width="2.2" height="2.2" fill="#d0701a"/><rect x="13" y="14" width="42" height="66" fill="#dc9a30"/><rect x="13" y="14" width="42" height="66" fill="none" stroke="#f0c860" stroke-width="1.2" stroke-dasharray="1.2 1.2"/><rect x="15" y="17" width="38" height="6" fill="#c87020"/><path d="M17 80V32a5 5 0 0 1 10 0V80z" fill="#b8481a"/><path d="M41 80V32a5 5 0 0 1 10 0V80z" fill="#b8481a"/><path d="M29 80V31a5.5 5.5 0 0 1 11 0V80z" fill="#1c1208"/><rect x="21.9" y="69.9" width="1.6" height="1.6" fill="#e07028"/><rect x="22.1" y="75.2" width="2.0" height="2.0" fill="#e07028"/><rect x="48.9" y="56.1" width="0.9" height="0.9" fill="#f0a040"/><rect x="48.3" y="32.3" width="1.4" height="1.4" fill="#903010"/><rect x="47.9" y="73.5" width="1.7" height="1.7" fill="#f0a040"/><rect x="18.6" y="40.1" width="1.3" height="1.3" fill="#903010"/><rect x="42.6" y="34.4" width="1.1" height="1.1" fill="#903010"/><rect x="24.8" y="74.3" width="1.8" height="1.8" fill="#903010"/><rect x="20.0" y="47.2" width="0.9" height="0.9" fill="#903010"/><rect x="48.5" y="47.0" width="1.5" height="1.5" fill="#f0a040"/><rect x="42.0" y="56.8" width="1.6" height="1.6" fill="#e07028"/><rect x="42.5" y="57.1" width="0.9" height="0.9" fill="#7a2a10"/><rect x="21.2" y="49.4" width="1.2" height="1.2" fill="#903010"/><rect x="19.0" y="30.3" width="1.3" height="1.3" fill="#7a2a10"/><rect x="44.2" y="64.6" width="0.9" height="0.9" fill="#903010"/><rect x="47.3" y="76.2" width="1.1" height="1.1" fill="#903010"/><rect x="20.9" y="68.5" width="1.7" height="1.7" fill="#903010"/><rect x="41.6" y="42.6" width="1.7" height="1.7" fill="#903010"/><rect x="23.5" y="52.3" width="1.1" height="1.1" fill="#e07028"/><rect x="25.2" y="32.6" width="0.9" height="0.9" fill="#e07028"/><rect x="45.5" y="36.9" width="1.8" height="1.8" fill="#e07028"/><rect x="18.9" y="75.4" width="1.1" height="1.1" fill="#903010"/><rect x="43.7" y="62.7" width="1.4" height="1.4" fill="#e07028"/><rect x="25.7" y="57.9" width="1.8" height="1.8" fill="#903010"/><rect x="19.9" y="66.7" width="1.4" height="1.4" fill="#f0a040"/><rect x="25.9" y="76.0" width="1.3" height="1.3" fill="#7a2a10"/><rect x="42.7" y="39.8" width="1.7" height="1.7" fill="#f0a040"/><rect x="17.4" y="56.0" width="0.8" height="0.8" fill="#e07028"/><rect x="24.4" y="37.9" width="1.6" height="1.6" fill="#903010"/><rect x="24.9" y="61.9" width="2.0" height="2.0" fill="#e07028"/><rect x="45.8" y="38.8" width="0.8" height="0.8" fill="#7a2a10"/><rect x="43.7" y="59.5" width="1.9" height="1.9" fill="#903010"/><rect x="41.0" y="65.6" width="1.4" height="1.4" fill="#903010"/><rect x="49.3" y="64.4" width="1.8" height="1.8" fill="#7a2a10"/><rect x="20.9" y="41.7" width="1.5" height="1.5" fill="#7a2a10"/><rect x="43.7" y="63.6" width="0.8" height="0.8" fill="#f0a040"/><rect x="19.4" y="57.5" width="1.1" height="1.1" fill="#7a2a10"/><rect x="19.4" y="40.4" width="1.0" height="1.0" fill="#7a2a10"/><rect x="26.0" y="75.8" width="1.4" height="1.4" fill="#7a2a10"/><rect x="49.8" y="52.2" width="1.0" height="1.0" fill="#903010"/><rect x="18.9" y="54.6" width="1.7" height="1.7" fill="#7a2a10"/><rect x="43.8" y="47.1" width="1.9" height="1.9" fill="#7a2a10"/><rect x="50.5" y="49.5" width="1.1" height="1.1" fill="#903010"/><rect x="49.0" y="44.8" width="0.8" height="0.8" fill="#f0a040"/><rect x="47.3" y="77.0" width="1.0" height="1.0" fill="#903010"/><rect x="23.4" y="56.7" width="2.0" height="2.0" fill="#903010"/><rect x="17.8" y="48.9" width="1.0" height="1.0" fill="#f0a040"/><rect x="44.2" y="80.0" width="1.3" height="1.3" fill="#903010"/><rect x="22.2" y="41.3" width="1.3" height="1.3" fill="#f0a040"/><rect x="25.8" y="42.2" width="1.9" height="1.9" fill="#e07028"/><rect x="22.2" y="46.6" width="1.2" height="1.2" fill="#903010"/><rect x="24.4" y="45.3" width="1.7" height="1.7" fill="#e07028"/><rect x="45.4" y="78.4" width="1.5" height="1.5" fill="#903010"/><rect x="44.8" y="37.4" width="0.9" height="0.9" fill="#7a2a10"/><rect x="19.9" y="77.2" width="0.8" height="0.8" fill="#7a2a10"/><rect x="19.1" y="76.0" width="1.3" height="1.3" fill="#f0a040"/><rect x="46.2" y="68.6" width="0.8" height="0.8" fill="#e07028"/><rect x="43.8" y="75.8" width="1.5" height="1.5" fill="#f0a040"/><rect x="21.7" y="58.0" width="1.2" height="1.2" fill="#f0a040"/><rect x="22.5" y="44.4" width="1.3" height="1.3" fill="#e07028"/><rect x="18.6" y="49.5" width="0.8" height="0.8" fill="#7a2a10"/><rect x="44.0" y="38.3" width="0.9" height="0.9" fill="#f0a040"/><rect x="19.6" y="44.9" width="1.8" height="1.8" fill="#7a2a10"/><rect x="47.1" y="32.9" width="1.6" height="1.6" fill="#7a2a10"/><rect x="48.2" y="48.3" width="0.9" height="0.9" fill="#7a2a10"/><rect x="25.6" y="62.1" width="1.3" height="1.3" fill="#7a2a10"/><rect x="18.1" y="38.5" width="1.9" height="1.9" fill="#903010"/><rect x="48.6" y="35.8" width="1.8" height="1.8" fill="#f0a040"/><rect x="44.8" y="57.2" width="1.2" height="1.2" fill="#903010"/><rect x="49.7" y="43.5" width="1.7" height="1.7" fill="#e07028"/><rect x="46.8" y="65.0" width="1.6" height="1.6" fill="#903010"/><rect x="44.5" y="49.6" width="2.0" height="2.0" fill="#f0a040"/><rect x="23.0" y="74.6" width="1.9" height="1.9" fill="#7a2a10"/><rect x="45.5" y="78.3" width="1.3" height="1.3" fill="#7a2a10"/><rect x="47.9" y="41.1" width="1.9" height="1.9" fill="#e07028"/><rect x="45.2" y="50.9" width="1.7" height="1.7" fill="#903010"/><rect x="43.0" y="76.3" width="0.8" height="0.8" fill="#903010"/><rect x="48.8" y="72.6" width="1.7" height="1.7" fill="#f0a040"/><rect x="42.3" y="72.4" width="1.5" height="1.5" fill="#903010"/><rect x="47.2" y="49.7" width="1.1" height="1.1" fill="#e07028"/><rect x="20.4" y="62.9" width="1.6" height="1.6" fill="#903010"/><rect x="20.3" y="50.0" width="1.9" height="1.9" fill="#f0a040"/><rect x="48.3" y="35.1" width="1.4" height="1.4" fill="#e07028"/><rect x="19.9" y="56.9" width="1.3" height="1.3" fill="#f0a040"/><rect x="17.2" y="42.4" width="1.4" height="1.4" fill="#903010"/><rect x="22.0" y="52.2" width="1.8" height="1.8" fill="#f0a040"/><rect x="18.2" y="55.7" width="1.1" height="1.1" fill="#7a2a10"/><rect x="22.6" y="78.2" width="1.8" height="1.8" fill="#7a2a10"/><rect x="41.7" y="34.9" width="1.0" height="1.0" fill="#e07028"/><rect x="23.9" y="63.7" width="0.9" height="0.9" fill="#e07028"/><rect x="23.4" y="75.3" width="1.2" height="1.2" fill="#f0a040"/><rect x="44.4" y="42.9" width="1.4" height="1.4" fill="#f0a040"/><path d="M27.8 32v48M40.2 32v48" stroke="#f2d070" stroke-width="1.3"/><path d="M34 33v9" stroke="#e8c060" stroke-width="1.5"/><path d="M31 74h7v4h-7z" fill="#c89030"/></svg>
<svg class="a" style="left:302px;top:824px" width="58" height="92" viewBox="0 0 58 92"><rect width="58" height="86" fill="#a81e1e"/><rect x="5" y="8" width="48" height="70" fill="none" stroke="#e08a80" stroke-width=".8"/><rect x="7" y="10" width="44" height="66" fill="#b42a28"/><rect x="44.4" y="13.7" width="1.1" height="1.1" fill="#f0b0a0"/><rect x="9.7" y="27.0" width="0.7" height="0.7" fill="#7a1010"/><rect x="48.8" y="38.9" width="1.0" height="1.0" fill="#7a1010"/><rect x="43.4" y="68.6" width="1.1" height="1.1" fill="#f0b0a0"/><rect x="12.1" y="44.1" width="0.8" height="0.8" fill="#f0b0a0"/><rect x="48.6" y="11.2" width="1.0" height="1.0" fill="#f0b0a0"/><rect x="8.7" y="72.6" width="0.8" height="0.8" fill="#e89080"/><rect x="9.8" y="44.9" width="1.2" height="1.2" fill="#7a1010"/><rect x="8.5" y="32.4" width="1.2" height="1.2" fill="#f0b0a0"/><rect x="50.3" y="31.1" width="1.1" height="1.1" fill="#e89080"/><rect x="44.1" y="31.3" width="1.0" height="1.0" fill="#e89080"/><rect x="48.4" y="22.8" width="1.2" height="1.2" fill="#7a1010"/><rect x="14.5" y="57.8" width="0.9" height="0.9" fill="#7a1010"/><rect x="20.3" y="72.5" width="1.1" height="1.1" fill="#7a1010"/><rect x="19.4" y="12.2" width="1.2" height="1.2" fill="#f0b0a0"/><rect x="10.0" y="67.1" width="0.9" height="0.9" fill="#7a1010"/><rect x="32.1" y="74.6" width="0.8" height="0.8" fill="#f0b0a0"/><rect x="11.3" y="50.4" width="1.0" height="1.0" fill="#f0b0a0"/><rect x="12.7" y="59.0" width="1.0" height="1.0" fill="#f0b0a0"/><rect x="11.9" y="61.7" width="0.8" height="0.8" fill="#e89080"/><rect x="48.2" y="32.2" width="0.6" height="0.6" fill="#7a1010"/><rect x="7.5" y="35.2" width="0.9" height="0.9" fill="#7a1010"/><rect x="21.4" y="12.2" width="1.0" height="1.0" fill="#7a1010"/><rect x="47.6" y="56.9" width="0.8" height="0.8" fill="#e89080"/><rect x="8.2" y="54.1" width="1.1" height="1.1" fill="#e89080"/><rect x="49.6" y="13.7" width="1.0" height="1.0" fill="#7a1010"/><rect x="7.1" y="53.5" width="0.9" height="0.9" fill="#e89080"/><rect x="28.4" y="72.6" width="1.0" height="1.0" fill="#e89080"/><rect x="14.6" y="39.2" width="1.1" height="1.1" fill="#7a1010"/><rect x="45.1" y="36.8" width="0.9" height="0.9" fill="#7a1010"/><rect x="49.8" y="72.3" width="0.9" height="0.9" fill="#7a1010"/><rect x="49.4" y="16.9" width="0.8" height="0.8" fill="#f0b0a0"/><rect x="45.2" y="50.1" width="1.0" height="1.0" fill="#e89080"/><rect x="8.9" y="50.4" width="1.1" height="1.1" fill="#f0b0a0"/><rect x="7.2" y="10.5" width="1.0" height="1.0" fill="#f0b0a0"/><rect x="41.3" y="11.6" width="0.8" height="0.8" fill="#e89080"/><rect x="8.7" y="52.5" width="0.8" height="0.8" fill="#f0b0a0"/><rect x="43.2" y="24.1" width="0.9" height="0.9" fill="#f0b0a0"/><rect x="43.1" y="75.5" width="0.7" height="0.7" fill="#e89080"/><rect x="8.0" y="25.3" width="0.9" height="0.9" fill="#7a1010"/><rect x="15" y="14" width="28" height="58" fill="#5a0a0e"/><ellipse cx="19.5" cy="16.5" rx="3" ry="1.2" fill="none" stroke="#d8706a" stroke-width=".9"/><ellipse cx="29.0" cy="16.5" rx="3" ry="1.2" fill="none" stroke="#d8706a" stroke-width=".9"/><ellipse cx="38.5" cy="16.5" rx="3" ry="1.2" fill="none" stroke="#d8706a" stroke-width=".9"/><ellipse cx="19.5" cy="20.4" rx="3" ry="1.2" fill="none" stroke="#d8706a" stroke-width=".9"/><ellipse cx="29.0" cy="20.4" rx="3" ry="1.2" fill="none" stroke="#d8706a" stroke-width=".9"/><ellipse cx="38.5" cy="20.4" rx="3" ry="1.2" fill="none" stroke="#d8706a" stroke-width=".9"/><ellipse cx="19.5" cy="24.3" rx="3" ry="1.2" fill="none" stroke="#d8706a" stroke-width=".9"/><ellipse cx="29.0" cy="24.3" rx="3" ry="1.2" fill="none" stroke="#d8706a" stroke-width=".9"/><ellipse cx="38.5" cy="24.3" rx="3" ry="1.2" fill="none" stroke="#d8706a" stroke-width=".9"/><ellipse cx="19.5" cy="28.2" rx="3" ry="1.2" fill="none" stroke="#d8706a" stroke-width=".9"/><ellipse cx="29.0" cy="28.2" rx="3" ry="1.2" fill="none" stroke="#d8706a" stroke-width=".9"/><ellipse cx="38.5" cy="28.2" rx="3" ry="1.2" fill="none" stroke="#d8706a" stroke-width=".9"/><ellipse cx="19.5" cy="32.1" rx="3" ry="1.2" fill="none" stroke="#d8706a" stroke-width=".9"/><ellipse cx="29.0" cy="32.1" rx="3" ry="1.2" fill="none" stroke="#d8706a" stroke-width=".9"/><ellipse cx="38.5" cy="32.1" rx="3" ry="1.2" fill="none" stroke="#d8706a" stroke-width=".9"/><ellipse cx="19.5" cy="36.0" rx="3" ry="1.2" fill="none" stroke="#d8706a" stroke-width=".9"/><ellipse cx="29.0" cy="36.0" rx="3" ry="1.2" fill="none" stroke="#d8706a" stroke-width=".9"/><ellipse cx="38.5" cy="36.0" rx="3" ry="1.2" fill="none" stroke="#d8706a" stroke-width=".9"/><ellipse cx="19.5" cy="39.9" rx="3" ry="1.2" fill="none" stroke="#d8706a" stroke-width=".9"/><ellipse cx="29.0" cy="39.9" rx="3" ry="1.2" fill="none" stroke="#d8706a" stroke-width=".9"/><ellipse cx="38.5" cy="39.9" rx="3" ry="1.2" fill="none" stroke="#d8706a" stroke-width=".9"/><ellipse cx="19.5" cy="43.8" rx="3" ry="1.2" fill="none" stroke="#d8706a" stroke-width=".9"/><ellipse cx="29.0" cy="43.8" rx="3" ry="1.2" fill="none" stroke="#d8706a" stroke-width=".9"/><ellipse cx="38.5" cy="43.8" rx="3" ry="1.2" fill="none" stroke="#d8706a" stroke-width=".9"/><ellipse cx="19.5" cy="47.7" rx="3" ry="1.2" fill="none" stroke="#d8706a" stroke-width=".9"/><ellipse cx="29.0" cy="47.7" rx="3" ry="1.2" fill="none" stroke="#d8706a" stroke-width=".9"/><ellipse cx="38.5" cy="47.7" rx="3" ry="1.2" fill="none" stroke="#d8706a" stroke-width=".9"/><ellipse cx="19.5" cy="51.6" rx="3" ry="1.2" fill="none" stroke="#d8706a" stroke-width=".9"/><ellipse cx="29.0" cy="51.6" rx="3" ry="1.2" fill="none" stroke="#d8706a" stroke-width=".9"/><ellipse cx="38.5" cy="51.6" rx="3" ry="1.2" fill="none" stroke="#d8706a" stroke-width=".9"/><ellipse cx="19.5" cy="55.5" rx="3" ry="1.2" fill="none" stroke="#d8706a" stroke-width=".9"/><ellipse cx="29.0" cy="55.5" rx="3" ry="1.2" fill="none" stroke="#d8706a" stroke-width=".9"/><ellipse cx="38.5" cy="55.5" rx="3" ry="1.2" fill="none" stroke="#d8706a" stroke-width=".9"/><ellipse cx="19.5" cy="59.4" rx="3" ry="1.2" fill="none" stroke="#d8706a" stroke-width=".9"/><ellipse cx="29.0" cy="59.4" rx="3" ry="1.2" fill="none" stroke="#d8706a" stroke-width=".9"/><ellipse cx="38.5" cy="59.4" rx="3" ry="1.2" fill="none" stroke="#d8706a" stroke-width=".9"/><ellipse cx="19.5" cy="63.3" rx="3" ry="1.2" fill="none" stroke="#d8706a" stroke-width=".9"/><ellipse cx="29.0" cy="63.3" rx="3" ry="1.2" fill="none" stroke="#d8706a" stroke-width=".9"/><ellipse cx="38.5" cy="63.3" rx="3" ry="1.2" fill="none" stroke="#d8706a" stroke-width=".9"/><ellipse cx="19.5" cy="67.2" rx="3" ry="1.2" fill="none" stroke="#d8706a" stroke-width=".9"/><ellipse cx="29.0" cy="67.2" rx="3" ry="1.2" fill="none" stroke="#d8706a" stroke-width=".9"/><ellipse cx="38.5" cy="67.2" rx="3" ry="1.2" fill="none" stroke="#d8706a" stroke-width=".9"/><ellipse cx="19.5" cy="71.1" rx="3" ry="1.2" fill="none" stroke="#d8706a" stroke-width=".9"/><ellipse cx="29.0" cy="71.1" rx="3" ry="1.2" fill="none" stroke="#d8706a" stroke-width=".9"/><ellipse cx="38.5" cy="71.1" rx="3" ry="1.2" fill="none" stroke="#d8706a" stroke-width=".9"/><rect x="15" y="14" width="28" height="58" fill="none" stroke="#d05050" stroke-width=".8"/><path d="M2 87h54M2 89h54" stroke="#cfcfcf" stroke-width="1" stroke-dasharray="1 1"/></svg>
<svg class="a" style="left:719px;top:822px" width="51" height="100" viewBox="0 0 51 100"><defs><linearGradient id="l6" x1="0" y1="0" x2="1" y2="1"><stop offset="0" stop-color="#5a1a0a"/><stop offset=".45" stop-color="#a84a20"/><stop offset="1" stop-color="#3a1006"/></linearGradient><linearGradient id="l6w" x1="0" y1="0" x2="0" y2="1"><stop offset="0" stop-color="#f0c088"/><stop offset="1" stop-color="#d89048"/></linearGradient></defs><rect width="51" height="100" fill="url(#l6)"/><path d="M18 20L51 11V60H18z" fill="url(#l6w)"/><path d="M20 19L51 11v3L20 22z" fill="#f8e0b0"/><ellipse cx="20.0" cy="28.0" rx="2.1" ry="2.8" fill="#2a0a04"/><ellipse cx="24.2" cy="26.9" rx="2.1" ry="2.8" fill="#2a0a04"/><ellipse cx="28.4" cy="25.8" rx="2.1" ry="2.8" fill="#2a0a04"/><ellipse cx="32.6" cy="24.7" rx="2.1" ry="2.8" fill="#2a0a04"/><ellipse cx="36.8" cy="23.6" rx="2.1" ry="2.8" fill="#2a0a04"/><ellipse cx="41.0" cy="22.5" rx="2.1" ry="2.8" fill="#2a0a04"/><ellipse cx="45.2" cy="21.4" rx="2.1" ry="2.8" fill="#2a0a04"/><ellipse cx="49.4" cy="20.3" rx="2.1" ry="2.8" fill="#2a0a04"/><path d="M26 48h16v8H26z" fill="#b87040" opacity=".6"/><path d="M28 40l6-8l4 10" stroke="#9a5a30" stroke-width=".8" fill="none"/><path d="M11 10l4 .5l-4 50h-5z" fill="#3a1206"/><circle cx="12" cy="16" r="2" fill="#2a0a04"/><circle cx="10.5" cy="30" r="2" fill="#2a0a04"/><path d="M14 60h37v5H14z" fill="#4a1608"/><path d="M15 65h36v28H15z" fill="#8a3a18"/><circle cx="10.5" cy="59" r="7" fill="#d8a070"/><path d="M0 67c4-2 9-1 12 3l5 9l2 10H0z" fill="#e0c4b0"/><path d="M17 84c6 1 12 4 15 7l-2 4c-4-2-9-4-13-5z" fill="#e0a070"/><path d="M24 86h27v8H24z" fill="#4a1408" opacity=".7"/><path d="M0 93h51v7H0z" fill="#200804"/></svg>
<svg class="a" style="left:195px;top:235px" width="280" height="140" viewBox="195 235 280 140"><g fill="#000"><path d="M460.3 275.3C455 283 450 292 445.7 295.7C432 310 420 319 405 328C390 336 372 343 350 344.7C330 346 300 344 274.5 338.8C268 340 264 341.5 262.1 342.9C256 347 250.4 353.1 241.7 368.9C246 363 250 361 253.3 359C257 356 260 353 263.5 351.7C268 350.5 272 350 273.8 350.2C276 354 278 358 279.6 360.7C300 361.5 330 361 345 359.5C370 357.5 385 351 396.7 345.8C414 337 426 323 431.7 316.7C440 309 448 302 450.3 298C453 292 456 283 460.3 275.3Z"/><path d="M325.2 283.1C319 294 316 303 315.8 310C315 320 312.5 327 310 332.7C316 326 321 317 324 305C325 296 325.6 290 325.2 283.1Z"/><path d="M261.6 308.5C262 313 262.2 316.7 264 318C268 321 273 320 277.9 315.5C280 311 281 308 283.2 306.2C284.3 307 284 311 285 313.2C287 316 291 317 293 316.5C296 315.5 298 314 298.9 312.6C299 308 299 305 299.5 303.3C301 298 304 293 307.1 289.3C307 293 306.5 297 306.5 299.2C306 305 304 312 302 318C300 324 296 330 290 333C285 334 281 332 278.5 327.8C277 330 275 333 272.7 334.2C268 336 262 336 258 333C255 331 253.5 328 252.8 325.4C246 329 238 335 228.8 340.7C240 332 252 322 261.6 308.5Z"/><path d="M211.9 304.2C206 313 202 322 202.6 328C203 337 208 341 215 341.5C222 342 232 338 237 333C243 326 246 316 247.5 304.5L247 298.5C246 299 244.5 299 244 299.3C244 305 243 313 240 320C236 327 228 331 218.3 331.9C212 332 208 329 207 324C205 317 207 311 211.3 304.5Z"/><path d="M225.3 303.9L230.6 309.2L229.4 315L225.3 316.8L220.1 311.5Z"/><path d="M243.1 263.6C255 266 270 266 285 262C298 257 307 252 313 248.3C311 248 309 247.5 307.5 247C306.5 246.5 306 246 305.8 245.2C308 243 311 242.5 313 243C316 243.5 318 244.5 320.4 245.9C318 249 312 254 300 260C290 266 275 270.5 262.1 272.3C255 272.5 248 272 241.7 270C240 270 237 270.5 234.7 272.3C235.5 273 237 274 238.8 275.3C238.5 277 237 279 235.3 280.5C234.5 281 232 281 228.8 281.7C227 282 224 283 221.3 284.6C221 285 219 287 218.3 288.7C218.3 289 219 290 218.9 291.6C218 293 217 297 217.8 299.2C218 300 216.5 301 214.8 302.7C214 302.7 213 302 212.5 300.3C212.5 300 214 298 216 296.3C216 296 215 295 214.3 293.3C214.5 292 216 290 218.3 286.3C220 284 223 281 228.8 277C234 270 239 265 243.1 263.6Z"/></g><g fill="none" stroke="#000" stroke-linecap="round"><path d="M242.8 272.3C241 280 240 284 239.3 286.3C237 290 235 292 232.9 293.3C229 296 226 298 223 299.2" stroke-width="2.6"/><path d="M248.7 275.8C247 282 246 288 244.6 291.6" stroke-width="2"/><path d="M258.6 281.3C261 277.5 265 275.8 269 276.3C273 277 276 278 276 279.5C273 282.5 268 283.5 265 285.5C262 288 263 291 265 293C264.5 296 262 296.8 258 296.5C253 296.5 250 298 245.8 299" stroke-width="3"/><path d="M287 270C285.5 280 285 286 281 290C277 293 276 297 274 301C271 304 267 305.5 263.5 306.5" stroke-width="3.2"/><path d="M297.5 270C296.5 278 294.5 286 291.5 290" stroke-width="2.4"/><path d="M284.8 275.8C284 282 283.5 287 282.5 289.3C280 292 277.5 294 275.5 295.7C272 299 270 302 265 305" stroke-width="2.8"/><path d="M246 300C249 298 252 297.5 256.3 297.2C259 297 261 297.5 262.5 297.2C265 295 266 292 265.6 290C264 288 262 287 259.5 288.5" stroke-width="2.6"/></g></svg>
<div class="a" style="left:1904px;top:187px;width:16px;height:951px;background:#dadada"></div>
<div class="a" style="left:1904px;top:188px;width:15px;height:14px;background:#fff;border:1px solid #c6c6c6"></div>
<div class="a" style="left:1904px;top:204px;width:15px;height:136px;background:#fff;border:1px solid #c6c6c6"></div>
<div class="a" style="left:1904px;top:1122px;width:15px;height:15px;background:#fff;border:1px solid #c6c6c6"></div>
<svg class="a" style="left:1904px;top:188px" width="16" height="14"><path d="M4 9.5h8l-4-4z" fill="#666"/></svg>
<svg class="a" style="left:1904px;top:1122px" width="16" height="15"><path d="M4 5.5h8l-4 4z" fill="#666"/></svg>
<div class="a" id="sb"></div>
<div class="st" style="left:8px;font-size:12px;letter-spacing:-.4px">Page 1 of 44</div>
<div class="st" style="left:90px;font-size:12px;letter-spacing:-.3px">3 of 4885 words</div>
<div class="st" style="left:223px;font-size:12px;letter-spacing:-.3px">Persian (Iran)</div>
<div class="st" style="left:1885px;font-size:12px">51%</div>
<div class="a" style="left:1672px;top:1138px;width:38px;height:22px;background:#c8c8c8"></div>
<svg class="a" style="left:0;top:1138px" width="1920" height="22" viewBox="0 1138 1920 22">
<g fill="none" stroke="#666" stroke-width="1">
<path d="M191.5 1142.5h8v12h-8z M194 1146h4M194 1149h4"/><path d="M199 1150l2 2l4-5" stroke="#666"/>
<path d="M1646.5 1142.5h6l1 1l1-1h6v11h-6l-1 1l-1-1h-6z M1653.5 1143.5v10"/>
<path d="M1683.5 1142.5h14v12h-14z M1686 1145.5h9M1686 1148.5h9M1686 1151.5h9"/>
<path d="M1722.5 1142.5h12v9M1722.5 1142.5v11h6M1725 1145.5h7M1725 1148h5"/>
</g>
<circle cx="1733" cy="1152.5" r="3.2" fill="#666"/>
<path d="M1753 1148.5h5" stroke="#555" stroke-width="1.6"/>
<path d="M1763 1148.5h99" stroke="#aaa" stroke-width="1"/><path d="M1813.5 1146v5" stroke="#aaa"/>
<rect x="1785" y="1142" width="4" height="12" fill="#666"/>
<path d="M1866 1148.5h8M1870 1144.5v8" stroke="#555" stroke-width="1.6"/>
</svg>
<div class="a" id="task"></div>
<div class="a" style="left:343px;top:1160px;width:48px;height:40px;background:#4b5866"></div>
<div class="a" style="left:200px;top:1198px;width:40px;height:2px;background:#76b9ed"></div>
<div class="a" style="left:249px;top:1198px;width:40px;height:2px;background:#76b9ed"></div>
<div class="a" style="left:343px;top:1198px;width:48px;height:2px;background:#76b9ed"></div>
<svg class="a" style="left:0;top:1160px" width="420" height="40" viewBox="0 1160 420 40">
<g fill="#fff"><path d="M16 1173.2l6.8-1v7.4H16zM23.8 1172l8.2-1.2v8.8h-8.2zM16 1180.5h6.8v7.4l-6.8-1zM23.8 1180.5H32v8.8l-8.2-1.2z"/></g>
<circle cx="74" cy="1177" r="5.5" fill="none" stroke="#fff" stroke-width="1.5"/><path d="M70 1181.5l-5.5 5.5" stroke="#fff" stroke-width="1.6"/>
<g fill="none" stroke="#fff" stroke-width="1.3"><rect x="113" y="1175" width="10" height="10"/><path d="M111 1172h14M111 1188h14M127 1172v3M127 1178v3M127 1184v3"/></g>
<path d="M171 1168c-6 0-10 5-10 11c0 7 5 11 11 11c3 0 6-1 8-2v-4c-2 1-5 2-8 2c-4 0-6-2-7-5h15c.5-7-3-13-9-13zm-5 9c.5-3 3-5 5.5-5s4 2 4 5z" fill="#1e88e5"/>
<path d="M209 1172h8l2 2h11v14h-21z" fill="#f0c040"/><path d="M209 1176h21v12h-21z" fill="#f8d35e"/><path d="M215 1183h9v5h-2v-3h-5v3h-2z" fill="#3b8fd8"/>
<circle cx="269" cy="1180" r="12" fill="#db4437"/>
<path d="M269 1180L279.4 1174A12 12 0 0 1 273 1191.3z" fill="#f4c20d"/>
<path d="M269 1180L273 1191.3A12 12 0 0 1 258.6 1174z" fill="#0f9d58"/>
<circle cx="269" cy="1180" r="5.5" fill="#fff"/><circle cx="269" cy="1180" r="4.3" fill="#4285f4"/>
<circle cx="318" cy="1181" r="11" fill="#ff7139"/><circle cx="318" cy="1182" r="6.5" fill="#9059ff"/><path d="M310 1172c4-3 10-4 14-1c-3 0-5 2-6 4z" fill="#ffbd4f"/><path d="M324 1168c3 3 6 8 5 13l-4-4z" fill="#ff4f5e"/>
<rect x="362" y="1169" width="17" height="21" rx="1.5" fill="#2b7cd3"/><rect x="362" y="1169" width="17" height="7" fill="#41a5ee"/><rect x="362" y="1183" width="17" height="7" fill="#185abd"/>
<rect x="354" y="1173" width="13" height="13" rx="1" fill="#185abd"/><text x="355.5" y="1183.5" font-size="10" font-weight="bold" fill="#fff" font-family="Liberation Sans">W</text>
</svg>
<svg class="a" style="left:1690px;top:1160px" width="230" height="40" viewBox="1690 1160 230 40">
<path d="M1701 1184l6-6l6 6" fill="none" stroke="#fff" stroke-width="1.3"/>
<g fill="none" stroke="#fff" stroke-width="1.2"><path d="M1726 1187a12 12 0 0 1 12-12M1729 1187a9 9 0 0 1 9-9M1732 1187a6 6 0 0 1 6-6"/></g><circle cx="1737" cy="1186" r="1.3" fill="#fff"/>
<path d="M1749 1177h3l4-4v16l-4-4h-3z" fill="none" stroke="#fff" stroke-width="1.1"/><path d="M1758 1178c1.5 2 1.5 4 0 6M1760.5 1176c2.5 3 2.5 7 0 10" fill="none" stroke="#fff" stroke-width="1.1"/>
<path d="M1878 1171h15v10h-10l-3 3v-3h-2z" fill="#fff"/><path d="M1880 1174h10M1880 1177h10" stroke="#1e2d3e" stroke-width="1"/>
<circle cx="1893" cy="1186" r="7" fill="#1e2d3e" stroke="#888" stroke-width="1"/>
</svg>
<div class="t" style="left:1889px;top:1181px;font-size:11px;color:#fff">6</div>
<svg class="a" style="left:1770px;top:1165px" width="30" height="30" viewBox="1770 1165 30 30"><g fill="none" stroke="#fff" stroke-width="1.3"><path d="M1781.5 1175v9.3"/><path d="M1783 1184.3h5.5v-2.5a2 2 0 1 0 -2.5 0"/></g><rect x="1785.6" y="1174.6" width="1.6" height="1.6" fill="#fff"/></svg>
<div class="t" style="left:1811px;top:1165px;font-size:12px;color:#fff;letter-spacing:-.2px">11:04 AM</div>
<div class="t" style="left:1812px;top:1182px;font-size:12px;color:#fff;letter-spacing:-.2px">7/7/2025</div>
</body></html>
